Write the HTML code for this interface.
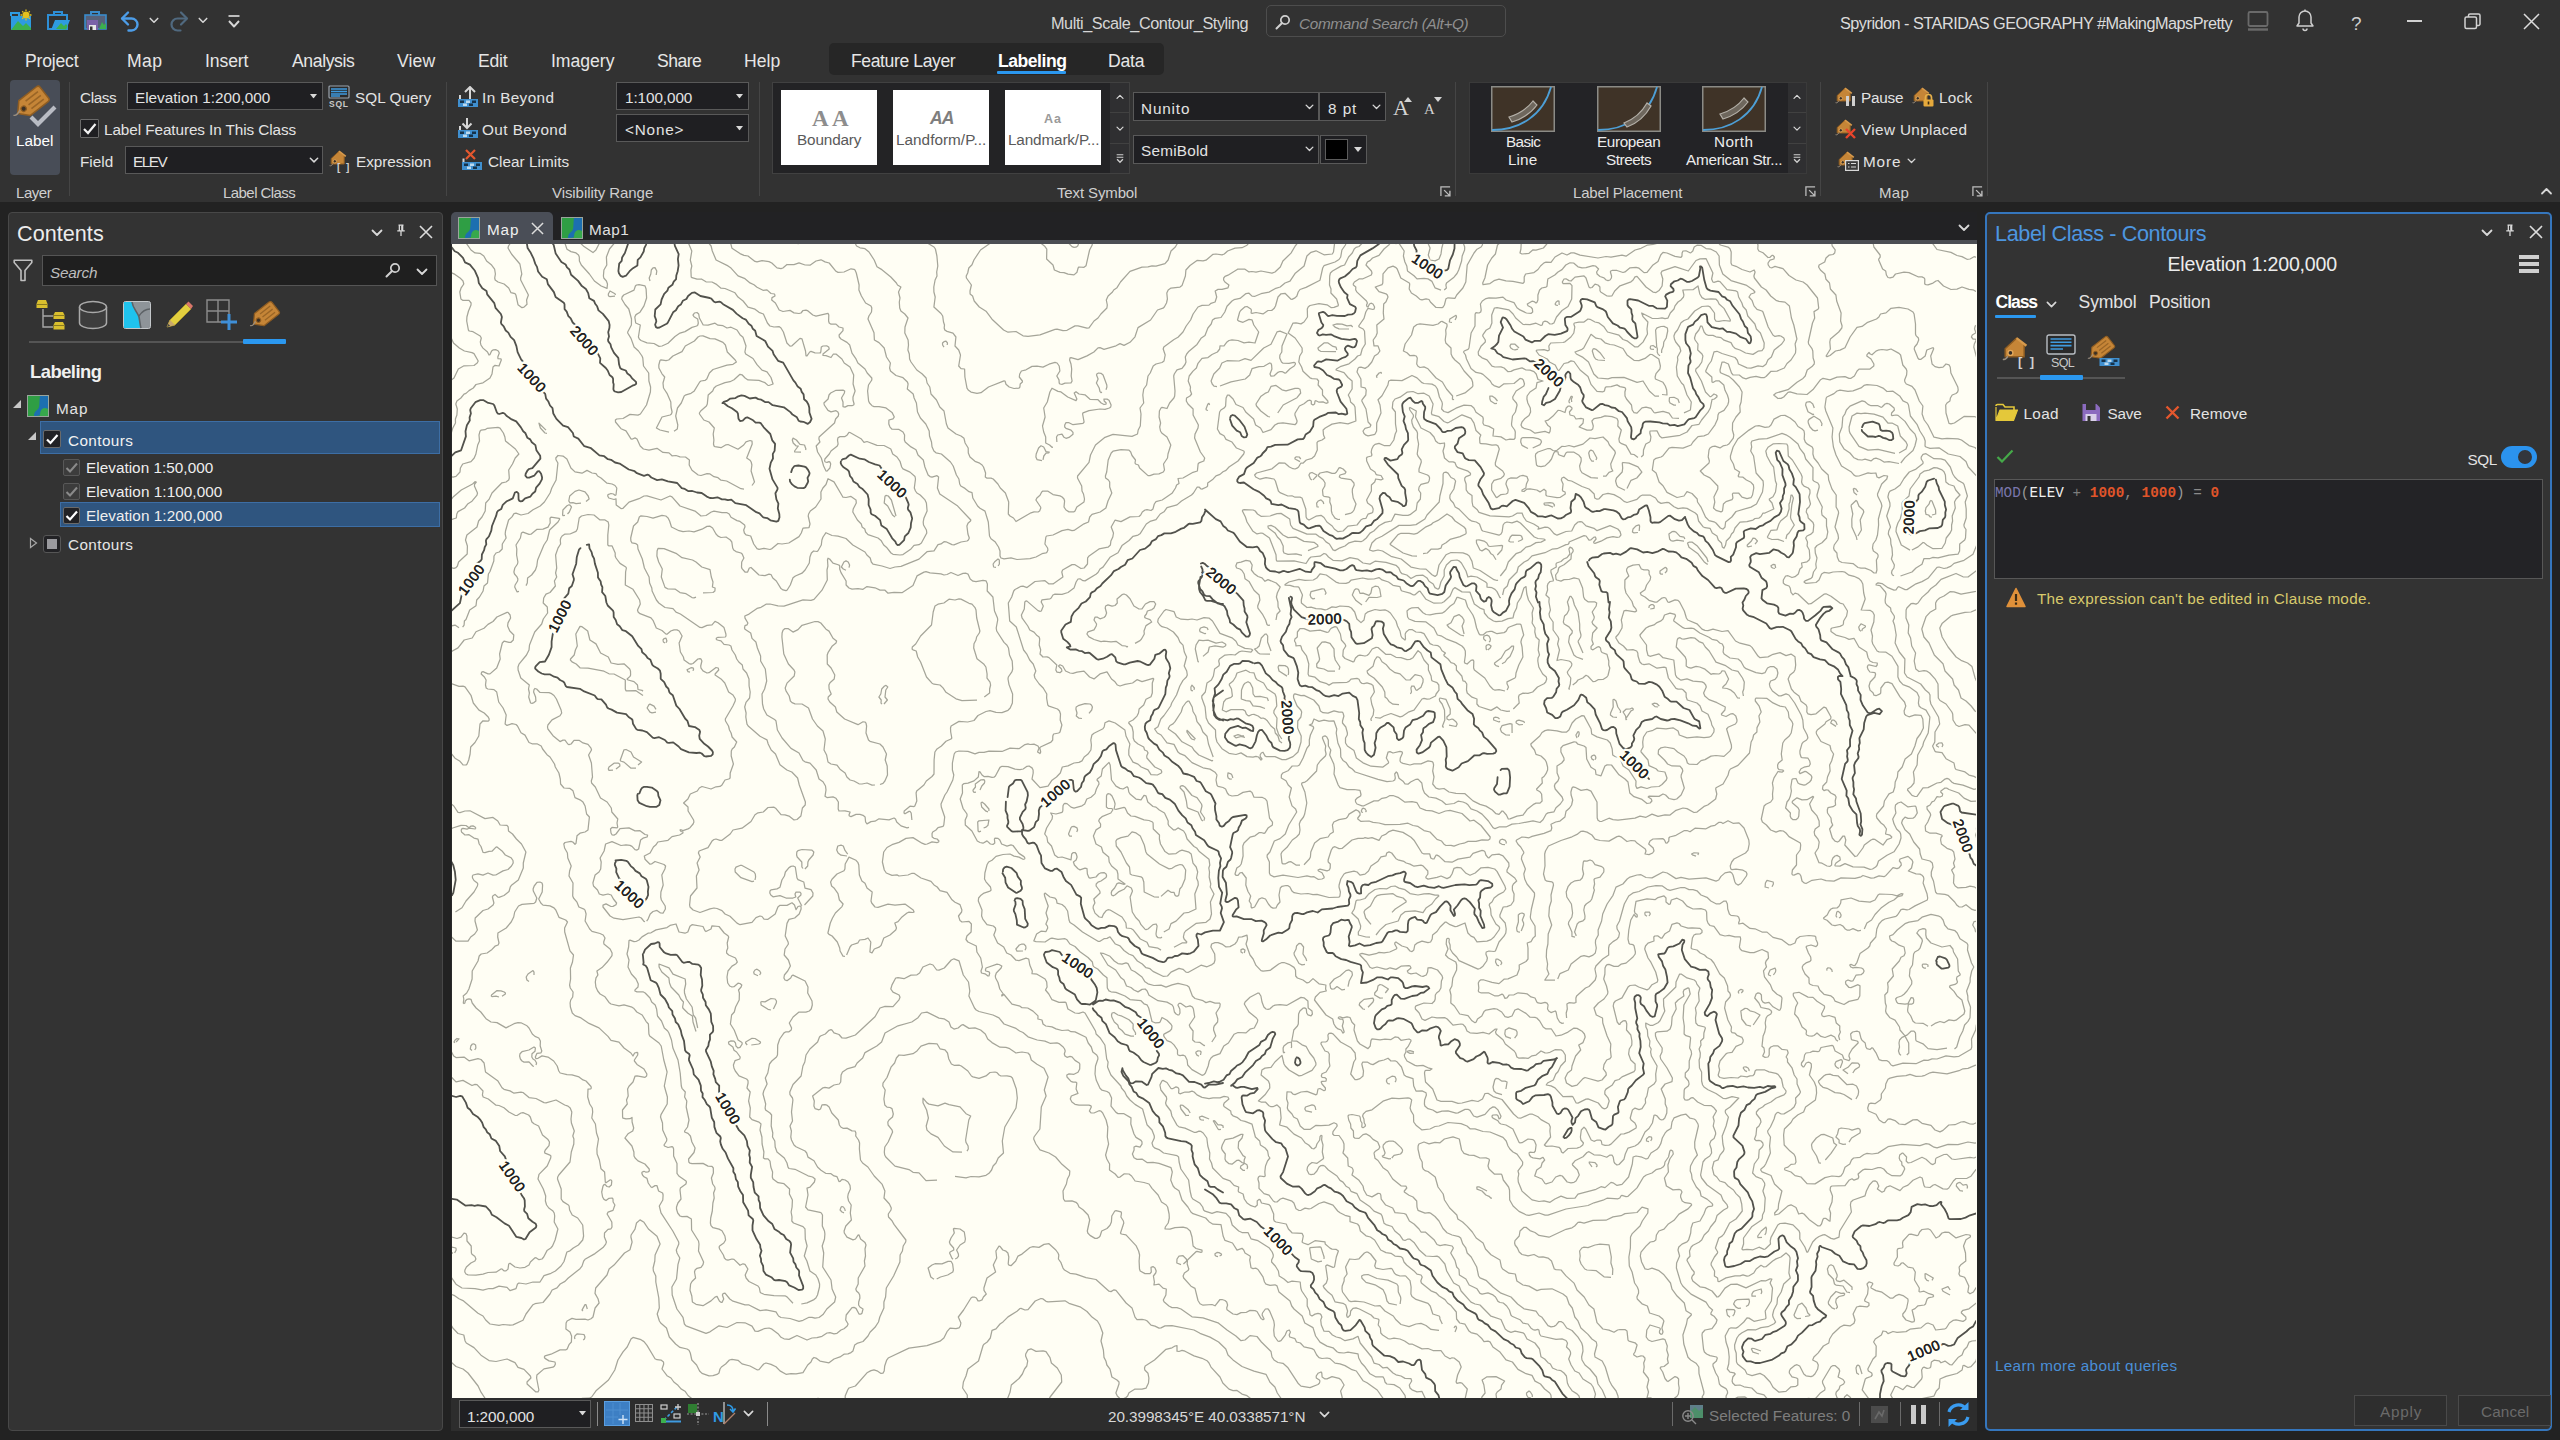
<!DOCTYPE html>
<html lang="en"><head><meta charset="utf-8"><title>ArcGIS Pro - Multi_Scale_Contour_Styling</title>
<style>
html,body{margin:0;padding:0;}
body{width:2560px;height:1440px;overflow:hidden;background:#222222;position:relative;
font-family:"Liberation Sans",sans-serif;color:#e3e3e3;}
.b{position:absolute;box-sizing:border-box;display:block;}
.t{position:absolute;white-space:nowrap;line-height:1;}
</style></head>
<body>
<svg width="0" height="0" style="position:absolute"><defs>
<symbol id="tag" viewBox="0 0 32 32"><g transform="rotate(-38 16 16)"><path d="M2.5 16 L9.5 8.5 H27.5 a2 2 0 0 1 2 2 V21.5 a2 2 0 0 1 -2 2 H9.5 Z" fill="#c58537" stroke="#8f5d22" stroke-width="1.2" stroke-linejoin="round"/><circle cx="8.6" cy="16" r="2.1" fill="#3a3026" stroke="#8f5d22" stroke-width="1"/><path d="M13.5 12.2 H26 M13.5 16 H26 M13.5 19.8 H26" stroke="#9a6526" stroke-width="1.3"/></g><path d="M7.2 21.5 c-1.5 3 -3.5 5 -5.2 4.2" fill="none" stroke="#9b8f80" stroke-width="1.1"/></symbol>
<symbol id="tagS" viewBox="0 0 22 22"><path d="M2.2 9.5 L10 2.2 L15.2 6.2 L15.2 15 L2.2 15 Z" fill="#c58537" stroke="#8f5d22" stroke-width="1"/><path d="M10 2.2 L16.8 7.4" stroke="#d79a4c" stroke-width="1.6" fill="none"/><circle cx="5.8" cy="12.3" r="1.7" fill="#3a3026" stroke="#e2a85c" stroke-width=".9"/><path d="M4 14.5 c-1 2 -2.2 2.6 -3.4 2.2" fill="none" stroke="#9b8f80" stroke-width="1"/></symbol>
<symbol id="mapico" viewBox="0 0 22 22"><rect x=".5" y=".5" width="21" height="21" fill="#2f9e44" stroke="#9aa59c"/><path d="M13 1 h8 v13 c-3 0 -4 1 -6 4 c-2 3 -5 3 -8 3 c0 -4 2 -5 4 -7 c2 -2 1 -6 2 -13z" fill="#1c6fb0"/><path d="M15 14 c2 -1.5 4 -1 6 0 v7 h-8 c0 -3 0 -5 2 -7z" fill="#37a84c"/></symbol>
<symbol id="chev" viewBox="0 0 12 8"><path d="M1.5 1.5 L6 6 L10.5 1.5" fill="none" stroke="#d8d8d8" stroke-width="1.8" stroke-linecap="round" stroke-linejoin="round"/></symbol>
<symbol id="chevu" viewBox="0 0 12 8"><path d="M1.5 6.5 L6 2 L10.5 6.5" fill="none" stroke="#d8d8d8" stroke-width="1.8" stroke-linecap="round" stroke-linejoin="round"/></symbol>
<symbol id="tri" viewBox="0 0 8 5"><path d="M0 0 H8 L4 5 Z" fill="#d8d8d8"/></symbol>
<symbol id="xx" viewBox="0 0 14 14"><path d="M1 1 L13 13 M13 1 L1 13" stroke="#dcdcdc" stroke-width="1.6" fill="none"/></symbol>
<symbol id="pin" viewBox="0 0 12 16"><path d="M3 1.5 H9 M4 1.5 V8 M8 1.5 V8 M1.5 8.5 H10.5 M6 8.5 V14.5" stroke="#dcdcdc" stroke-width="1.5" fill="none"/><path d="M6.2 2 H8 V8 H6.2Z" fill="#dcdcdc"/></symbol>
<symbol id="launch" viewBox="0 0 12 12"><path d="M1 11 V1 H11" fill="none" stroke="#bdbdbd" stroke-width="1.4"/><path d="M4.5 4.5 L10.5 10.5 M10.8 5.2 V10.8 H5.2" fill="none" stroke="#bdbdbd" stroke-width="1.5"/></symbol>
<symbol id="more" viewBox="0 0 12 12"><path d="M2 1.5 H10 M2 4.5 H10" stroke="#cfcfcf" stroke-width="1.4"/><path d="M2.5 7 L6 10.5 L9.5 7" fill="none" stroke="#cfcfcf" stroke-width="1.6"/></symbol>
<symbol id="srch" viewBox="0 0 16 16"><circle cx="10" cy="6" r="4.2" fill="none" stroke="#d0d0d0" stroke-width="1.7"/><path d="M6.8 9.2 L1.5 14.5" stroke="#d0d0d0" stroke-width="2" stroke-linecap="round"/></symbol>
<symbol id="place" viewBox="0 0 64 46"><rect x=".75" y=".75" width="62.5" height="44.5" fill="#3f3327" stroke="#8b8b86" stroke-width="1.5"/></symbol>
<symbol id="blueblk" viewBox="0 0 20 8"><rect x="0" y="0" width="20" height="8" fill="#3f8fcf"/><rect x="2" y="1.5" width="4" height="2.5" fill="#16324a"/><rect x="8" y="1.5" width="4" height="2.5" fill="#bcd9ee"/><rect x="14" y="1.5" width="4" height="2.5" fill="#16324a"/><rect x="5" y="4.5" width="4" height="2.5" fill="#bcd9ee"/><rect x="11" y="4.5" width="4" height="2.5" fill="#16324a"/></symbol>
</defs></svg>
<div class="b" style="left:0px;top:0px;width:2560px;height:202px;background:#323232;"></div>
<svg class="b" style="left:10px;top:9px;" width="22" height="22" viewBox="0 0 22 22"><rect x="1" y="7" width="20" height="14" fill="#2e9be0"/><path d="M1 21 L8 12 L13 17 L16 14 L21 19 V21Z" fill="#3cb04e"/><path d="M1 7 V4 H9 V7" fill="none" stroke="#2e9be0" stroke-width="2"/><circle cx="16" cy="6" r="3.6" fill="#e4c11e"/><path d="M16 0.5 V2 M16 10 V11.5 M10.5 6 H12 M20 6 H21.5 M12.2 2.2 L13.2 3.2 M19.8 2.2 L18.8 3.2 M12.2 9.8 L13.2 8.8 M19.8 9.8 L18.8 8.8" stroke="#e4c11e" stroke-width="1.3"/></svg>
<svg class="b" style="left:47px;top:9px;" width="23" height="22" viewBox="0 0 23 22"><path d="M7 6 V3 H15 V6" fill="none" stroke="#2e8fd6" stroke-width="2"/><rect x="1" y="6" width="19" height="14" fill="none" stroke="#2e8fd6" stroke-width="2"/><path d="M4 21 L8 11 H23 L19 21Z" fill="#2e9be0"/><path d="M9 20 L14 14 L17 17 L19 15 L20.5 17 L19 20.5Z" fill="#3cb04e"/></svg>
<svg class="b" style="left:84px;top:9px;" width="24" height="22" viewBox="0 0 24 22"><path d="M7 6 V3 H15 V6" fill="none" stroke="#3a8ccc" stroke-width="2"/><rect x="1" y="6" width="21" height="14" fill="#56617a" stroke="#3a8ccc" stroke-width="1.6"/><rect x="3" y="11" width="11" height="10" fill="#7a62a8"/><rect x="5" y="16" width="7" height="5" fill="#e8e8e8"/><rect x="6" y="17.5" width="2.5" height="3.5" fill="#333"/><path d="M15 20 L18 13 L20 16 L22 14 V20Z" fill="#3cb04e"/></svg>
<svg class="b" style="left:119px;top:10px;" width="22" height="22" viewBox="0 0 22 22"><path d="M9 2.5 L3 8.5 L9 14.5" fill="none" stroke="#4d9de8" stroke-width="2.4" stroke-linecap="round" stroke-linejoin="round"/><path d="M3.5 8.5 H12.5 a6 6 0 0 1 0 12 H9.5" fill="none" stroke="#4d9de8" stroke-width="2.4" stroke-linecap="round"/></svg>
<svg class="b" style="left:149px;top:17px;" width="10" height="7"><use href="#chev"/></svg>
<svg class="b" style="left:168px;top:10px;" width="22" height="22" viewBox="0 0 22 22"><path d="M13 2.5 L19 8.5 L13 14.5" fill="none" stroke="#50697f" stroke-width="2.2" stroke-linecap="round" stroke-linejoin="round"/><path d="M18.5 8.5 H9.5 a6 6 0 0 0 0 12 H12.5" fill="none" stroke="#50697f" stroke-width="2.2" stroke-linecap="round"/></svg>
<svg class="b" style="left:198px;top:17px;" width="10" height="7"><use href="#chev"/></svg>
<svg class="b" style="left:227px;top:14px;" width="14" height="15" viewBox="0 0 14 15"><path d="M1.5 2 H12.5" stroke="#d8d8d8" stroke-width="1.7"/><path d="M2 7 L7 12.5 L12 7" fill="none" stroke="#d8d8d8" stroke-width="1.9" stroke-linejoin="round"/></svg>
<div class="b" style="left:1266px;top:5px;width:240px;height:32px;border:1px solid #4d4d4d;border-radius:5px;"></div>
<svg class="b" style="left:1275px;top:14px;" width="16" height="16"><use href="#srch"/></svg>
<svg class="b" style="left:2247px;top:10px;" width="22" height="22" viewBox="0 0 22 22"><rect x="1.5" y="2" width="19" height="14" rx="1.5" fill="none" stroke="#6a6a6a" stroke-width="1.8"/><path d="M1 19.5 H21" stroke="#6a6a6a" stroke-width="2.4"/></svg>
<svg class="b" style="left:2295px;top:9px;" width="20" height="23" viewBox="0 0 20 23"><path d="M10 2 a6 6 0 0 1 6 6 v6 l2 3 H2 l2 -3 V8 a6 6 0 0 1 6 -6z" fill="none" stroke="#cfcfcf" stroke-width="1.5" stroke-linejoin="round"/><path d="M8 19.5 a2 2 0 0 0 4 0" fill="none" stroke="#cfcfcf" stroke-width="1.5"/><path d="M10 0.5 V2" stroke="#cfcfcf" stroke-width="1.5"/></svg>
<div class="b" style="left:2407px;top:20px;width:15px;height:2px;background:#d2d2d2;"></div>
<svg class="b" style="left:2464px;top:13px;" width="17" height="17" viewBox="0 0 17 17"><rect x="1" y="4" width="11.5" height="11.5" rx="1.5" fill="none" stroke="#d2d2d2" stroke-width="1.5"/><path d="M4.5 4 V2.5 a1.5 1.5 0 0 1 1.5 -1.5 H14.5 a1.5 1.5 0 0 1 1.5 1.5 V11 a1.5 1.5 0 0 1 -1.5 1.5 H12.5" fill="none" stroke="#d2d2d2" stroke-width="1.5"/></svg>
<svg class="b" style="left:2523px;top:13px;" width="17" height="17" viewBox="0 0 17 17"><path d="M1 1 L16 16 M16 1 L1 16" stroke="#dcdcdc" stroke-width="1.5"/></svg>
<div class="b" style="left:829px;top:43px;width:335px;height:32px;background:#262626;border-radius:5px;"></div>
<div class="b" style="left:997px;top:71px;width:69px;height:3px;background:#2b98f0;border-radius:1px;"></div>
<div class="b" style="left:10px;top:80px;width:50px;height:95px;background:#484d57;border-radius:4px;"></div>
<svg class="b" style="left:11px;top:83px;" width="40" height="40"><use href="#tag"/></svg>
<svg class="b" style="left:28px;top:104px;" width="30" height="24" viewBox="0 0 30 24"><path d="M3 13 L10 20 L27 3" fill="none" stroke="#b9bcc4" stroke-width="4.2"/></svg>
<div class="b" style="left:69px;top:82px;width:1px;height:114px;background:#454545;"></div>
<div class="b" style="left:127px;top:82px;width:196px;height:28px;background:#1f1f22;border:1px solid #595959;"></div>
<svg class="b" style="left:310px;top:94px;" width="7" height="4.5"><use href="#tri"/></svg>
<svg class="b" style="left:328px;top:85px;" width="22" height="22" viewBox="0 0 22 22"><rect x="1" y="1" width="20" height="12" rx="1" fill="#2a2a2a" stroke="#9aa3ad" stroke-width="1.2"/><path d="M3 4 H19 M3 6.5 H19 M3 9 H19 M3 11 H12" stroke="#3f9be0" stroke-width="1.3"/></svg>
<div class="b" style="left:80px;top:119px;width:19px;height:19px;background:#1f1f22;border:1px solid #6a6a6a;border-radius:1px;"></div>
<svg class="b" style="left:82px;top:121px;" width="15" height="15" viewBox="0 0 15 15"><path d="M2 8 L6 12 L13.5 3" fill="none" stroke="#f2f2f2" stroke-width="2.2"/></svg>
<div class="b" style="left:125px;top:146px;width:198px;height:28px;background:#1f1f22;border:1px solid #595959;"></div>
<svg class="b" style="left:309px;top:157px;" width="10" height="6.5"><use href="#chev"/></svg>
<svg class="b" style="left:329px;top:149px;" width="22" height="22"><use href="#tagS"/></svg>
<div class="b" style="left:446px;top:82px;width:1px;height:114px;background:#454545;"></div>
<svg class="b" style="left:458px;top:86px;" width="20" height="21" viewBox="0 0 20 21"><rect x="0" y="13" width="20" height="8" fill="#3f8fcf"/><rect x="2" y="14.5" width="4" height="2.5" fill="#16324a"/><rect x="8" y="14.5" width="4" height="2.5" fill="#bcd9ee"/><rect x="14" y="14.5" width="4" height="2.5" fill="#16324a"/><rect x="5" y="17.5" width="4" height="2.5" fill="#bcd9ee"/><rect x="11" y="17.5" width="4" height="2.5" fill="#16324a"/><path d="M2 13 V9 M12 13 V2 M7 6 L12 1 L17 6" fill="none" stroke="#d6d6d6" stroke-width="2"/></svg>
<svg class="b" style="left:458px;top:117px;" width="20" height="21" viewBox="0 0 20 21"><rect x="0" y="13" width="20" height="8" fill="#3f8fcf"/><rect x="2" y="14.5" width="4" height="2.5" fill="#16324a"/><rect x="8" y="14.5" width="4" height="2.5" fill="#bcd9ee"/><rect x="14" y="14.5" width="4" height="2.5" fill="#16324a"/><rect x="5" y="17.5" width="4" height="2.5" fill="#bcd9ee"/><rect x="11" y="17.5" width="4" height="2.5" fill="#16324a"/><path d="M2 13 V9 M9 1 V11 M4.5 6.5 L9 11 L13.5 6.5" fill="none" stroke="#d6d6d6" stroke-width="2"/></svg>
<svg class="b" style="left:462px;top:149px;" width="20" height="21" viewBox="0 0 20 21"><rect x="0" y="13" width="20" height="8" fill="#3f8fcf"/><rect x="2" y="14.5" width="4" height="2.5" fill="#16324a"/><rect x="8" y="14.5" width="4" height="2.5" fill="#bcd9ee"/><rect x="14" y="14.5" width="4" height="2.5" fill="#16324a"/><rect x="5" y="17.5" width="4" height="2.5" fill="#bcd9ee"/><rect x="11" y="17.5" width="4" height="2.5" fill="#16324a"/><path d="M1.5 13 V9.5" stroke="#d6d6d6" stroke-width="2"/><path d="M4 1 L13 10 M13 1 L4 10" stroke="#e4572e" stroke-width="2.2"/></svg>
<div class="b" style="left:616px;top:82px;width:133px;height:28px;background:#1f1f22;border:1px solid #595959;"></div>
<svg class="b" style="left:736px;top:94px;" width="7" height="4.5"><use href="#tri"/></svg>
<div class="b" style="left:616px;top:114px;width:133px;height:28px;background:#1f1f22;border:1px solid #595959;"></div>
<svg class="b" style="left:736px;top:126px;" width="7" height="4.5"><use href="#tri"/></svg>
<div class="b" style="left:759px;top:82px;width:1px;height:114px;background:#454545;"></div>
<div class="b" style="left:772px;top:82px;width:358px;height:92px;background:#232325;border:1px solid #414141;"></div>
<div class="b" style="left:1110px;top:83px;width:19px;height:90px;background:#2f2f31;"></div>
<div class="b" style="left:1110px;top:112px;width:19px;height:1px;background:#414141;"></div>
<div class="b" style="left:1110px;top:143px;width:19px;height:1px;background:#414141;"></div>
<div class="b" style="left:781px;top:90px;width:96px;height:75px;background:#ffffff;"></div>
<div class="b" style="left:893px;top:90px;width:96px;height:75px;background:#ffffff;"></div>
<div class="b" style="left:1005px;top:90px;width:96px;height:75px;background:#ffffff;"></div>
<svg class="b" style="left:1116px;top:94px;" width="8" height="5.5"><use href="#chevu"/></svg>
<svg class="b" style="left:1116px;top:126px;" width="8" height="5.5"><use href="#chev"/></svg>
<svg class="b" style="left:1115px;top:153px;" width="10" height="11"><use href="#more"/></svg>
<div class="b" style="left:1133px;top:92px;width:186px;height:29px;background:#1f1f22;border:1px solid #595959;"></div>
<svg class="b" style="left:1305px;top:104px;" width="9" height="6"><use href="#chev"/></svg>
<div class="b" style="left:1319px;top:92px;width:67px;height:29px;background:#1f1f22;border:1px solid #595959;"></div>
<svg class="b" style="left:1372px;top:104px;" width="9" height="6"><use href="#chev"/></svg>
<svg class="b" style="left:1404px;top:97px;" width="8" height="5" viewBox="0 0 8 5"><path d="M0 5 H8 L4 0Z" fill="#d4d4d4"/></svg>
<svg class="b" style="left:1434px;top:97px;" width="8" height="5" viewBox="0 0 8 5"><path d="M0 0 H8 L4 5Z" fill="#d4d4d4"/></svg>
<div class="b" style="left:1133px;top:135px;width:186px;height:29px;background:#1f1f22;border:1px solid #595959;"></div>
<svg class="b" style="left:1305px;top:146px;" width="9" height="6"><use href="#chev"/></svg>
<div class="b" style="left:1320px;top:135px;width:47px;height:29px;background:#1f1f22;border:1px solid #595959;"></div>
<div class="b" style="left:1325px;top:139px;width:23px;height:21px;background:#000000;border:1px solid #5c5c5c;"></div>
<svg class="b" style="left:1354px;top:147px;" width="8" height="5"><use href="#tri"/></svg>
<svg class="b" style="left:1440px;top:186px;" width="11" height="11"><use href="#launch"/></svg>
<div class="b" style="left:1455px;top:82px;width:1px;height:114px;background:#454545;"></div>
<div class="b" style="left:1469px;top:82px;width:338px;height:92px;background:#232326;border:1px solid #3a3a3a;"></div>
<div class="b" style="left:1788px;top:83px;width:18px;height:90px;background:#2f2f31;"></div>
<div class="b" style="left:1788px;top:112px;width:18px;height:1px;background:#414141;"></div>
<div class="b" style="left:1788px;top:143px;width:18px;height:1px;background:#414141;"></div>
<svg class="b" style="left:1491px;top:86px;" width="64" height="46" viewBox="0 0 64 46"><rect x=".75" y=".75" width="62.5" height="44.5" fill="#3f3327" stroke="#8b8b86" stroke-width="1.5"/><path d="M1 44 C28 44 52 30 60 1" fill="none" stroke="#4d9fd6" stroke-width="1.8"/><path d="M18 31 C28 28 36 23 42 15 L46 19 C40 27 31 33 21 36 Z" fill="#6e675d" stroke="#b4b0a8" stroke-width="1.2"/></svg>
<svg class="b" style="left:1597px;top:86px;" width="64" height="46" viewBox="0 0 64 46"><rect x=".75" y=".75" width="62.5" height="44.5" fill="#3f3327" stroke="#8b8b86" stroke-width="1.5"/><path d="M1 44 C28 44 52 30 60 1" fill="none" stroke="#4d9fd6" stroke-width="1.8"/><path d="M27 37 C37 33 45 26 50 17 L54 20 C49 29 41 37 30 41 Z" fill="#6e675d" stroke="#b4b0a8" stroke-width="1.2"/></svg>
<svg class="b" style="left:1702px;top:86px;" width="64" height="46" viewBox="0 0 64 46"><rect x=".75" y=".75" width="62.5" height="44.5" fill="#3f3327" stroke="#8b8b86" stroke-width="1.5"/><path d="M1 44 C28 44 52 30 60 1" fill="none" stroke="#4d9fd6" stroke-width="1.8"/><path d="M18 28 C28 25 36 20 42 12 L46 16 C40 24 31 30 21 33 Z" fill="#6e675d" stroke="#b4b0a8" stroke-width="1.2"/></svg>
<svg class="b" style="left:1793px;top:94px;" width="8" height="5.5"><use href="#chevu"/></svg>
<svg class="b" style="left:1793px;top:126px;" width="8" height="5.5"><use href="#chev"/></svg>
<svg class="b" style="left:1792px;top:153px;" width="10" height="11"><use href="#more"/></svg>
<svg class="b" style="left:1805px;top:186px;" width="11" height="11"><use href="#launch"/></svg>
<div class="b" style="left:1820px;top:82px;width:1px;height:114px;background:#454545;"></div>
<svg class="b" style="left:1835px;top:86px;" width="22" height="22"><use href="#tagS"/></svg>
<div class="b" style="left:1846px;top:96px;width:3px;height:10px;background:#d0d0d0;"></div>
<div class="b" style="left:1852px;top:96px;width:3px;height:10px;background:#d0d0d0;"></div>
<svg class="b" style="left:1912px;top:86px;" width="22" height="22"><use href="#tagS"/></svg>
<svg class="b" style="left:1922px;top:93px;" width="13" height="14" viewBox="0 0 13 14"><path d="M3.5 7 V4.5 a3 3 0 0 1 6 0 V7" fill="none" stroke="#e6b04a" stroke-width="1.7"/><rect x="1.5" y="6.5" width="10" height="7" rx="1" fill="#e6a93c"/><rect x="5.7" y="8.5" width="1.6" height="3" fill="#3a2a10"/></svg>
<svg class="b" style="left:1835px;top:118px;" width="22" height="22"><use href="#tagS"/></svg>
<svg class="b" style="left:1844px;top:127px;" width="13" height="13" viewBox="0 0 13 13"><path d="M2 2 L11 11 M11 2 L2 11" stroke="#e8452c" stroke-width="2.4"/></svg>
<svg class="b" style="left:1837px;top:150px;" width="22" height="22"><use href="#tagS"/></svg>
<svg class="b" style="left:1845px;top:160px;" width="14" height="11" viewBox="0 0 14 11"><rect x=".6" y=".6" width="12.8" height="9.8" fill="#3a3a3a" stroke="#d8d8d8" stroke-width="1.2"/><path d="M3 3.5 H4.5 M6 3.5 H11 M3 7 H4.5 M6 7 H11" stroke="#d8d8d8" stroke-width="1.2"/></svg>
<svg class="b" style="left:1907px;top:158px;" width="9" height="6"><use href="#chev"/></svg>
<svg class="b" style="left:1972px;top:186px;" width="11" height="11"><use href="#launch"/></svg>
<div class="b" style="left:1987px;top:82px;width:1px;height:114px;background:#454545;"></div>
<svg class="b" style="left:2540px;top:187px;" width="13" height="8"><use href="#chevu"/></svg>
<div class="b" style="left:8px;top:212px;width:435px;height:1219px;background:#333333;border:1px solid #484848;border-radius:4px;"></div>
<svg class="b" style="left:371px;top:229px;" width="12" height="8"><use href="#chev"/></svg>
<svg class="b" style="left:396px;top:223px;" width="10" height="15"><use href="#pin"/></svg>
<svg class="b" style="left:419px;top:225px;" width="14" height="14"><use href="#xx"/></svg>
<svg class="b" style="left:13px;top:259px;" width="20" height="23" viewBox="0 0 20 23"><path d="M1.2 1.2 H18.8 V3.5 L12 11.5 V21.5 H8 V11.5 L1.2 3.5 Z" fill="none" stroke="#bfbfbf" stroke-width="1.6" stroke-linejoin="round"/></svg>
<div class="b" style="left:42px;top:255px;width:395px;height:31px;background:#1f1f1f;border:1px solid #555555;"></div>
<svg class="b" style="left:385px;top:262px;" width="16" height="16"><use href="#srch"/></svg>
<svg class="b" style="left:416px;top:268px;" width="12" height="8"><use href="#chev"/></svg>
<svg class="b" style="left:35px;top:299px;" width="32" height="32" viewBox="0 0 32 32"><path d="M8 10 V28 H18 M8 17 H18" fill="none" stroke="#a8a8a8" stroke-width="1.4"/><path d="M3 1 H11 L12.5 5 V9 H1.5 V5Z" fill="#d9bf2e"/><path d="M1.5 5.5 H12.5" stroke="#8a7a20" stroke-width="1"/><path d="M20 13 H28 L29.5 16 V20 H18.5 V16Z" fill="#d9bf2e"/><path d="M18.5 16.5 H29.5" stroke="#8a7a20" stroke-width="1"/><path d="M20 23 H28 L29.5 26 V30.5 H18.5 V26Z" fill="#d9bf2e"/><path d="M18.5 26.5 H29.5" stroke="#8a7a20" stroke-width="1"/></svg>
<svg class="b" style="left:78px;top:300px;" width="30" height="30" viewBox="0 0 30 30"><path d="M1.5 7 V23 a13.5 5.5 0 0 0 27 0 V7" fill="#3d3d3d" stroke="#a9a9a9" stroke-width="1.5"/><ellipse cx="15" cy="7" rx="13.5" ry="5.5" fill="#333" stroke="#a9a9a9" stroke-width="1.5"/></svg>
<svg class="b" style="left:123px;top:301px;" width="28" height="28" viewBox="0 0 28 28"><rect x=".5" y=".5" width="27" height="27" rx="2" fill="#8e9499" stroke="#c3c7ca"/><path d="M1 1 H9 C10 8 14 10 16 16 C17 21 17 24 18 27 H1Z" fill="#1fc3ee"/><path d="M9 1 C10 8 14 10 16 16 C17 21 17 24 18 27" fill="none" stroke="#5d6266" stroke-width="1.6"/><path d="M16 15 C20 9 24 8 27 8" fill="none" stroke="#5d6266" stroke-width="1.4"/></svg>
<svg class="b" style="left:164px;top:300px;" width="30" height="30" viewBox="0 0 30 30"><path d="M3 27 L6 20 L22 4 L27 9 L11 25 Z" fill="#e2cf3e" stroke="#a8952a" stroke-width="1"/><path d="M22 4 L24.5 1.5 L29 6 L27 9Z" fill="#d9766a"/><path d="M3 27 L6 20 L11 25Z" fill="#c9a86c"/><path d="M3 27 L4.3 24 L6.2 25.8Z" fill="#444"/></svg>
<svg class="b" style="left:206px;top:299px;" width="34" height="32" viewBox="0 0 34 32"><path d="M1 1 H23 V23 H1 Z M12 1 V23 M1 12 H23" fill="none" stroke="#8d8d8d" stroke-width="1.4"/><path d="M23 15 V31 M15 23 H31" stroke="#3f8fd8" stroke-width="3"/></svg>
<svg class="b" style="left:248px;top:299px;" width="33" height="33"><use href="#tag"/></svg>
<div class="b" style="left:29px;top:341px;width:215px;height:2px;background:#555555;"></div>
<div class="b" style="left:243px;top:339px;width:43px;height:5px;background:#2b98f0;border-radius:1px;"></div>
<svg class="b" style="left:12px;top:399px;" width="10" height="10" viewBox="0 0 10 10"><path d="M9 1 V9 H1 Z" fill="#c8c8c8"/></svg>
<svg class="b" style="left:27px;top:395px;" width="22" height="22"><use href="#mapico"/></svg>
<div class="b" style="left:40px;top:421px;width:400px;height:33px;background:#2f557f;border:1px solid #3d6ea5;"></div>
<svg class="b" style="left:27px;top:431px;" width="10" height="10" viewBox="0 0 10 10"><path d="M9 1 V9 H1 Z" fill="#c8c8c8"/></svg>
<div class="b" style="left:43px;top:430px;width:18px;height:18px;background:#222225;border:1px solid #6a6a6a;border-radius:2px;"></div>
<svg class="b" style="left:45px;top:432px;" width="14" height="14" viewBox="0 0 14 14"><path d="M2 7.5 L5.5 11 L12.5 3" fill="none" stroke="#ffffff" stroke-width="2.2"/></svg>
<div class="b" style="left:63px;top:459px;width:17px;height:17px;background:#3c3c3c;border:1px solid #585858;border-radius:2px;"></div>
<svg class="b" style="left:65px;top:461px;" width="13" height="13" viewBox="0 0 13 13"><path d="M1.5 7 L5 10.5 L12 2.5" fill="none" stroke="#8a8a8a" stroke-width="2"/></svg>
<div class="b" style="left:63px;top:483px;width:17px;height:17px;background:#3c3c3c;border:1px solid #585858;border-radius:2px;"></div>
<svg class="b" style="left:65px;top:485px;" width="13" height="13" viewBox="0 0 13 13"><path d="M1.5 7 L5 10.5 L12 2.5" fill="none" stroke="#8a8a8a" stroke-width="2"/></svg>
<div class="b" style="left:60px;top:502px;width:380px;height:25px;background:#2f557f;border:1px solid #3d6ea5;"></div>
<div class="b" style="left:63px;top:507px;width:17px;height:17px;background:#222225;border:1px solid #6a6a6a;border-radius:2px;"></div>
<svg class="b" style="left:65px;top:509px;" width="13" height="13" viewBox="0 0 13 13"><path d="M1.5 7 L5 10.5 L12 2.5" fill="none" stroke="#ffffff" stroke-width="2.2"/></svg>
<svg class="b" style="left:29px;top:537px;" width="9" height="12" viewBox="0 0 9 12"><path d="M1.5 1.5 L7.5 6 L1.5 10.5Z" fill="none" stroke="#a8a8a8" stroke-width="1.2"/></svg>
<div class="b" style="left:43px;top:535px;width:18px;height:18px;background:#222225;border:1px solid #565656;border-radius:3px;"></div>
<div class="b" style="left:47px;top:539px;width:10px;height:10px;background:#9a9a9e;"></div>
<div class="b" style="left:451px;top:212px;width:1526px;height:32px;background:#222224;"></div>
<div class="b" style="left:451px;top:212px;width:102px;height:32px;background:#4a4e57;border-radius:5px 5px 0 0;"></div>
<div class="b" style="left:451px;top:240px;width:1526px;height:4px;background:#4c4e53;"></div>
<svg class="b" style="left:458px;top:217px;" width="22" height="22"><use href="#mapico"/></svg>
<svg class="b" style="left:531px;top:222px;" width="13" height="13"><use href="#xx"/></svg>
<svg class="b" style="left:561px;top:217px;" width="22" height="22"><use href="#mapico"/></svg>
<svg class="b" style="left:1958px;top:224px;" width="12" height="8"><use href="#chev"/></svg>
<div class="b" style="left:451px;top:244px;width:1526px;height:1154px;background:#fffef4;"></div>
<div class="b" style="left:451px;top:244px;width:1px;height:1154px;background:#2a2a2a;"></div>
<div class="b" style="left:451px;top:1398px;width:1526px;height:33px;background:#2d2d2d;"></div>
<div class="b" style="left:459px;top:1400px;width:132px;height:28px;background:#1f1f22;border:1px solid #595959;"></div>
<svg class="b" style="left:579px;top:1411px;" width="7" height="4.5"><use href="#tri"/></svg>
<div class="b" style="left:597px;top:1402px;width:1px;height:24px;background:#8a8a8a;"></div>
<div class="b" style="left:604px;top:1401px;width:26px;height:25px;background:#3d7fc4;border:1px solid #5a9ee0;"></div>
<svg class="b" style="left:606px;top:1403px;" width="22" height="21" viewBox="0 0 22 21"><path d="M7 0 V21 M14 0 V12 M0 7 H22 M0 14 H12" stroke="#4f8fd0" stroke-width="1"/><path d="M17 12 V21 M12.5 16.5 H21.5" stroke="#cfe3f7" stroke-width="1.4"/></svg>
<svg class="b" style="left:635px;top:1404px;" width="18" height="18" viewBox="0 0 18 18"><path d="M.5 .5 H17.5 V17.5 H.5Z M4.75 .5 V17.5 M9 .5 V17.5 M13.25 .5 V17.5 M.5 4.75 H17.5 M.5 9 H17.5 M.5 13.25 H17.5" fill="none" stroke="#8f8f8f" stroke-width="1.1"/></svg>
<svg class="b" style="left:660px;top:1404px;" width="22" height="20" viewBox="0 0 22 20"><rect x="1" y="1" width="6" height="4" fill="none" stroke="#cfcfcf" stroke-width="1.2"/><rect x="14" y="10" width="6" height="4" fill="none" stroke="#cfcfcf" stroke-width="1.2"/><path d="M4 16 L17 3" stroke="#3f9be0" stroke-width="1.6" stroke-dasharray="3 2"/><rect x="1" y="14" width="5" height="5" fill="#3cb04e"/><path d="M6 17.5 H21" stroke="#3f9be0" stroke-width="2"/><path d="M15 3 H21 M18 0 V6" stroke="#cfcfcf" stroke-width="1.3"/></svg>
<svg class="b" style="left:687px;top:1403px;" width="22" height="22" viewBox="0 0 22 22"><rect x="1" y="1" width="9" height="9" fill="#2f7d32"/><path d="M11 0 V22 M0 11 H22" stroke="#9a9a9a" stroke-width="1.2" stroke-dasharray="2 1.6"/><rect x="9" y="9" width="4" height="4" fill="#cfcfcf"/></svg>
<svg class="b" style="left:723px;top:1402px;" width="13" height="23" viewBox="0 0 13 23"><path d="M1 0 V22" stroke="#c9c9c9" stroke-width="1.3"/><path d="M1 22 L12 11" stroke="#b0806a" stroke-width="1.3"/><path d="M4 3 c4 0 6 2 6 6 M7 7 L10 10 L12.5 6.5" fill="none" stroke="#2f9ae6" stroke-width="1.6"/></svg>
<svg class="b" style="left:743px;top:1410px;" width="11" height="7.5"><use href="#chev"/></svg>
<div class="b" style="left:767px;top:1402px;width:1px;height:24px;background:#8a8a8a;"></div>
<svg class="b" style="left:1319px;top:1411px;" width="11" height="7.5"><use href="#chev"/></svg>
<div class="b" style="left:1672px;top:1402px;width:1px;height:24px;background:#6a6a6a;"></div>
<svg class="b" style="left:1681px;top:1403px;" width="23" height="22" viewBox="0 0 23 22"><rect x="9" y="2" width="13" height="13" fill="#5f7f8a"/><path d="M9 9 L14 4 L18 8 L22 5 V15 H9Z" fill="#4d8f6a"/><circle cx="7" cy="13" r="5.2" fill="none" stroke="#8a8a8a" stroke-width="1.4"/><path d="M7 10 V16 M4 13 H10 M11 17 L15 21" stroke="#8a8a8a" stroke-width="1.4"/></svg>
<div class="b" style="left:1859px;top:1402px;width:1px;height:24px;background:#6a6a6a;"></div>
<svg class="b" style="left:1871px;top:1406px;" width="17" height="17" viewBox="0 0 17 17"><rect x="0" y="0" width="17" height="17" fill="#4c4c4c"/><path d="M4 13 L8 6 L11 10 L13 4" fill="none" stroke="#6a6a6a" stroke-width="1.6"/></svg>
<div class="b" style="left:1900px;top:1402px;width:1px;height:24px;background:#6a6a6a;"></div>
<div class="b" style="left:1911px;top:1405px;width:5px;height:19px;background:#c9c9c9;"></div>
<div class="b" style="left:1921px;top:1405px;width:5px;height:19px;background:#c9c9c9;"></div>
<div class="b" style="left:1939px;top:1402px;width:1px;height:24px;background:#6a6a6a;"></div>
<svg class="b" style="left:1946px;top:1402px;" width="25" height="25" viewBox="0 0 25 25"><path d="M3 10 A9.5 9.5 0 0 1 20 7" fill="none" stroke="#3a9cf0" stroke-width="3.2"/><path d="M22 15 A9.5 9.5 0 0 1 5 18" fill="none" stroke="#3a9cf0" stroke-width="3.2"/><path d="M14 8 H22.5 V0Z" fill="#3a9cf0"/><path d="M11 17 H2.5 V25Z" fill="#3a9cf0"/></svg>
<div class="b" style="left:1985px;top:212px;width:567px;height:1219px;background:#333333;border:2px solid #3576bd;border-radius:5px;"></div>
<svg class="b" style="left:2481px;top:229px;" width="12" height="8"><use href="#chev"/></svg>
<svg class="b" style="left:2505px;top:223px;" width="10" height="15"><use href="#pin"/></svg>
<svg class="b" style="left:2529px;top:225px;" width="14" height="14"><use href="#xx"/></svg>
<div class="b" style="left:2519px;top:255px;width:20px;height:4px;background:#cfcfcf;"></div>
<div class="b" style="left:2519px;top:262px;width:20px;height:4px;background:#cfcfcf;"></div>
<div class="b" style="left:2519px;top:269px;width:20px;height:4px;background:#cfcfcf;"></div>
<div class="b" style="left:1995px;top:315px;width:41px;height:3px;background:#2b98f0;border-radius:1px;"></div>
<svg class="b" style="left:2046px;top:301px;" width="11" height="7.5"><use href="#chev"/></svg>
<svg class="b" style="left:2002px;top:335px;" width="32" height="32"><use href="#tagS"/></svg>
<svg class="b" style="left:2046px;top:334px;" width="30" height="22" viewBox="0 0 30 22"><rect x="1" y="1" width="28" height="19" rx="2" fill="#2a2a2a" stroke="#b9bec4" stroke-width="1.4"/><path d="M4.5 5 H25.5 M4.5 8.3 H25.5 M4.5 11.6 H25.5 M4.5 15 H17" stroke="#3f9be0" stroke-width="1.6"/></svg>
<svg class="b" style="left:2086px;top:334px;" width="30" height="30"><use href="#tag"/></svg>
<svg class="b" style="left:2099px;top:358px;" width="21" height="8"><use href="#blueblk"/></svg>
<div class="b" style="left:1997px;top:377px;width:128px;height:2px;background:#555555;"></div>
<div class="b" style="left:2040px;top:375px;width:43px;height:5px;background:#2b98f0;border-radius:1px;"></div>
<svg class="b" style="left:1995px;top:403px;" width="23" height="19" viewBox="0 0 23 19"><path d="M1 3 a1.5 1.5 0 0 1 1.5 -1.5 H8 L10 4 H19 V7" fill="none" stroke="#e4c83a" stroke-width="1.6"/><path d="M1 17.5 V4 M1 17.5 L5 7 H22.5 L18.5 17.5 Z" fill="#e4c83a" stroke="#e4c83a" stroke-width="1.2" stroke-linejoin="round"/></svg>
<svg class="b" style="left:2081px;top:403px;" width="20" height="19" viewBox="0 0 20 19"><path d="M1.5 1 H15.5 L19 4.5 V18 H1.5Z" fill="#8b6bbf"/><rect x="5" y="1" width="9.5" height="6" fill="#333"/><rect x="4.5" y="11" width="11" height="7" fill="#d9d0ea"/><rect x="6.5" y="13" width="3" height="5" fill="#333"/></svg>
<svg class="b" style="left:2165px;top:405px;" width="15" height="15" viewBox="0 0 15 15"><path d="M1.5 1.5 L13.5 13.5 M13.5 1.5 L1.5 13.5" stroke="#e4572e" stroke-width="2.4"/></svg>
<svg class="b" style="left:1996px;top:449px;" width="18" height="14" viewBox="0 0 18 14"><path d="M1.5 8 L6 12.5 L16.5 1.5" fill="none" stroke="#45a949" stroke-width="2.2"/></svg>
<div class="b" style="left:2501px;top:446px;width:36px;height:22px;background:#2b93ee;border-radius:11px;"></div>
<div class="b" style="left:2516px;top:448px;width:18px;height:18px;background:#33363c;border:2px solid #2b93ee;border-radius:9px;"></div>
<div class="b" style="left:1994px;top:479px;width:549px;height:100px;background:#232326;border:1px solid #575757;"></div>
<svg class="b" style="left:2006px;top:587px;" width="20" height="21" viewBox="0 0 20 21"><path d="M10 1.5 L19 19.5 H1 Z" fill="#e0913a" stroke="#e0913a" stroke-width="1.5" stroke-linejoin="round"/><path d="M10 7 V14" stroke="#3a2a14" stroke-width="2.2"/><rect x="8.9" y="15.5" width="2.2" height="2.2" fill="#3a2a14"/></svg>
<div class="b" style="left:2354px;top:1395px;width:93px;height:31px;background:#2e2e2e;border:1px solid #4a4a4a;"></div>
<div class="b" style="left:2458px;top:1395px;width:93px;height:31px;background:#2e2e2e;border:1px solid #4a4a4a;"></div>
<svg class="b" style="left:452px;top:244px;overflow:hidden" width="1524" height="1154" viewBox="0 0 1524 1154">
<g fill="none" stroke="#a5a599" stroke-width="1.25" stroke-linejoin="round">
<path d="M10.6 383l1.5-2 0.3-4 1.6-1.5 3.7-9.5 6.3-4.2 0.7-5.8 2.8-3 3.6-6 0.9-5 3.5-3 0.9-9 1.6-2.5 3.8-10.5 0.2-5 2-3 3.2-1 3-3 0.1-5 3.8-6-0.9-4 0.3-3 3.1-11 3.4-3.1 2-3.3 2-0.4 5 1.8 7-1.5 5-3.7 7.2-3.8 4.2-4 5.7-9 1.7-5 4.3-8 1.8-17-1.9-3.2-0.2-1.8 2.2-2.5 5 0.6 3.9 2.9 4 9 4.1 3.9 7 1.3 5-2.8 5 2.6 4 0.6 1.6 2.4 3.4 2 6 5.2 5.1 0.8 2.9 1.5 1.8 2.5-0.8 7-1 0.3-1.6-1.3-2.4-0.5-3 1.2-0.3 1.3 1.1 2 5.2 1.5 2-0.7 0.2 6.2 4.8 3.6 2-0.3 6-6.2 10-3.4 5-2.7 3-0.2 14 4.2 9-4 2 0.9 8 9.1 15 5.1 6 4.9 5-0.5 5.3-3.5 2.7-0.9 8 1.6 5-0 2.2 1.3 1.8 3.3 6 3.3 3 0.8 4.6 3.6 0.4 1.7-1.3 3.3 0.7 3 1.6 1.8 4.7 1.2 3 8 3.3 4.6 2 0.8 5-1.1 6 1.2 2-0.9 6-5.1 4 0.5 6.8-1 10.2-6.4 2.3-3.6 1.7-4.9 6-0.5 1-3.6-1.8-8 0.4-2 1.7-3 5.4-4 5.3-8-0.1-7 2-4 3.1-3.5 2-5.8 6 3.2 9 15.3 3 0.3 5-1.1 5 3.5 0.3 3.1-3.1 6-0.4 3 4.6 8 3.9 4 0.8 3 2.7 2 0.8 3 2.4 2.6 10 3.4 3 2.4 2.7 4.6 3.3 2.8 4 5.2 2 1.3 7 0.7 3-0.4 8-5.7 3-3.6 5-0.6 2.4-1.7 5.4-10-0.4-3-2.9-5-0.3-3 0.8-4.1 3.1-6.9-0.7-8-1.4-3.1-4.8-4.9-3.3-2-1.4-2-1.2-3 1.2-9-0.5-2.5-5-4.4-7-3.2-1.3-1.9-1.7-5.7-3-4.3-4.3-3-1.9-5-6.8-3.5-7-0.2-10-3.8-3 0.9-3-3.7-11-6.2-1-0.1-2 2.8-2 1.4-5-0-2 1.1-0.5 2.3 0.6 4-0.8 2-6.3 5-1.7 3-4.4 5-0.3 2 0.7 1 1.7 0.3 2-0.7 1 0.5 0.7 1.9-0.8 4-2.9 3.1-1-0.1-2.4-5-2.3-8-3.7-6-1.4-6 3.7-4-1-3 0.2-2 15.4-14 1.1-4 2.7-3 0.4-2-0.8-2-1.9-1.3-5 1.2-3-1.5-3.7-5.4-0.4-2 4.2-4 0.9-4 1.7-2 5.3-2.7 7-0.2 1.7 0.9-0.3 2-2.9 5 1.5 4 0 4.6 2 0.5 3-1.5 4 0.1 1.6-0.7 0.5-1-1.1-4 0-3 2.1-6-2-7 0.6-9-3.7-7.9-5.8-4.1-2.3-4-5.9-5-2.6-0-2.4 3.5-5-1.8-3-0.2 0-1.5 6.2-5-0.5-2-1.7-1.1-4 0.1-1.7 1-0.5 5-0.8 1-5-0.2-4-1.4-1.3 0.6-2.7 3.8-1-0-0.5-4.8-3.5-12.1-2-0.5-8 7.4-2 0.3-3.1-3.1-3.5-11-2.4-4-2-1.4-5 0.4-4.1-1-2.5-3-4-9-4.4-1.7-4-3.1-7-2.1-4.9-6.1-5.1-3.9-3-4.3-10-4.3-4-0.3-5-4.1-4-2.1-6-0.2-4.6-2.8-4.4 0.2-5-1.5-0.8-0.7-0.3-7 0.9-4-1.5-6 1.5-9-4.7-11-0.1-5-6.2-8-6.8-2-9 0.5-3.1 6.5-1.9 2.3-2-0.7-4-4.4-3-1.9-3-0.2-3.2 1.9-6.8 1.5-11-5.5-3 0.2-4.3 1.8-4 5-1.2 11-5 6-3.1 8 0.4 8-2.9 5-0.5 6 0.4 2 2.6 3 1.1 3-0.5 4.4-5.8-2.4-6.8-5-5-7-8.1-9-1.9-4-0.1-4-0.8-2-2.5-2.1-5-1.3-4-2.4-3.9-11.2-7.1-7.2-3-1.3-11-2.1-9 2.2-6-2.5-4 1.3-8.5 5.6-1.5 5-4.5 7-0.5 2 3.5 6 8.4 10 1.9 10-1.2 4 0.1 2 7.7 15-1.8 5 0.4 4.2-3 2.9-2 0.6-4-3-2.1-9.7-0.9-1.4-4-0.9-2.3-4.7-4.6-4-6.1-2-2.8-2-0.5-2 0.7-4-0.8-5-3-4-5-4-2.8-5-3.8-2.7-5-0.4-4-2.9-7.7-11-3.5-7-2.8-1.5-4-0-9 4.1-4 3.4-2.8 4-1 5-2 5 0.9 2 3.9 2.7 1.6 3.3-3 5-0.2 4 6.6 6.4 2-0.1 3-2.4 2-0.3 4 1.8 5 3.5 3 3.1 0.8 3-2.8 4.2-1.2 3.8 1.1 7 2.1 1.4 6-0 2.1 2.6-0.1 2-2.5 6-1.6 6-0.2 4 1.7 9 0.8 1 3.8 0.7 7.2 4.3 1.1 2-1 4 0.6 3 2.1 3.1 4.5 3.9 1.5 3 1-0.4 1.6-3.6 1.4-1.1 3-0.2 2.3 1.3 1 2-1.5 4 0.2 1.7 3 0.2 0.3 1.1-2.3 6-4-0.7-2 1.7-1 7-2 4-7 4.8-7 1.7-2.7 3.5-4.3 2.6-3 2.8-2 0.8-3.1 3.8-4 3-1.1 3 1.5 5-0.4 6-1.5 4 0.1 4-2.7 5-4 13-2.5 4-2.3 1.6-8 0.6-3.1 1.8-3.1 5 0.1 4-0.7 3 0.5 3 1.4 3 4.9 2.6 3.2 3.4 2.9 2 10.9 2.1 3-0.7 4-4.4 0.4-4 2.3-4 8.3-2.4 3.2-3.6 1.7-4 1.8-9 1.8-4-0.5-6 1-3.8 1-1 4-0.5 2-1.3 11-1 2 0.8 3.4 4.8 1.5 4 0.6 4 9.9 8 3.5 5-3.7 4-2.7 6-3.8 6 0.6 8-0.6 2-2.7 2-4 0.8-10 10.2-3 6.4-3.3 3.6-0.5 8-3.2 6-3.4 4-1.6 6-10.1 8-1.4 5 1.9 6-0.2 8-8.6 8-1.2 4-1.4 1.6-2 0.7-5-0.9-2 0.9-3.4 10.7 1.4 7-0.6 2-2.4 4.6-9.6 8.4-2.1 4-0.3 2 1.2 4-0.4 4 3 2 1.5 4 2.7 2.7 11 2.7 6-1.3 4 2.7M992.2 46l2.2-2-0.5-3 0.6-2 7.5-5.8 3-3.7 1.7-3.5 2.9-9 0.6-5 2.4-6 0.1-3-1.8-5-0.6-5-4.3-4.5-4-1.3-2-1.4-1.7 0.2-1.1 3-3.2 1.6-1 1.8-3.2 11.6-0.8 5.9-2 5.1-4 1.9-5-0.9-1.7-5 1.8-7-1.8-4-0.3-4.3-4-2.4-3.1-6.3-2.9-3.3-6-0-3 0.7-3 3.6-1.5 8-1.5 1.2-3.8 0.8-0.4 1 5.4 8-0.8 5 1.5 6 1.9 4 0.7 5 6.5 4.7 3 3.2 7-0.5 4 0.5 4 2.5 3 6.4 6 2.3M1563 903l-3-1.7-3.3 3.7 0.3 3 2.6 4-6.6 1.1-4 2.3-10 2.9-4 2.4-6 1.1-5.5 4.2-4.5 6.2-4 2.1-11 0.2-2.6 2.5-4.6 7-1.8 1.2-4-0.3-8-4.4-1.7 0.5-3.3 2.5-5-0.5-1-1.3-1.8-7.7-2.2-1-7 3.3-5 4.8-5 2.2-3 3.3-10-4.8-3.3 1.2-1.7 2-0.6 2-2.4 1.2-4.6-3.2 1.4-3-1.8-4-2-1.2-2 0.3-3.6 3.9-3 6-1.4 4.9-11.8 4.1-2.3 2-0.5 3 1 7-11.7 19-0.7 6.2-5 2-3-0.8-6-3.7-2 0.1-4 1.7-3 2-3.3 3.5-4.9 10-1-0-1.9-5-5.1-8-0-6-0.7-2-6.1-6.1-8-1.7-5 0.3-2.2 1.5-6.8 12.4-0.8 3.6 0.3 3-5.2 5-1.3 0.3-5-2.1-6 2.6-6-0.4-4 0.5-1.1-0.9 1.7-5-0.1-6 8.5-11.6 9.5-6.4 0.9-2 0.1-3 1.9-4 0.8-13-2.3-7 1.9-6-0.2-2-2.6-4-6-2.3-3.4-3.7 1.7-9 4.3-6 0.6-8 3-3 1-2-0.4-2-1.8-2-2-0.7-3 0.3-1.5-1.6 1.5-4 0.7-7 2.3-2 2-4-0.7-3-3.9-5-0-2 2.5-3 3.7-2 2.4-2.3 6-2.7 5.2-4 7.8-3.1 1.7-1.9 0.4-2-2.9-4-1.7-8-3.5-4.6-2-1-7-1.5-4.2-1.9-8.6 0-1.1 1-0.7 3-1.4 1.7-3 0.1-3 1.1-6-0.9-3 2-7-0.5-7 0.8-4-0.8-1.5-1.5-0.3-1 1.4-5-0.9-4 1.3-5 6-7.1 1.5-0.9 4.5-0.7 4-5.9 5.7-2.4 1.3-2 0.2-2-1.2-2.6-5-2.1-2-2.1-3-0.6-1-1.6 0.5-4-3.6-7-3.3-12 1-6 4.4-5 0.5-2-0.7-2-1.8-2-0.4-5-3.3-8-4.5-4-5.9-11-2.9-3.5-4-2-2.5-2.5-4.3-2-3.2-3-4.7-1-1.2-1 1.3-10 1.6-3 2-0.9 4-0.1 2-1.4-0-2.2-2-2-8-0.6-4 0.4-6.9-2.2-2.1-2.5-2-0.7-5 1.5-2.5 6.7-4.5 2.7-3 4.5-1 0-3-2.3-3.2 0.1-1 1 0.2 4-6 2.1-2.5 2.9-0.8 3 3.3 9 3 4.4 4.7 9.6 2.1 8-0.5 2-5.3 2.7-3 4-2 1.2-8.3-2.9-3.7-2-5 0.5-2 1.6-6 10.8-6.6 3.1-1.6 2-0.6 3 4 16 1.8 2.3 1-0 0.4-1.3 2.6-2.1 2-0.3 1 0.7 0.8 2.7-0.3 6 4.3 5 1.1 6-0.1 4-2.5 4-0.7 5 2.2 6 4.3 4-0 6-1.1 1.6-12 5.3-3 2.6-4 1.2-3 4.6-6 3.8-1.1 1.9-0.1 3 3.2 3.8 1.2 3.2-1.8 6-1.4 1.4-2 0.4-2-1.2-3.7-4.6-10.3-4.1-2 0.2-8 4-2-0.3-3-5.8-1-0.7-9 0.4-8-8.8-4-2-4.8-0.9 1.3-2 5.8-3 2.5-6 2.2-2.3 2.7-5.7 4.7-5-0.1-6-2.3-3.8-2-1.4-6-0.1-5 2.6-3 0.7-2-0.1-4-1.9-5 4.1-4 0.7-4 2.6-5-0.6-4 0.4-2.1-1.2-1.3-4-1.4-2-8.9-7-2.3-4.3-6.8-5.7-0.7-2 1.5-3-2 0.2-6 4.8-6-1.7-6 1-7-0.5-3-1.8-1.6-4-2.4-2.7-2-0.3-8 1.1-5.8-6.1-2.2-1.3-8 0.1-5-0.8-7 3.4-3-1.4-3-6.2-3.6-3.8-0.2-2 0.8-1.1 8-2.9 8 0.5 2.5-2.5 0.7-2 0.1-4 1.3-2 2.6-2 1.7-3 0.5-7 1.3-3-0.7-2.4-4.5-5.6-6.5-2.4-3 0.2-0.4 4.2-1.4 3-3.2 1.4-2.1-0.4-4.9-3-5 0.8-2.7-0.8-1-2 3.7-3-0.9-2-1.1-0.4-8 0.6-5 3.2-6-1.6-3 1.3-2 0.1-8-2.2-5 1.3-2-1-3.4-5.3-6.7-7-0.1-1 2.2-0.6 7 1.7 7-1.4 3-1.3 5 0.4 5.7-0.8 6.6-3 0.6-1-2.2-4 0.3-1.4 1-0.6 5.9 4 5.1 1.5 3 3.5 2 0.6 1.8-1.6 1-5 2.2-1.8 5-2.1 6 1.5 2.6-0.6 1.6-3 0.4-4 4.4-3.5 3.1-4.5 4.9-4.8 1-0.1 4 2.6 5 2 2-0.3 8-3.4 2.9 10 3.1 3.1 3 1.3 3 4.4 10-0.6 4-1.6 3-2.6 5-7 0.7-2-0.7-1.5-3.1-2.5-4.8-9-0.5-6-1.4-4 0.8-1.6 2-1.4 2.1-4 3.9-3.1 5.6-2.9 2.1-3-0.7-2.7-8-14.9-2.3-2.4-6.7-1.7-7 0.5-5.8 5.2-5.2 2.3-4-2-5-5.5-4-0.5-3 1-2 5.7-2 3.1-3 1.5-6-2.6-4 1.4-9 1.7-1.9-1.1-0.3-1 2.1-3-0.1-3-4.8-5.2-2-0.6-7 1-4-2.1-3.8-1.1-2.2-1.6-6-1.6-2-1.1-4.3-5.7-2.7-1.1-2.3 1.1-0.7 2.8-5 1.1-3 4.3-7 4.8-2.5 5-3.5 3.1-5 1-2.9-3.1-3.1-0.9-8 1.8-2 1.1-3.2 5-1.7 6-0.1 2 1.4 5-0.5 4-0.9 1.1-10 0.4-12-3.1-4 0.2-5-1.1-7 0.5-7-1.3-2-1.6-2.1-4.1-1.9-1.3-2-0.2-4 0.8-1.7 1.7-1.3 7 1 7-2.6 3-1.4 2.9-3 0.2-2-1-2.6-3.1-2.9-5-3.5-1.2-3 1.3-4.4 7.9-2.6 1-0.9-1-0-3-1.9-3 1.5-5-2.7-4.5-2.2-6.5 0.4-7-4.2-5.5-2 0.4-2 2.4-2-0-1-1.3 1.8-6 3-2 1.4-2 1.9-8-0.3-10 1.2-3 6-5.8 5-1.4 4-3.1 2-0.2 3 0.9 1-0.5 3-4.8 4.4-3.1 0.1-3-3-4-2.5-17-1.5-2-3.5-1.7-8-0.1-2-4.7-2-1.4-7 1.3-5 2.9-6 0.7-3-1-1.7-2-1.7-4-2.6-1.5-5-1.2-1-1.1-1-5.2 1-5-2-2.8-5-3.1-7-1.3-11-5.2-7-6.9-5-2-2-1.6-4-7.7-7-1.5-5.9-7.9-3.7-2-2.8-4 3.4-2.3 2.8-7.7 3.2-3.5 6.7-9.5 1-3 4.8-8 3.3-9 3.2-5.6 3.4-3.4 0.9-2-0.6-4-2.5-5 2.4-9-2.3-5-1.3-6.9-3.1-3.1-1.9-4.5-4.6-5.5-6.4-4-5-1.3-2.2-1.7-2.1-3 0.5-3 5.8-8 2-1.5 8 2.1 2.2 5.4 4.8 2.2 7 0.5 4-0.7 5 1 7-2.4 5 0.5 3.5 2.9 7.5 12.4 12 4.4 4 3.4 1.9 3.8 7.1 3.4 6 0.6 1.7 1-1.7 2.2-9-1.2-3 0.9-4 3.1-4-0.5-6 0.6-5.6 3.9-0.7 2 0.7 3-0.4 1.8-4.4 3.2-1.2 7-2 4-4.4 2.9-1.7 9.1-3.5 4-0 2 3.3 9 1.1 11 2.3 5 7 7 0.2 7 1.3 5 5 6.7 7 4.6 7 1.2 5-1.6 6 3.7 6 0.5 3-0.7 2.5 0.6 2.5 3.1 1-1.1-1.6-2-0.3-2 1.2-2 1.7-0.8 2 3.7 1 0.6 9 0.2 7 2.9 4 0 7-3 5-4.6 3-10 0.2-6-3.6-8 0.2-7 3.1-4 0.8-5-0.9-2-3.7-4-3.4-8-0.2-2 0.5-1.6 1-0.6 6 1.8 3-0.2 9.7 4.6 5.2 6 1.5 5 2.6 1.7 5 0.5 6-2.3 5 1.2 3-0.1 1 0.9 0.9 3.1-1.4 5-0 2 3.3 4 1.6 6-0.1 2-1.8 3-0 5 1.9 3 6.6 4.6 2.4 7.4 6.6 4.8 8 3.4 12 0.9 5.5-4.1 0.1-1-2.3-4 1.7-5.8 2-0.6 3 1.4 7-1.7 2 0.5 0.5 1.2-2.2 5-0.3 3 1 1.5 2 0.9 7 1.6 4-1.1 7-0.1 7-2.9 4 0.7 1 0.8 0.6 2.6-0.9 6 1.3 6-1.3 7 3.3 4.2 3 1 5-0.7 5 3.5 7 1.4 9 0.3 8 7.2 7 3.5 6 1.7 6.3 3.9 3.7 3.7 3 0.7 3-3.4 1 0.2 3.4 3.8 1.9 4 1.7-0.1 7-2.8 6-0.9 4-5.6 7-5.5 2-1 4 0 2.1-2.1-0.5-7-1.6-2.2-3.2-1.8-0.2-1 5.7-6-0.4-5 2.1-1.5 2-2.8 1.6-3.7-0-3-1.3-5-1.3-2.3-4-3.7-5-1.6-1.5-4.4-3.2-4-0.5-2 9-8 2.2-3.5 3-1.9 3-0.7 9 0.9 5 1.4 4.6-0.2 2.3-2 3.2-7 3.7-4 6.2-3.4 2 0.3 7.1 13.1 0.6 5 5.3 2.9 10.3 3.1 2.9 3 2 6 0.5 6 2.3 1.5 5 1.7 3.1 7.8 5.9 4.1 7 10.9-0.2 5 1.2 2.4 4-1.6 6 1.7 4.3-1.5 7.7-0.5 3-2 4.3-4.5 0.7-2-2.1-6-6.7-1-2.2-2.2-7-3.2-1-5.6-6.9-8-0.2-1 2.2-4-0.4-5 0.8-5 3.3-5 6.2-1.7 4-2.2 9 0.7 7-1 5.1 3.2 1.2 4 7.7 2.8 10-1 7 0.8 5-0.4 2.3-1.2 2.6-4 0.2-3-2.3-4-0.6-3-3.2-7.8-6-3.2-1.9-5-3.1-3-9.7-3-1.1-3-0.1-4-3.1-3.3-1.4-0.7-3.6 0.2-2-0.8-7.6-10.4-2.4-10.3-2-0.6-7 1.1-8-4.4-5 0.9-2.1-0.7-2-2-1.9-6-0.2-3-1.1-2-3.7-1.3-6 0.3-3.6-4-4.4-2.9-3.1-5.1-0-1 2.7-3 3.4-6 0.2-3-0.9-5 2.7-9.1 2-0.5 9 1.5 1.6-0.9-0.6-1.9-2.6-3.1-1.4-4.5-6-8.5-1.2-5 0.1-8 3.9-4-2.2-5 0.1-2 1.3-1.8 5-2 6-0.7 2.3 4.5 2.7 0.9 4 0 1.1 1.1-0 3 1.6 3-0.6 3-3.5 5-1.6 4.7-4.7 3.3 0.9 2 3.8 2 4 3.3 6 1.9 2-0.1 5-4 2-0.6 1.7 0.5 2.1 4 1.2 0.4 6-2.5 3 0.5 1.6 1.6 4.7 9 2.1 7 1.3 2 9.3 3.8 5 5.3 3 1.3 3 0.3 5-1.5 9 2.3 6-0.9 7.5 10.4 4.5 2.2 10 2.4 2 1.8 6 8.7 2 1.6 8-0.8 5-2.6 7-1.7 6 3 5-1.5 4 2.7 0.7 8.2-0.7 4.7-1.2 2.3-3.8 3-1.9 4 3.3 10 2.6 3.2 5 3.8 2 5.3 5.1 3.7 0.9 2-0.2 5 1.2 1.8 3 0.9 5-0.9 8-6.7 2 0.8 5 9.1-0.4 2-4.6 2.8-1.1 2.2-7.6 6-1.1 2 0.3 2 4.5 7.5 9 4 1 4.5 2.6 4-2 7-2 4 0.5 6-2.6 6-0.8 5-3.8 4-0.4 3 1.5 1.6 2-0.8 2 0.2 2.8 3 4.2 2.1 1.1 1.9-0.9 4 0.4 4-2.6 1.7-5 1-0.7 2.3 0.2 3 3.5 5 0.4 4 1.3 3-3.1 4 2.7 9 2.7 3.2 2.6 0.8 1.6-1 3.8-5 1.5-0 1.3 4-1 5 10.2 11.5 2-0.5 5.9-8 1.4-3 6.7-5 2-0.9 2 0.3 8 5.7 4-5.5 4.3-1.6 0.5-1-1.8-1.8-4.5-1.2 1-5-2.5-3.7-3-2.3-4.1-5-0.5-2 0.4-2 6.8-8 0.8-5 4.6-7.2 4.2-1.8 1.6-5 0.4-5 2.2-5 0.5-5 4.3-5 2.9-8 6.3-5 3.5-8 2.1-7.5 3.4-4.5 3-6-0.6-9-1.8-3.7-6-0.4-6 1.9-3-1.3-1.5-1.5-0.4-3 1.7-5-1.3-4-4.5-5.1-8-13.3-4-1.5-3 0.6-4.1 5.3-0.2 5-0.7 0.9-4 1.8-2-0.5-1-2.5-3-2.6-1-4.1 1.2-4 4.7-5 0.7-3-0.6-1.3-5.1-0.7-1.9-2.6-0.7-2.4 0.7-1.7 1-0.5 7 1.7 1.2-1.5 0.1-2-4.3-0.5-3.1-1.5-1.9-3.5-1.3-5.5-7.8-5-4.9-8.7-5 1.1-4-1.9-9-2.4-5-3.6-0.1-2.5 1.1-1 8-1.6 2.8-1.4 0.6-1 0.2-3 3-5 0.9-5-4.3-7-3.2-0.9-9-6.9-5-2.4-2 0.4-13 9.5-2.5 0.3-10.6-10-2.9-0.9-2 1.8-2-2.5-0.8-4.4-1.2-2-4-1.4-1.7-1.6-0-3 2.3-4 2.4-0.3 4 1.8 3-0.8 3.3-2.7 1.6-5 2.3-2-0.7-4 5.5-1.2 2.1-1.8 0.8-2-0.6-8-2.2-4 0.4-4-1.8-4 1.3-2 4-1.9 2.1-2.1 0.7-7-0.8-2.5-4.8-4.5-0.4-3-1.6-3 0.6-3 2.2-2 1.5-3-1.7-7 1.2-4-0.1-3-1.6-2-4.3-1.8-1.8-2.2-0.6-2 0.6-5-1.1-3-8.7-14-4.1-4-0.5-10-1-2-7.8-0.5-6 0.4-5 3.3-2.2 3.8 1.1 5 4.1 7.7 2.6 3.3 1.8 14 1.2 3-1.1 8-2.5 4.8-3.7 2.2 0.1 1 2.6 3 1.8 6-8.8 4-2-0-2 3.5-2 1.6-4 0.4-2 1.6-6 1.5-7 0.6-5 5.8-1.5 4-2 2-1.5 3.2-3.7 3.8-0.7 4-1.6 3.2-1.7-1.2-0.8-4-3.2-3-1.3-4-4.7-3-2.3-4.7-5-0.6-2-1-4.4-5.7-1.3-6-2-2-8.3-4.6-4-0.5-5 0.7-4-1.9-5-4-2-0.3-6 1-3-1.8-2.4-3.6-5.6-3-7.5-0-2.1 1-3.4 3.3-10 3.2-3-1.1-3.8-3.4-6.2-3.4-6-1.3-5 1.2-4 4.3-2 0.4-2.3-1.2-0.5-4-5.2-5-7-2.5-10.5-5.5-3.5-0.7-4-3.1-2.1 0.8-0.6 2 1.8 4-0.7 6 0.6 1.2 2.1 0.8 0.2 2-5.3 3.5-3 0.2-10-1.7-1.1-1 0.1-4-2-1.8-4 2.7-3.2-1.9-6.8-1.1-3 0.2-3 2.4-2-0.3-0-1.2 3.8-2 0.6-4 1.8-4-1.2-3.3-4-1.4-3 0.7-3 2-6-0.1-2.9 1.1-1.4 2-0.8 3 2.3 6-0.5 3-1.7 1-5 0.6-4 3-1-0.5-4.4-7.1 0.1-6 2.3-3.6 7-2.1 2.6-2.3 0.8-2-1.7-3-6.7-4.9-0.6-1.1-0.1-2 4-14-1.3-3.1-2-1.1-4 0.3-6-1.3-5-0.1-1.1-0.7-0.3-5 1.2-3-4.8-4.5-2-7.4-3-4.8-9-3.5-13 7.5-2 0.5-3-1.3-5-4.8-7-2-0.6-1.7 1.7-9-4-8-5.1-2.8-6 0.5-5-2.2-6 0.7-7 5-5 1.8-2.1 3-0.6 6 3.1 4 0.1 12 1.1 7-1.4 3-1.4 6-3.8 5.5-6-0-5-2.1-4 1-1.7 1.6-1.5 3-0.6 3 0.7 3-0.5 1-4 1-0.9 1 0.2 3 3.8 8 4.5 2.9 1 2.3 1 0.7 4 0.6 2.1 3.5-2.1 0.8-5.3-0.8-1 3-3.3 3-0 6-4.8 9 1 3 4.4 3.2 1.2 2.8-0.4 3-0.8 0.9-4 1.3-2 4.1-3 0.4-2 1.1-4 5.2-9 1.1-4.9 4.9-5.1 0.7-3.7-2.7-2.1-3-5.3-4-2.9-4.5-3-2.2-5 0.9-7 3.8-2-1.3-0.9-1.7-0.3-8-3.8-11-2-0.8-5-0-3-1.4-4.1 0.2-7.9-3.4-1.6-1.6-3-10-1.4-2-8-1.3-6 1.5-4.3-2.2-1.1-2 2-2 15.4-4.2 7-5.9 6 0.3 4.4 3.8 3.6 1.7 2 0.3 2-0.8 1.6-1.2 2.3-4 2.3-0 3.1-3 5.7-1.7 2.6-2.3 2.7-6-0.3-7.4 1-1.3 4-1.3 2.8-2-1.3-3-0.4-5 2.2-2 6.7-3.9 8-1.5 8 1.3 7.9-2.9-0.9-14-1-2-3.4-3-0.6-3.5-1.7-3.5 3.8-6-0-8-4.1-3.5-4-4.9-8-2.6 0.4-1 4.6-2.7 8-2.5 6-4.8 2.6-3 3-1 1.6-6 3.1-5-0.8-13-1.4-2-3.9-2-0.5-1 5.3-7.7 1.8-6.3 2.2-3.7 5 1.2 1.1-0.5 0.5-2-1.6-3-2-0.8-1.5 0.8-1.5 3-1-0.4-0.5-1.6 0.9-2-0.9-2-9.5-8.9-1.3-2.1 0.1-3-2.4-2-0.2-1 1.2-2 4.6-3.1 4-0.1 8.3-3.8 0.7-2-0.6-2-5.4-6 1.4-3 2.6-1.4 2.5-2.6 6.5-2.6 5-6.4 4.8-4 2.2-2.9 2-0.3 3 1.9 1.4-0.7-0.3-2-4.1-6.7-2-1.9-5-1.1-6 2.2-8 5-8 2.8-5 5.2-3 0.9-1.8 1.6-1.9 4-3.7 4-4 8-3.6 1.1-8.5 4.9-2.1 2-0.7 3-0.2 9 1.5 4-0.1 4 5.7 6 1.8 6-0.4 0.9-4 1.5-3 0.1-4-2.7-8-1.2-9 1.9-1.8 1.5-0.9 2 0.2 8-3.5 5-3 1.9-5-1.1-3 0.3-4.8 9.9 6.9 5 7 10 0.1 4-2.5 4-0.9 6 2.8 5 1.4 4.3 7 6.5 2 0.8 5 0.4 1.6 2-0.5 4 4.4 5-0 5 5.3 6 0.2 1.6-2 0.7-3-1.4-4 0.3-3-1.5-1 0.4-0.4 2.9-1.6 1-1.7-1-0-3-1.3-0.8-2 0.4-4 3.1-4.6 2.3-4.4 7.3-0.1 1.7 2.2 6-0.5 2-1.6 1.7-12-1.9-5 0.6-3.1 1.6-3.9 4.6-8 2.9-2.5-4.5-4.9-3-2-6-7.6-6.7-3-4.8-7-3-2.9-5.5-4.1-4-1.5-0-1.4 3-0.5 8-1.5 2-3.2 2-1.3 2-2.2 17 2.6 4.6 4 2.2 2 3.6 6 2.6 4.5 6 7.3 3 0.5 1-0.6 2-5.7 7-9 6-3 3.4-3 1.4-3 2.6-4 1.4-3 3.4-5.3 3.8-0.1 3-1 1-4.6 2.1-1-0.1-2-2-1.8-0-3.7 6-2 2-10 6-4.5 3.9-10 2.7-3 4.2-3.8 2.2-4.2 5.7-6 1.7-3.7 2.6-6.3 9.8-2 1.3-5 1.2-4 4.2-7 5.1-4 7.2-8 4.5-7 9.8-3 1.9-2 3.5-2 1.8-11 6.6-2-0.2-3-1.9-2 0.2-1.9 3-2.1 6.1-6 4.4-6 1.8-7-0.2-2.1 0.9-1.7 3-1.2 0.8-8 1-0.8 2.2 2.1 4-2 5-1.3 0.3-2-0.7-11-9.5-1-0.2-1.2 1.1-0.5 7-2.9 6 0.6 2.9 5.8 8.1 2 4 4.2 2.1 3 3.5 2.1 1.4 0.6 2-0.5 6 1.5 5-0.7 4 3 3 4-0.2 2 0.8 7.8 7.4-1 5 1.2 2.1 3 0.6 1.9-1.7-0.4-2-3-3 1.5-1.2 2.7 1.2 2.9 5 4.4 2 3 0.4 4-1.3 7-1 5.6 5.9 4.4 1.9 6-5 7-2.1 4.5 7.2 3.5 2.8 2.4 3.2 2.6 1 5-1.6 7.6-1.4 4.4-3.3 5 2 11-3.4 0.7 0.7-1.4 4-0 10-1.3 3.7-5 2.6-2.3 5.7-4.6 4-0.6 4-1.5 3.1-4 3.9-3.9 2-0.4 1 3.4 4 1.1 5-0 6 1.2 3 3.6 3 5.7 3 0.9 3 2.4 1 1 1.9-1.3 3.1 0.2 2 7.9 9 6.3 3 0.7 2-0.5 1-4 2-6.3-0.4-3-4.8-6.8-2.8-3.2-2.9-5-2-4.2-7.1-0-5 1.1-6-3.9-8-1.1-6-9.7-7-6.2-2.1-4 1.8-0.8 4.3-1.2 1.7-9 4.5-2.1 1.8-1.1 5 0.6 5-0.5 5-2.9 4.1-3.8 2.9-2.2 3.9-3 1.5-5 0.6-6 2.9-5.7 1.1-2 6-3.8 4-4.5 3.2-4 5.9-8 1.6-8-8.7 1.2-6-0.1-3-1.1-2.1-3-1.9-2 0.3-3.8 2.7-3.2 0.6-5-0.4-7-2.5-6-0.4-2 1.1-4.6 8.6-1.4 1.2-2 0.2-4-1.1-4 0.3-2-1.6-2-3.2-1-0.1-0.7 5.3-4.3 3.9-6 2.2-4 0.5-1.7 1.4 0.2 8-2.3 6 2.8 9.3 4 5.7-0 2-1.8 4 0.1 5 6.6 6 5.4 10 2.7 1.5 3 0.7 4-2.3 3.4 3.1 2.6 0.4 1.8-1.4-0.4-4 0.6-0.9 3 0.3 1.8 1.6 1.8 4 5.4 2.1 4-1.2 2 0.6 6 7.9 5 3.2 0.9 1.4-0.2 1-1.7 0.3-4-2.2-5-1-4-2.1-7 0.5-7 1.9-4 3.8-3.4 1.8-1.6 2.8-2.1 8.2-0.4 6 1.5 2.8 4.5 5.2 0.6 3-1.1 1.2-6 1.9-3 2.1-2.4 2.8-0.3 3 3.7 9-0.4 6 1.2 3 4.2 5.6 6.4 1.4 2.1 2 0.2 2-1.9 5 3.8 8 6.1 4 3 6 4.3 2 5 5.2 3 0.4 7-2.4 2.7 0.8 1.1 6 2.5 6-0.3 2.6 5 0.6 8.1 4.8 1.6 3 0.4 5-1.6 3 3.3 4 3.2 5.7 7 2.7 6-0.3 1 0.5 1.9 6.4 7.1 4 4 0.4 4-1.4 2 1 10.5 18 0.6 3 3.9 3.7 4.9 7.3 1.8 14 1.4 3-0.6 5 3.4 8 10 11 0.6 2 3.5 4.2 1.7 3.8 3.3 4 5 4.4 7.6 4.6 4.4 15.7 5 5.3 2.3 6-0 2-2.3 5 1 3.4 2 1.8 4 1.4 4.6 3.4 13.4 2.6 1.6 1.4 0.5 5 1.8 7 7.7 11 1.5 11 1.4 6 1.3 2 7.2 4.3 2.7 3.7 0.9 3 1.4 1.2 7 2.2 5-1.8 9 1.8 4.2 4.6 2 7 6.5 6 3.3 1.5 6 0.1 3 6.2 7 1.9 11 7 3.2 4.3 1.1 3-0.2 2-1.5 3-0 2 3.7 4 3.1 5 0.8 5 4.8 3 4 3.5 4-1.4 8.2 0.9 0.6 6 1 3 5.4 8-0 7 2.4 5 0.4 3.8 2 1.2 3-1.9 3-0.7 2 0.4 1 1 0.9 2.2-1.2 3 0.6 5 2.7 6.2 5 0.2 3.4 3.6 3.9 2 3.7 0.8 5 2.9 8-1.8 5-2.6 2.2 6.7 11.4 14 2.4 6.1 5 1.4 4 3.4 4-0.6 6 5.7 3 1.8 5 1.2 4 2.4 6 0.2 0.7 2.4-2.4 4 0.7 3 2 1.8 5 2 5-0.4 5 10.6-0.2 2-3.5 5-3.7 3 1.4 3-0 3 3.9 6 1.1 0.5 5.3-2.5 6.3-6 2.2-1 2.2-0.1 10 2.7 2.6-4.6 5.2-5 2.1-4 2.7-3 2.7-12-5.3-5.8-2-0.5-3 0.7-0.9-1.4 1.5-7 3.6-8-2-5-5.1-4-2.1-0.2-2 1-5-2.8-4-5.4-8-0.1-5-2-6 0.4-10-4.9-3 0.1-4.4-3.1-4.6-2-6-0.9-4 0.9-2-0.4-5.4-3.6-1.8-2-0.4-5-2.2-3 0.8-5-0.9-1-4.1-1-2.9-3-11.7-6-3.4-1.1-3 0.5-2.3 2.6-0.5 4-2.2 2.4-0.8-0.4-0.6-2 1-4-1.9-6-2.7-1.7-8-1.5-3-6.5-4-3.2-4-4.3-0.8-1.8 3.1-3 1.3-4-1.9-13 1.3-1.1 6 2.4 1.5-0.3 1.8-10 2.1-6-2.4-1.7-4-0.2-2-1-4.8-4.1-0.2-2.1-10-1.2-7 4-4.6-1.7-1.3-1 1.2-6-1.3-2.7-10-0.5-3.6-3.8-2.2-5-10.2-2-1.7-1-0.7-2 0.1-5-3.4-8-1.3-1.4-7.5-1.6-1.5-3.4-1-0.2-1.8 1.6 0.1 4-2.3 2-4-1.3-4-2.8-2.7-3.9-1.2-5-4.4-2-0.5-1 0.5-4-4.7-1.6-4-4.6-7-2.4-10.3-10.4-1.2-5-2-4 0.3-6-2-7-1-8-3.6-5-2.2-1.6-2-0.3-3 1.2-2-0-9-4.2-6-1.2-2-1.8-5.1-9.1-1.1-5-4.6-6-0.6-2 1.1-4-0.3-2-5.5-7-1-5 2-4 1.1-0.6 4 2.1 4 6 2-0 3-1.6 2 0.8 0.9 1.3-0.3 4 1.4 0.8 5-1.8 4 0.2 3-1 2.1 0.8 2.9 2.9 5 2.5 7 1.3 4-0.9 7-0 4-1.5 3.9 0.7 1 2-4.7 4-0.7 2 0.5 1.4 6.7 4.6 0.5 3 1.8 1.8 4 1.5 4 3.2 4 0.8 7 2.8 3.4 12.9 4.3 4 0.7 4 4.7 3 2.5 3 0.9 5 1.4 2-2.4 3-2 5-0.7 6 0.4 4-1.2 0.7-4-0.7-1.5 1-0.6 2 1.1 4-0 5.4 5 5.2 5 1.6 4.3 5.8 1.7 1 2-0.1 3.4-2.9 2.6-0.8 9 3 1.9 1.8 2.1 5.7 3 1.8 2-0.2 4-2.2 4 0.8 2-0.4 8-5 5-1.7 9 3.4 4.7 5.8 2.3 1.8 5 2.5 5 1.3-0 5 7.5 2.4 1.6 2 1.3 5 5.6 4.8 4.4 1.2 4.2 3 6.1 10 5.3 2.6 5 0.7 4 2.8 6 0.5 1.6 1.4 1.4 4 2.6 3 7.4 5.9 3 3.3 4 0.8 1.2 2-1.4 4 0.6 2 9.6 7.8 5 2 3.2 3.2 5.8 3.6 2.5 3.4 3.5 2.6 5.3 6.4 0.3 7 3.1 4 5.3 1.2 4 6.9 2 1.5 6 1.5 5 4.7 2 2.9 4-0.5 2 0.7 2.9 5.1 7.1 5.1 6 7.8 6.4 2.1 5.6 7.4 8 4.3 6 1.7 3 5.7 5.5 2.9 4.1 5 5.1 4 1.2 2 0.8 7-0.7 1.2-4 1.4-1.5 1.4-1 2 0.7 2-1.7 3 0.5 2 1 0.6 3-0 5-2 9 1.4 7-0.9 8 1.2 2-0.7 3.4-5.6-3.4-13-2-2.1-5-3.2-3.3-4.7-1.3-3-1-7-2.4-3-3-2.3-4-0.7-4.5-2-2.1-4-2.4-1.3-3.3-3.7-3.7-2.2-1.5-7.8-4.6-6-7.9-4-2.6-5-1.4-1.2-8-1.7-4 1.2-3-1.1-2.8-2.2-4.2-9.5-10-3.3-11-11.2-4.9-1-4.1-1.9-9.9-11.1-2-5-5.4-3-7-12-1.8-7-5.9-6.9-2-1-4 0.4-7-0.5-7-6.3-5-7.3-4-3.2-2-0.2-3 1.5-2-0.6-3-4.6-5.2-4.3-2.8-4.5-6-1.9-2-1.4-1.9-7.2-1.1-1.9-7-2.9-4-4.4-9.9-6.8-3.1-6.3-6-2.4-1.8-3.3-3.2-1.8-3-4.1-3-1.7-3-4.4-8.6-6-3.4-3.7-2-0.9-2 0.2-2 1.4-2.1 4-2.9 3.2-3 0.5-2-0.7-2-4 0.5-3 1.5-2.2 3-2.3 5 0.8 6-4.2 0.6-1.1-1.3-6 0.7-7-1.4-5 0.4-4.2-1-0.4-1 1.3-0.3 3.3-2.8 4-0.9 3.1-2 1.7-2-0.3-3.3-3.5-3.7-2.3-3.5-4.7-7.5-3.9-7-6.9-7.4-2.2 1.5-7-0.9-10-3.2-3.1-4 1.8-2-0-2-1-3.6-3.7-4.4-0-2.6-1 6.6-6.2 4.8-6.8-0.2-4-1.2-3-7.3-6 0.8-5 3.1-1.9 6-0.8 3.9-5.3 7.1-6.6 2 8.6 1.2 2 3.8 4 10 5.9 3-0.6 10-4.9 3.9-5.4-0-2-2.1-5-4.1-5-3.7-6.7-4-1.5-5-3.6-5.2-0.2 2-11 3.6-4 0.9-2 0.3-10 1.3-3 3.1-2.8 2-0.3 1.3 1.1 0.4 4 1.3 1.9 3 0.9 1.4-1.8-0.4-3-3.8-3-0.3-7-3.9-3.2-3-0.4-14 7.9-7-0.6-5 0.5-2 0.8-3 2.8-2 0.5-2-0.3-2.1-2-1.9-5-1.1-6-1.9-2.8-1-0.2-8 4.3-4.9 4.7-0.8 2 4.7 8 7.4 6 1.4 2-0.4 2-3.1 6-4.3 1.2-4 3.7-8-0.4-4 1.8-5.6 8.7-4.6 3-3.8 7.6-7 2.6-2 1.8-1.7 3-1.1 5-2.8 7-1.4 1.7-2 0.6-10-5.7-4.3-4.6-0.6-5-2-4-2.1-0.9-3 0.6-1.9-0.7-0.6-1-0-4-3.5-5.1-3-2.8-4-1.4-2.8-3.7-0.6-2 0.4-0.9 6-3.2 1.6-1.9 0.4-3-1-1.8-4-3.9-5-2.8-1.9 4.5-1.1 0.7-4 0.1-3-1.3-3.3-13.5-1.7-3.2-3-1-3-3.1-11-1.1-5-3.6-9-3.7-5-0.5-2-0.9-1.7-2.9-0.3-10.3-3.6-2.7-5.7-6-3.7-2-0.9-1-0.7-4-4.4-4.5-8-5.8-5-5.2-5.1-2.5-2.9-4.2-2-1.1-7 0.6-6-1.1-2 0.5-5 3.3-9-0.3-2.2-0.7 2.8-7 4.4-2.8 5 0.4 1.7-3.6-0.3-2-1.5-2 2-5-1.9-6 2.2-7-3.6-10-0.3-2 0.7-0.9 5 3.9 5 1.1 1.5 1.9 0.5 3.1 5 1.4 3 2.5 2.6 4 1.4 9 1 2.5 4 2.5 8.5 7 15.5 9.3 2-0 4-2.6 3-0.3 3-1.6 5.4 7.2 4.6 1.8 4 4.7 4.8 3.5 4.2 1.7 4.4 5.3 4.9 3 3.7 3.7 4 1 3 2.7 10 4.9 4.5-0.3 3.5-3.9 8-3.7 4 0.9 3 2.8 2 0.4 13-7.3 6 1.6 5-2.2 2.1-1.6 0.9-3-0.3-6-3.8-7 0.7-3 3.4-1.4 3-0 4 1.5 4 2.8 4-0.3 4.9-2.6 2.1-2.7 1.7-4.3 3.3-0.1 5-1.8 0.5 3.9-1.5 5 4 11 3.1 4 2.9 6.4 5 5.2 2 0.6 7-0.8 8.7-6.4 3.3-1.5 2-0 5 1.8 5 3.1 1.5 2.6 0.2 6 1.7 2 5.6 2 4 2.9 2-0.5 4-3.8 6 5.2 6.9 1.2-0.3 4 0.7 2-6.3 1.4-4.6 4.6-0.9 3 11.5 15 6.7 4 1.2 5 2.1 3.3 2 1.6 3.1 1.1 1.9 3.1 1.2-1.1-1.9-6 1.1-4-0.3-2-1.1-1-2 0.1-1.8-1.1 0.6-1 1.2-0.2 3 1.1 4-1.1 3 0.7 2 4.7 2.7 2.8-0.7 5 3.4 11 2.5 3 8.1 4.6 2.2-2.6 0.8-5.6 1-1.5 8 0.9 5-0.7 6 0.5 4-2.7 3 0.4 3 3 8-1.3 1.9 1 0.1 1-3 5.7-2.1 2.3-0 3-1.6 3 0.4 2 2.3 4 8 4.4 2 0.5 6-0.5 6 2.8 3 0.6-2 1.5-4-0-1.1 0.7-0.4 2 1 9 7.2 7 4.3 11 4 1.4 11-0.1 6 2.1 4-0.4 10-2.7 6 1.2 4.5-2.5 2.5-5.5 3-0.2 5 3.3 9 2.9 11.6 14.5 4.4 3.9 3.1 0.1 8.9-4 2-0 6 2.8 3 2.8 8 4.4 1.3 3-0.4 4 0.7 6-6.2 8 1.6 1.3 6-0.3 7 1.3 1.6 1.7 0.9 3 1.5 1.1 5-4.6 9-0.4 3.2-1.1 2.5-2 0.8-2-2.6-3-0.5-3 0.9-7 2.7-2.9 1.8 1.9 5.4 11 2.8 1.3 3.2-1.3 2.8 0.1 1.3 0.9 0.7 3.5 3 0.9 4-0.3 2-1 10-10.1 3-0.2 5-1.7 7.1-4.1 0.2-2-1.4-3-3.8-3-0.9-2 2.2-8 2.6-1.9 4 1.6 3-1.1 3.6-5.6-0.3-4 1.6-3 1.5-8 5.6-3.9 2-3.1-0.3-7 1.4-8-5.7-10-0.8-4 0.6-3-1.8-3 0.5-5-2.1-5-0.4-6-1.5-3-0.2-4 4.3 2.3 3-0 5-2.6 2-2 4.8-9.7-1.1-5-0.2-7 12.3-12 0.2-5 3.6-8 1.6-0 5.8 3.9 7.3 2.1 1.7 1.6 0.9 2.4 3 4-1.4 5 0.7 8-3.8 7 0.8 5-0.7 5 0.4 5 2.1 2.4 6.7 1.6 0.7 1-1.5 5-0.2 5-3.1 3 0.4 4-1.9 4 1.2 4-0.2 4-1 3 0.4 8 2.1 4-0 9 1 4 1.4 1.9 4 2.8 8 3.8 7 4.8 3 0.4 6-2.1 6.8 1.4-8.7 9-4.1 2.7-0.8 1.3 0.3 2 2.9 4-2.3 9-3.9 10 0.7 8 1.2 5-0.7 2-3.4 4.2-2 4.7-4 1.6-1.7 6.5 1.7 6.8 2.8 2.2 2.9 4 5.3 1.7 3 3.3 5.5 4 2.5 3.6 4 3.9 1.7 6.5 0.6 7-6.3 8-6.4 4-5.6 10.9-2 2.2-3.2 1.9-3.4 10 2.3 4-0.2 1-3.1 4-3.2 6-0.1 2 3.5 6-0.2 5 3.2 2 0.4 3.5 1 0.2 7-3.8 9-2 5-0 3-1.1 4 1.4 1.7-0.2 5.1-3 2.4-4 4.8-3.7 2.9 1.7 2.1-0.3 6.7-5.7 3.3-2.1 5-1.9 5-4.1 3.3 3.1 0.8 2-1.2 15 1.4 5-6.6 6-2.5 8-3.7 6-0.5 6-3.2 6-1.2 5 0.4 2 2.6 5-1.6 1.8-6 2.9-7 0.9-5 2.2-8-0.2-6 3.1-3 2.3-2.1 3-2.3 7 0.2 4 1.4 4 0.3 9 1 2 7.5 6 2 4 5 1.6 8-2.2 4 2.1 6.1 6.5 2.9 5.2 6 5 7-0.8 5-4.6 5-0.5 1.8-1.3-0-6-1.2-1-4.6-1.2-2.7-3.8 0.1-2 1-2 4.6-3.7 2-0.6 2.7 1.3 4.1 8 2.2 1.8 5 0.8 2-0.8 1.9-1.8 2.8-5 0.6-4-1.3-2.7-4.3-2.3 1.2-3 4.1-3.9 5.4-7.1 5.4-3 0.8-4 3.1-5 7.5-7 3.8-1.9 6 0.8 4-2.7 1-3.2-1.9-6 3.5-7 3.4-0.8 7 0.7 2-1.4-0.1-2.5-3.9-1.7-0.4-1.3 3-6 0.6-6-1.2-4 2-2.1 3.4 1.1 0.4 1-1.9 3 0.2 1 4.9 2.6 6 1.6 8 5.9 3-0 3-2.5 3-1.2 4 1.2 4.9 3.4 0.2 2-1.4 7-1.4 3-2.5 3-0 2 3.2 4 6 2.1 2-0.4 0.5-1.7-2.4-10 2.9-1.4 3-2.8 6.3-0.8 1.2-1 1.6-5 1.9-1.4 3.7-0.6 0.9-1-0.6-1.2-4-1.1-5-2.5-4 0.8-1-0.5 0.3-3.5-4.8-8 0.8-8-2.3-4-5-0.9-5-4.3-1.5 0.2-1.6 2-1.9 1-3-0.5-1-0.9-0-1.6 3.4-6-0.2-7 0.8-1.4 4-0.6 1-0.9-0.5-4.1 0.5-2 6-6.7 2-0.1 6 1.5 1.3-0.7 1.3-3 2.4-2.5 6-0.7 2.5 1.2 5.5 8 3-1.5 3-3.5 3-0.9 4 0.3 7 5.5 10-3.4 3.6 0.5 0.9 1-0.2 1-4.3 2.8-2.5 6.2 2 7 0.3 8-5.2 4-1.5 2 0.5 4-0.7 3 1.1 1.9 4 1.1 1.1 1 3.7 8-1 6 2.2 1.8 3.4-1.8 2.6-4.3 5-3.8 1.9-2.9-0.1-2-3.9-7 1.1-3 4-4.2 8.6-5.8 1.8-2 2.9-8-0.7-4 0.4-2.4 2-0.7 4 2 3-1.7 5-8.2-0.8-5 0.6-2 1.4-2 2.8-1.5M1189.2 213l2.1-2 0.2-5 2.3-6 3.8-2 0.7-1 0.6-4-1.1-4 0.2-2 7-0.1 2.6 5.1 2.4 1.9 18-2.6 7-3.3 5-6.5 7-1.2 2.6-4.3 6.4-7.8 2.3-4.2 1.7-8.4 2.4-0.6 2.4-2 0.3-1-0.8-1-2.3-1-3 2.6-1 0-4.5-4.6-4.1-11-5.8-10 0.3-2 3.1-2.8 2.8-4.2 1.1-6-0.9-2-4.3-4 0.3-6-2.9-4-0.6-2 1.2-4 3.2-4 1.7-4 1.4 0.1 2.1 5.9 1.9 2.4 2 0.9 5 0.1 3 1.4 5 0.8 3 2.6 7 2.4 2 3.8 2 1.9 5 1.7 5.6 3 7.4 1.4 5-3.2 4-0.5 1.9-2.7 0.3-5-3.8-10-4-4-1.5-5-7.1-8-1.6-6-3.2-3.5-1.1-3.5-3.3-6-1-5-1.6-1.1-9-1.3-7-7.9-2-0.5-4 1.1-1.1-0.3-1.3-3 1.3-6-6.9-14.4-6 0.3-4 1.6-7.7 10.5-13.3-4.3-13 4.4-1 1.9 1.8 6-0.7 7-3.1 4.6-3 2-3-0.5-7-5.1-9-10.6-2 0.5-1.9 3.1-2.1 1.8-11 4-5.3 5.2-2.7 4.8-3 0.4-2-0.2-6.3-4-0.7-1.2-0.1-3.8-1.9-2-3-0.8-3 3.3-2 0.3-1-0.7-3-9.1-2-2.1-9 1.2-4 3.9-2-0.4-3-1.8-2 0.2-1.7 3 0.7 1.6 7-0.3 2 2.4-0.3 13.3-3.7 7.6-6 3.9-5.5 6.5-2.6 6-1.9 0.9-2 0.1-3-2.4-2-0.4-1.9 0.8-0.9 3-1.2 0.5-5-2.3-6 1.5-7-0.3-7.3-6.4-2.6-4-4.1-4.1-12-2.3-2.6 0.4-2.7 7 0.2 8-2 5-3.9 2.3-3 4.3-0.3 1.4 2.6 4-0 2-4.3 4.3-2.8 5.7 0.3 3 3.5 2.8 5 2 5 6.3 3 0.9 6-0.1 3.1 1.1 3.9 3.7 3-0.3 3-1.5 8-2 4 2.1 4 0.2 4 1.4 2.2 2.4 1.8 5.5 5 1.5-6 1.7-1 5.4-6 3.9-2.9 4-0.2 3 0.9 4 2.5 5 0.3 4-1.6 3.5-4 2.9-3 3.6-1 3 1 2.1 2 1.2 6.3 1.7 4.7 3.2 10-1.9 4 1.7 1-1.3 0.5-3.7-0.4-1-2.1-1.4-2.9-4.6 2.9-0.8 5-4.1 5-5.7 2 0.1 5 2 1.2-4.5 1.8-1.8 2-0.1 2 1.9-0.1 1-2.5 3 0.6 3 4 1 2 3 5-0.6 2.5 0.6-0.5 4.3-3.8 3.7 7.8 3.2 4 0 1.7-1.2 0.6-3-1.4-5 2.1-2.3 7-1.3 4-1.5 7 0.8 5 1.8 1.1 2.5-0.3 5 3.5 4-2.4 9 0.5 3 1.6 1.4 5 2 5 8.7 3 0.4 4 2.9M198 37l-0.8-3 1.6-4 0.5-4 1.7-2.1 2-0.3 1.8 3.4-0.6 4M292 245.1l-3-0.4-14.4-7.7-5.6-0.8-3-2.5-4-1-4-2.8-3-0.2-6 1.8-2.8-0.5-6.2-4.7-2.8-5.3 0.2-5-3.9-3-5.5-0.1-4-1.4-4 0.3-3-2.9-6-0.5-6-4.1-8 1.9-5.6-1.2-3.2-3-3.2-7-2-1.1-3 1.3-1-0.3-5-8-5-2.2-5.5-6.7-0.1-2 1.3-1 6.3-0.5 7-4.1 8 0.7 2.4-1.1 6.1-9 3.9-13 0.2-5-1.7-6-0.2-8-5.2-7-0.7-8-0.8-2-3.5-5-4.4-4-3.1-8.6-3.3-5.4-0-1 3.7-7 0.1-6-2.7-10-3.8-4.5-3.3-5.5 0.4-2 1.6-2 10.3-4.9 1.4-4.1 1.1-1 2.5-0.3 6 1.2 1.1 3.1 0.5 9-2.6 7.9-4 6.3-4 2.4-1.2 2.4 0.9 6 4.6 2-1.9 12 0.9 2 1.7 1.5 6 2.4 7 0.6 5 2.9 3-0.4 6-2.8 7-6.7 5-3.4 5-1.5 7-4.2 4.7-1.4 1.1-1 0.5-2-0.6-4-3.7-2.3-1.1-1.7 1.5-2 2.6-0.5 1.7 1.5 0.7 4 3.8 7 4.8 0.1 7-1.9 3 2 5 0.5 4 2.3 4-0.8 6 2.8 3 4.7 3 2.6 3 8.7-1.1 6 0.8 2 7.3 4.5 4 6.2 5 5.4 5 1.8 4 5.6 2.1 6.5-4.1 1.5-1-0.1-3-2.7-6-2.3-11-0.5-2.9-1.9-3.1-3.2-2-0.5-6 5.5-4 1.9-5 0.9-8.7 3.4-2.3 2-1.3 3-4.5 4-0.9 9-0.9 2-5.7 5-1.3 2 0.1 1 4.3 6 5.2 2 5.3 6-1.1 6 0.7 6-0.4 4 0.5 2 1 0.6 6 1.1 5-2.9 2-0.3 10 4.7 5.7-4.2 2.3-3.1 4-1.4 2 0.6 0.2 2.9-5.5 14 3.3 2.2 1.2 1.8 0.7 3-0.8 6 3.4 11-2.5 3.5M1227 174.3l-6.6-0.3-3.4-4.8-6-1.8-8 1.5-1-0.4-3-4.1-5-1.3-4 0.7-5 5.4-3-0.6-1.8-2.6-0.7-5-5-6-1.5-3-0.1-4 0.8-3-0.7-1.3-5-1.1-3-1.7-6 1.7-5 0.3-0.9 1.1-0.7 3-1.4 0.8-6-0.5-6-6.9-3-7.9-7.9-6.5-6.1-8.5-3-0.6-3 1.7-4 0.9-5 7-1 0-2.8-5.5-5.7-3-2.3-3-8.1-4-2.9-4 0.8-1 7-0.4 4 1.2 1.3-0.8-0.5-4 1.9-3 12.3-0.5 2-0.7 5.9-4.8 2.9-4 1-6-1-3 0.6-1 4.6-0.9 5 0 4-3.1 2 0.3 5 2.7 4 0.9 5 3.9 3.5 5.2 11.5 3.2 4 4.3 4 1.3 8 6.1 3-0.1 5-4.7 4.5-8.1-0.5-5 0.9-7-4.9-5.3-1.3-3.7 10.3 5.3 6 0.2 4-0.7 3 0.9 3-0.6 2.3-5.1 3.7-4 1-3.1 3-3.9 3-2.1 2.5-2.9 0.4-2-1.1-5 10.2-0.3 5-3.8 1.8 8.1 2.2 3.6 3 1.7 6-0.5 5 0.4 1.7 1.8 1.4 3 4.9 4.4 6.4 11.6-0.4 1.2-6-0.7-5 0.9-3-0.3-1.4-2.1-0.1-6-4.5-6.1-2-0.9-6 0.5-7.3 4.5-6.7 8-4 1.5-3 2.3-3.5 7.2-2.5 3-1.1 3 0.5 3 1.3 3 4 5 1.1 4-3.3 6 0.3 3-1.4 7 0.9 9 4.2 7 2.1 2 3.4 10 4.3 7-0.9 8-6.4 2.9M163 52.1l-5 0.5-1.5-0.6-0.2-2 1.7-3 5 2.7 0.5 1.3M1107.2 61l-0.2-3.9-1-0.3-1.8 1.2-1.1 2 0.9 1.1 2 0.4M897 85l-10-0.1-4-1.8-2-2.1 4-1.1 5 0.2 5 1.7 4-0.5 1.7 1.7M768 142l11-4.1 14.3-2.9 4.4-4 2.3-6.3 7-2.1 5-0.3 5.6-3.3 1.4 0.4 0.6 1.6 0.3 4-1.9 5 1 2.2 2.9-0.2 4.1-3.7 2-0.8 2-0 3 1.6 1-0.3 4-4.1 4.2-2.7 1.3-2-0.2-1-1.3-0.6-5 1-6-0.2-1.5-1.2-1.8-4 0.2-3 1.9-3 0.2-6 5-12-7-2.8-3 0.7-6 12.3-7.3 3.8-12.7 12.4-6-1.8-6 2.4-12-0.3-5.1 2.3-2.2 5-5.9 6-2.7 7 1.1 3 1.8 2.1 3 0.5M884 107.7l-15-0.2-2.4-1.5-0.7-2 6.1-5.1 4 0 5 3.5 3 0.8 0.8 2.8M1066 105.1l-3 0.7-2-0.3-2.2-1.5-0.9-2 1.1-1.9 4 0.1 4 3.8M1118 159.1l-1-1 0-1.3 2-4.4 1-0.1 0.4 0.7-1 2 0.3 3M1049 353.5l-1 0.2-3-6.1-2-2.2-3-1.7-5-0.6 0-3.7-1.4-1.4-8.7-5-5.9-0.9-3.1 0.9-1.9-6-4.6-8-2.4-2.2-2-0.8-6 0.7-4.6 4.3-2.2 5 0 6-3.3 6-1.6 6-1.3 1.2-3-1.6-1.8-3.6-4.2-2.8-2-3.3-4-2.7-7 0.5-5 2.8-4.2-3.5-4.8-1.3-1.6-1.7-1.6-4-2.8-2.7-10-3-11-1.1-5 2.9-7-1.1-5-3.8-8-1.6-8 3.2-9-0.5-4.5-3.3-2.5-2.9-2-0.6-4 2.7-9 0.8-2 1.8-3 4.7-12-2.6-17 0.3-0.7-1.2-0.3-5.2-6.5-16.8-6.5-4.6-2-0.4-4 0.9-4-2.6-6-9.3-1.6-5-3-6 0.3-1 1.3-0.3 9.2 0.3 2 1 2.3 3 3.5 2.3 9-0.3 7-2.4 4-0.2 8.7 5.6 0.9 6 2.4 3.4 14 5.8 9 0 3 2.4 4 1.8 3 3.5 3.4 2.1 3.6 5.8 2 0.8 5-2.8 5-1.8 4-3.2 6-1.7 6 0.6 2-0.9 3.3-2.8 3.7-4.9 3.8-2.1 5.2-5.3 6-3.3 6.5-1.4 3.5-6.9 8 1.3 5 0 2-0.7 6.2-4.7 1-7 3.2-4 0.3-6-2.1-3 0.5-3 1.9-2.6 7-1.7 1.1-1.7 0.5-3-0.6-1.7-1.5-1.3-8.5-3 0-3 2.3-7-0.3-2-3-3.9-0.8-2.1 1.4-10-1.2-6 0.1-5-0.8-2-3.3-4-1.4-4-0.3-3 1.6-3 0.1-2-3.6-5-0.4-2 0.6-0.5 6.3 3.5-0.8 6 5.5 11 9 4.5 4 4.5 1.7 4 2.4 2 1.9 0.6 4.5-0.6 0 3-1.5 5 1.5 7 4.5 3.9 4 0 2 0.8 1.3 3.3 1.7 1.7 10 3.5 2.2 1.8 0.4 1-0.6 1.2-4 1.5-1.2 1.3-0.1 2 1.4 4 0.1 6 1.8 2.7 4 2.9 0.1 6.4 0.8 4 4.1 3.4 2 2.9 11 3.5 19 1.1 3.5-0.9 4.5-2.8 5-0.2 1.6 4 2.8 4 7.3 3 4.8 3 0.3 1-0.8 1.2 7-2 3 0.2 2 1.4 4 4.8 3 1.6 9-3.7 5.7-0.5 3-6 3.3-3 2-0.4 2 0.3 4 4 8 2.4 3 2.4 13-5.1 7.8 3.4 2.2 2.5 1 3.5-1.5 2-2.5 0.4-4-0.7-6 1.2-6 3.3-6 2.1-1.2-0.3-0.1-1 2.4-3-0.7-2-1.4 0.1-3 2.7-2 0.4-2.9-4.2-2.1-0.4-14.9 6.4 0 1-1.1 1.3-2 0.3-9 4.1-5 0.5-7 3.5-13 3.2-4 4.2-3.8 1.9-5.9 5-1.3 5-7.9 8-1.8 6-3.3 3-1.4 6M1447.1 209l6.9-4 1.4-4-1.4-3-5.7-6-2.6-10-5.7-3-4.1 0-4.9-5.8-9-3-9-1.1-4 0.5-4-0.5-5 2.9-2.9 11 0.2 4 0.7 2.1 9 13.3 9 3.8 10-0.8 17 4M95 189.3l-2-0.3-4.6-5-1.4-4.8 7 6.9M1080.7 204l7.3-3.4 1.5-2.6-0.7-2-2.8-1.4-5-1-10-0.1-1.1 0.5-0.9 1.1-0.3 2.9 1.3 3.4 6 3.1M349 208.2l-6.3-0.2-0.1-1 3.7-5-2.3-0.2-2.8-2.8-0.9-3 0.7-1.9 3.4 1.9 3.6 4.3 4.5 0.7 1.4 4-0.4 1M848 217.6l-5-2.6-0.1-1 1.1-1.1 3.2 0.1 1.6 2M1459.9 306l6.1-3.1 5-4.4 1 0.1 3 2.6 6 3.5 9-0.4 3.2-5.3 1-5 3.9-5 1.5-3-0-5 1-4-0.4-5 3.1-8-0.8-6 1.6-3 3.9-4-4.3-5-1.7-4-5-1.5-3.1-2.5-0.5-7-1.4-3.3-2-1.8-5-2.1-3-0.2-5 2.5-5 1.1-3.9 2.8-1.1 3-8.9 12-1.1 7-6 5.4-0.9 1.6 0.2 8-2.1 8-2.3 4-1.6 5-0.3 3.5 5.3 13.5 8.7 5.1M1332 297.5l-6-2.2-6 0.2-3.9-1.5-0.7-1 3.6-6.7 6-0.5 1.9-5.8 1.7-3 6.4-5.2 2.1-6.8-0.1-5 1-2 1-7 1 0 1.4 3-1.6 7-1.3 12 0.4 2 3.4 6-5.2 8-2.2 2-1 4M443 273l-2.5-2-4.8-9-3.5-3 0.8-6.7 1-0.9 2.3 0.6 3.1 4 4.6 16M1480 273.2l-1.7-0.2-1.7-2-2.6-0.6-0.7-3.4 0.7-3.4 3-3.4 1-2.9 1-0.8 1 0.5 3.6 9 0.1 4-3.7 1M1101 263.1l-5-1.9-3-0.1-1-1.1 0.2-1 5.8-0.4 3 0.5 1.5 1.9-0.5 1.5M194.6 677l1.5-2 2.1-5 2.8-2.5 4-1.1 3.5 2.6 2.5 0.2 2.4-4.2-0.2-3-3.8-6-0.7-3 0.2-5 2.3-7-1.4-10 3.1-6 0.7-3-1.6-1.5-9-3-3.5 2.5-1.5 0.2-5-5-0.7-3.2 5.8-3 3.3-6 2.6-2.2 1.8-2.8 10.2-1.7 4-3.7 7.6-1.6 3.3-2 0.1-1-2-0.5-1-1.5 1-0.3 2 0.9 5-1.7 2-1.2 3.1-3.7 0.8-2-0.3-2-5.5-9-0.1-4-4.4-4 4.3-4 2.4-5 7-3 2-3 2.7-1.5 9 2.5 5-2.2 4-0.4 2-1.5 3-4.9 3.8-1 1.3-1 0.1-5 3.2-9-2.2-8 0.1-5 0.9-2 2.2-2 2.3-5-4.6-5-1-4-1.6-3-1-4-3-5-0.2-2 7.6-13 2.3-5 0.2-2-2.4-4-4.4-3-3.8-9-3.8-4.1-5.9-3.9-0-1 3.6-4-0.5-2-2.2-0.5-7 5.2-2 0.3-4-2.1-2-2.7-0.3-2.2 1.2-5-0.9-1.9-1-0.5-2.1 0.4-4.9 4.5-2 0.7-2-0.6-4.9-3.6-0.7-3-3-5-1.3-9 3-7-2.9-5-2.2-1.1-3-0.1-3.2 1.2-3.8 3.2-1-0.1-4-3.6-5.7-2.5-3.3-7.7-2-2.4-11-4.2-1.9-1.7-0.6-2 2.8-6-0.7-4-6.6-10.7-7.7-4.3 0.3-13 0.8-4-0.6-1-5.8-3.6-4-5.4-0.8-2-0-3-3.1-7-3.1 0-1.2-1-0-10 1-10-0.6-3-3.2-2.1-5 0-6-4.9-6-0.5-6.5 1.5-2.3 2-1.8 11-1.4 2.4-6 2.6-5 0.1-2.9 1.9-1.3 2-0.5 2 0.3 4-2.6 4.1-2.4 6.9 1.1 13-1.1 5 1.1 4-2.3 4 1 5-5.4 6.5-4 1.6-2.3 3.9-0.5 5 4.1 4 0.3 6-4.3 6-1.6 5-7 8-5.2 13-0.5 5-2.5 5-7.5 9.1-1 2.9 0.1 3 2.7 8 8.5 7-0.8 4 0.9 4-0.7 4 1.9 6 1.4 0.3 2-0.7 1.9-1.6-0.3-4-2-5 0.4-2.4 1-1.1 1.6 0.5 3.4 3.5 9 0.1 2 0.7 3 2.2 2.4 3.5 4.7 11 0.6 3-1.7 2.8-8 4.1-4.1 5.1-0.4 2 0.4 2 5.1 6.7 7 5.9 3-1.5 2 0 2.8 3.9 1.2 0.6 2.1-0.6 2.9-3.7 5 0 4 2.6 5 1.5 3 3.7 0.5 1.9-2.9 5 2.8 8 1.1 14-1.2 4 0.3 2 3.7 4 5.2 11 6.6 4 4.2 6 0.5 4 6 7-0.8 4 0.7 4-0.7 0.8-5-0.5-1.5 1.7 0.5 4 1 1.8 2 0.3 2-1.1 4-5.3 9-0.8 6 3 5-0.2 5 3.8 2.6 0.5-0.5 2-4.1 1.2-2.4 1.8-2 9-1.6 1.1-2-0.4-3-3.3-2-1-4-0.5-5 0.6-9-3.8-6.4 2.3-1.5 7-4 7 1.1 4-0.5 7-1.7 3-3.9 3-2.2 8 0.6 3 4 4 1.8 4 3.7 1.2 5-1.2 3.2 1 2.2 4 3.2 4-0.6 1.7-3 1.7-2 0.1-5-2.6-3 1.2-0 1.9 7.1 9 3.9 2.2 9 1.4 16-2.6 2.3 1 2.7 3.4 1 0.3M1186 288.5l-4 0.4-1.6-0.9 0.6-3 3-3.1 3-1.1 0.6 1.2-0.4 5M1232 297.1l-7-0.9-4 0.9-2-0.4-1.4-1.7-0.7-5 3.1-2.3 2-0.3 2 0.7 4 4.3 4 0.8 0.9 1.8M1300 302l-4 0.8-0.8-0.8 0.1-1 4.1-4 1.6-2.9 2 0.2 2.4 2.7-2.4 3.2M1256 320.1l-1.2-0.1-2.8-2.3-6-7.9-9-6.5-1.5-4.3 1.5-0.8 3-0.1 5 3.6 9.8 12.3 1.3 4M1118 445.2l-1.2-0.2 1.5-5 0.5-6-2.9-4-0.6-2 4.2-6 0.4-2-1.1-2-1.8-1-8-1.5-4 1 2.5-10.5-1.9-6 1.2-5-0.7-2-5-7-0-8-3.5-5-0.6-3 1.4-4-1.5-8 0.3-4-3.3-3 1.7-5-0.3-4 0.7-2.4 2-2.1 3.1-0.5 0.3-1-2.5-8 0.1-2 5.3-3-0.3-3 0.6-1 4.4-1.5 2.7-2.5 3.3-1.3 2.9-3.7-1-5 1.1-1.9 2 1 1.2 1.9-0.2 1.7-1.7 2.3-0.3 4.9-7 5.9-4 1.9-1.3 1.3-0.9 4-2.2 3 0.4 4 0.8 1 4.2 1.1 3-1.5 5-0.1 5-1.7 4.9 1.2 3.7 9 1 9 1.4 2.6 3 2.2 7 0.1 1.7 1.1-0.5 3-4 6 2.1 5-0.4 2-1.9 3 0.8 2 4.3 4-4.4 5-0.8 7 1.4 4-2.3 2.7 0.1 2.3 1.9 0.8 4-2.6 2-0.5 1.5 1.3 0.5 3 1 1.5 5 1.9 1.8 6.6-0.1 4 1.1 3-1.8 7.5-1.1 1.5-3.9 2.5-5 0.2-3 1.8-2 0.1-5-5.3-2-1-3.2 2.7-4.8 2-2 2.6-3.3 2.4M818 381.2l-2 0.2-1-0.9-1.4-4.5-3.2-6-4.5-6-0.2-2 2.2-6-0.8-5-5.1-4.8-5-8.8-4-2.7-0.8-4.7-2.2-3.5-2-1.5-3.3-1-0.9-2 1.2-3.2 4-0.6 5-1.8 4 0.7 2.2 3.9-0.8 5 2.6 3.4 4 3.1 4 1.3 3 3.5 3-1.7 8.2 3.4 4 4-2.9 6-0.9 4 1.5 5 0.2 5 2 4-3.1 3.3-1 5.7M1323 324.5l-2.4-0.5-1.2-1-0.4-1.3 2-1.3 2 0.3 0.7 3.3M1211 330.2l-2 0-1-0.9 0-2.3 5-3.6 1 0.3 1 1.3-0.2 2-1.8 2.1M1058 467.1l-3 0.3-6.3-1.4-3.7-3.1-6 3.5-12-3.9-2.1-2.5 0.1-5-5-1.8-4.8-4.2-0.7-3 0.3-6-1.8-2.6-2-0.5-1.2-4.9-5.4-6 0-4-2.4-2.5-3-0.9-2.9-3.6-3.8-3-0.5-1 1.6-2-3.4-2.3-2-3.5-2-1.5-5-0.7-3-1.4-6-10-3-1.2-5-0.4-4-2.5-3 0.1-2.8 2.4-1 2 0.3 5-0.5 1.1-3-2.4-1-1.7-1-5-2.5-5-1.5-5-5.6-8-2.7-2-2.7-1.1-5 0.4-5-0.8-7 2.3-2.8 2.2-1.2 6-3 2.6-4.1-3.6-2.2-7-3.3-4-2.4-1.3-9-0.7-4 1.4-4-0.5-5 2.6-2 0.3-4-1-5-0.2-5-1.5-4 0.4-5.6-4.5-0.1-3 1.2-5-3.5-7.4-1-0.8-4-0.2-4-1.3-5-0.2 0-0.6 3.8-2.5 10.2-2.6 6 0.9 8.3-0.3 3.5-2 3.2-4.2 6.3 1.2 9.7 7.1 3 1.1 7 0.2 3-1.1 2-2.1 11.7-2.2 5.3 1.2 6-0.2 5-1.4 3 2.3 6.5 2.1 4.5 3.3 7 1.4 1 3.3 1 1 8 2.1 3 1.7 2-0 4-3.5 1-0.1 6 8.1 8 3.9 8-0.4 2-1 6.1-5.8 2.9-6.7 2-1.7 7 4.3 8 0.3 4.3 11.8 5.7 4.1 4 1.5 0.4 3.4 3.6 4.4 5.5 3.6 2.5 0.7 6-0.6 6-2.4 5-0.9 1.1-4.8 2.5-5 0.8-5 3.6-5.7 2.9-9.3 2.1-1.4 0.8 7.4 1.7 6 5 8-1.4 5 0.5 6-0.5 4 3 5-0.3 4 1.2 5 3.2 3-1 10 1.3 5-1.5 3-0.2 3 1 6 3.9 7 3.6 3 0.4 2-1 3-1.7 1.8-6.5 3.2-4.8 5-4.7 1.4-5-0.3-3.8 1.9-0.7 2 0.7 6-5.9 6M676 402.4l-1 0.5-1.3-0.9-3.7-0.4-6-4.3-5 0.6-7-0.8-3 0.5-7-2.1-5-2.6-2.1-2.9 1.1-2.1 6-2 2.2-3.9 0.4-2-2.6-4 1-2.8 2-0.2 3 1.8 4-1.3 1.5-1.5 1.1-3-1.4-5 0.4-2 2.4-1.1 4 1.3 3-0.7 2.3-2.5-0.3-4 5-4.3 2-0.7 2.4 1 3.6 3.8 3.9 7.2 5.1 3 3-0.2 3.4-4.8 4.6-2.4 4 0 1.7 2.4-1.7 4.1-2 1.5-4.6 1.4-1 3-1.6 2-0.2 1 0.8 1 4.6 1.6 1.7 2.4-5.7 3.6-2 5.4 0.3 3-2.8 5-1.5 1.6-5 2.8M1198.2 365l3.8-0.7 0.3-2.3-1.3-1.4-2 0.1-1.8 1.3-0.3 2M191 451.4l-7-4.7-10 0.1-0.7-1.8 0-9-11.3-6-5-0.2-5-2.6-16-3-8-0.4-3.8-3.8-4.2-2.1-1.6-1.9 0.1-1 3.7-4 1.2-5 1.9-4-1.5-12 4.2-7.6 2 0.3 5.7 4.3 2.2 9 6.1 3.9 4.6 9.1 7.7 4 2.8 6 6.9 1.3 6-0.5 5.7 5.2 0.8 2 0.1 4-0.6 1.4-2.9 2.6 1 1 5.9 1.6 3.5 3.4 0.5 4.5 4 0.8 1 1M920 476.3l-1-0.2-0.1-1.1 2.3-4 0.6-5-2.1-6-1-6 3.7-6-1.4-6.5-2-1.4-4-1.3-3 0.9-2-0.2-1.7-1.5-1.3-2.7-2-0.9-6 0.8-2 2.2-2 0.9-14 0.5-4 2.3-3-1.8-6-1.6-5-4.5-6-1.3-0.9-1.9 0.7-10-2.3-8-4.5-6-1-3.7-1-0.8-4 0.4-0.3-2.9-1.2-2 0.4-2 2.4-2 0.1-5 2.6-3.4 4 0 6 2.5 10-1 7 2.3 1.6-0.4 1.8-3 1.6-1.2 3-1.2 1.7 0.4 3.7 7 1 6 3.6 4.1 0.8 1.9-2.5 4-0.5 6 2.2 2.5 8 3.3 1-0.2 1.5-3.6 2.5-2.3 2-0.5 5 0.8 2-0.5 1.8-1.5 3.4-5 3.8-1.6 2 0.1 8 7 5-0 5 2.8 5 0.3 6 2.1 3-0.3 3-1.7 5-7.1 2.8 2.4 3.2 7 4.4 5-0 5 2.7 6 0.5 4 0.8 1 4.6 1.7 1.8 2.3 0.2 5.2-2.9 3.8-0.6 2-5.5 2.8-3 0.3-3-0.7-2 0.6-8 11.1-5 1.7-7 4.6-2 0.5-9-3.4-7.1 2.5-3.9 2.2-5-0.7M818 410.1l-10-0.1-1.7-1-3.7-4 2.4-1 2.2-2 2.1-8 3.7-3.9 1.3-0.1 1.4 2-0.1 6 3.4 9M213 399l-1.6-1-0.4-2 1-1.3 2-0.6 0.9 2.9-0.9 1.8M835 432.1l-8-5.1-0.9-4 0.9-1.7 6 0.3 2.4 1.4 1 2 0.2 4-0.4 2M238 428.1l-2-0.5-1-1.8 4-2.1 2 0.1 0.6 1.2-0.6 1.9M830 498.9l-2.6-1.9-1.4-5-2.7-3-0.7-4-3.6-3-4-5.6-2-1.6-2-0.8-2 0.3-2.9-2.3-4.1-1.6-2 0.1-3 1.4-1-0.3-1.7-1.6-1.1-3-2.2-1.4-12 0.1-5 2.1-3.7-1.8 1.4-8 2.3-2.9 5-1.7 1.4-1.4-0.9-7-2.2-4 0.1-1 3.7-3 2.5-4 1.4-4 9-2.8 4 2.3 4 0.4 1.7 5.1 1.3 1.7 6.6 3.3 3.6 6 7.8 5 1.1 3 0.7 9-2.8 4.6-0.2 2.4 3.2 5-0.5 10 2 6 3.3 5M992 483.2l-1.2-0.2-0.3-1 2.3-6-0.3-10-2.4-6-2.4-3-0.4-2 0.7-1 6 1.4 4.2 9.6-0 5-3.3 3 0.1 2 2 1 3-1 1 0.3 3.2 2.7 1 2-1.2 2.5-7-1.3M1165 473.4l-4-0.4-2.6-2 0.2-2 2.6-6-0.2-7.2 1-0.5 2 1.7 1.8 6 2.8 4-0.4 2M1206 463l-3-0.4-2.8-2.6 1.8-0.8 3 0.5 2.3 2.3M204 468.2l-4 0.7-2-0.7-2.9-4.2 1.9-3.4 1-0.5 4 2 2 3.3M1175 475l-1 0.6-0.4-3.6-2.5-4 2.9-2.8 4-0.2 2-1 1.3 1-0.3 1-2 0.8-4 6-0.9 0.2 0.9 0.9M1048 477.1l-1 0.9-5.4-2 0-2 1.4-0.8 3 0.4 1.5 1.4M1384 482.4l-5.3-3.4 1.3-2.9 2 0 2 1.9 1.2 3M1071 480.5l-4 0.3-2.8-1.8-0.2-1 1-1.3 2-0.5 5 1.4 0.5 1.4M1058 491.2l-4.1-0.2-4.4-3-1.2-3 1.7-3.3 8-2.1 2 0.5 0.1 8.9M793 493.3l-4-0.8-5 1.4-2-1.9 4-1.3 3 1 3 0.1M184 524.1l-5 0.1-7-6.1-3.5-1.1-0.2-1 3.7-10.2 2-0.3 5 2.5 2.5 5 8.1 5-3.6 3M161 526.1l-4 0.3-0.7-1.4 0.7-2.1 5-3.7 4-0.2 1.7 1 0.2 2-3.9 3.1M709 706.1l-3-1.9-9-1.6-2-4.3-6.7-3.3-7.3-9.3-2-1.2-4.6-0.5-0.5-5-3.9-6-11.9-7-2.1-0.3-2 1.1-2.5 3.2-1.5 3.5-2.8-0.5-4.2-3.9-1.9-5.1 0.2-2 1.6-3-1.1-4 6.3-6-0.3-2-3.7-5 0.1-2 1.8-1.9 3-1.1 5-3.6 0.6-1.4-0.5-2-2.1-1.4-3 0.2-2.4 1.2-2.6 3-6 1.1-1-0.4-1.6-3.7-0.4-5.3-2-0.5-5 1.7-2-1.1-3.6-3.8-1-3 2.7-2 1-3-0.8-3-1.3-1.5-2 0.2-1.3 1.3-0.7 5.9-9-2.9-4 0.5-3.3-2.5-3.2-9-3.8-4-0.8-5-2.2-3 1.9-6 5.5-9 0.4-3-1.8-3 5.3 1 6-1.7 0.8-1.3 0.2-5.2 0.9-1.8 1.1-0.6 2 0.2 4 3.5 3 1.1 8-2.4 2.7-1.8 2.1-5 4.2-1.8 4-3.6 1.4-4.6 2.6-5-0.3-2-1.7-2 0.4-1 3.8-3 1.2-7 6.6-6.6 1.2 2.6 1.3 15 4.5 6.1 4 2.3 3 0.6 4-2.3 1.1 1.3 0.7 4 1.2 2 6 5.1 5 0.8 3-4.5 2 0.5 1.8 6.1 5.2 4.5 3 0.6 3.3 2.9 5.2 3 3.7 8-0.1 3 0.9 1.9 4.6 4.1 1.5-0 2.9-2.1 5.6 3.1 1.9 3 1.6 5 6.9 7.5 2.6 1.5 2.4 3.2 10 8 0.8 5.8-1 3 0.7 4-0.3 5 1.6 7-0.6 3 3.8 7-3.6 8 1.1 12-1.5 5-4 3.3-10 1.1-10.4 7.6-1.4 2-0.8 4 0.7 2 2.7 3-0.5 1-4.3-0-8 4.2M524 548.2l-2 0.2-1-1.4 0.1-1 2.4-3-0.2-3 5.7-4.2 3-0.1 0.8 1.3-0.3 2-2.7 3-1.8 3.9M751 577l-1.4-1-3.6-8-10-3.9-0.8-1.1-0.8-6-2.4-9-3.8-4-0.1-1 0.9-1.1 2-0.2 2 1.3 7 8.5 5 2.1 4.5 6.4 0.5 2-1.5 6 4.1 6-0.6 2.6M1534.3 651l4.7-2 3.7-5 5.2-15-0.6-2-1.9-2-8.4-3.7-5-4.3-2-3.3-1.5-3.7 3.2-6 0.5-3-1.2-2-5-2.7-1.1-1.3-1.2-4 1-3-0.3-4 0.7-1 1.9-0.2 4 1.9 5-2.2 5-4.6 4-1.2 1.9-2.7-0-3-5.1-8-2.8-2.1-3-1.1-6 0.2-4-3.1-7 0.5-7-3.3-5.3-5.1-9.7-3.5-2-1.3-2-0.2-4.1 3-0.2 1 2 2-0.4 2-2.3 1-3-0.3-2.8 4.3-2.2 0.9-2 3.1-3 1.6 0.1 2.4 3 4 0.6 2-2.9 7-2.6 4 0.4 5 4.4 2.2 6-0.1 5.7 1.9 0.5 1-1.2 1.5-0.4 2.5 0.8 4 5.6 4.3 5 1.8 1.7 1.9 1.3 7-1.5 4 1.2 4-3.1 3 2.4 5-0.5 8 1.7 3 2.8 1.9 8-0.6 4-1.1 4 0.6 2.1 1.2 4.9 7.6M536 567.9l-2-0.7-4.3-4.2-0.7-4 1-0.9 2.6 1.9 4.3 5 0 2M529 587.2l-2 0.6-0.9-0.8-0.4-9 1.3-1.2 9.9-0.8-0.9 5.2-2 1.9-2.4 0.9M3.4 668l6.6-4.2 4-6.8 8-9 3.4-6 0.4-2-0.5-1-3.3-2.5-1.5-2.5-0.1-2 0.7-1 4.9-1.2 5 1.3 5-2.1 5 2.1 2.8-0.1 7.2-4.1 5-1.4 3.5-3.5 1.7-3-0.2-2.5-2-2.8-5.7-2.7-3.3-4.1-5-4-1 0.2-4 4.1-3 0.2-4 1.3-2-0.3-2-5.9-1.8-2.5-1.2-4.8-4-1.1-5-3.4-4 0.3-3.5-3-0.3-2 0.8-1.4 1-0.3 4 0.9 2-1.1 6.1 0.9 0.7-1-0.7-1-2.1-1.1-2 0.2-2 1.7-3-2.3-5-0.2-8.3 2.7-8.7 4.7-2 0.1-4-1.6-2.9 0.8-2.4 4-1.2 10-3.6 9-0.2 3 1 3 2.3 3 4.7 4 5.3 10-0.2 10-2.8 2.8-5 1.9-1.4 1.3-1.5 7-3.1 4-0.3 2 0.8 2 1.5 1.3 5 0.2 6 1.6 6-0.1 5 0.8M918 693.1l-4-0.1-7.6-2-0.1-3 2-3 0.4-3-2.5-7-6.4-6 2.5-4 1.7-8 1-0.9 3-0.1 5-1.5 4-4.8 6-4.2 5-1 7 0.3 4-2.3 4-0.5 4 2.1 6 1.6 5 3.9 8 1.4 6-1.2 5-0.1 6 1.4 3-0.1 0.8 1-3.3 3-3.6 5-5.9 4.1-3 4.5-8-1.8-10 0.9-4.1 3.3-2.7 6-12.2 3.5-6 5.4-4 5.1M1197 672l1.3-2-0.9-2-4 0-0.6 1 0.3 2 1.9 1.2M349.3 1060l5.7-1.1 7-3.3 1.9-1.6 1.6-3 2-8 0.1-3-1.6-5.3-2.2-3.7-5.9-4-3-10-2.6-5 2.8-10-1.8-7-0.3-10.2-2-2.2-9.5-3.6-1.7-2 0.2-4.1-0.9-4.9 1-5 0.3-7-3-6 0.2-5-5.6-5.3-6-1-5-3.7-0.7-2 0.3-5-1.8-5-0.8-5.8-2-2.3-3-0-1.6-0.9 0.5-6-1.8-8-0.2-7-1.9-7 1-6-2-1.9-7-2.5-2.3-2.6 0.6-9-1.7-7 1.6-9-3.2-4 1.1-5-0.1-2.4-1.4-1.6-7.6-3.1-3.7-4.9-1.4-3-0.5-3 1.6-4.3 4.8-1.7 0.4-2-3.6-5-2.6-1.8-1.1-3.2-4.1-3-0.3-2 2.5-1.1 3 0.3 1.5 1.8 0.5 3.1 2 1.9 2-0.6 2.2-3.4-0.2-1.4-3.9-2.6-3.9-10-3.8-6 1.2-9 2.7-3 1.3-5 3.6-7 0.2-7-0.9-3 2.6-3 0.7-2-1.8-1.5-2-0.3-4 3.5-2 0.3-2.3-1-2-3-0.7-6 1-6 4-4.9 4-2.4 1.3-1.7-1.8-4-6.8-3-2.1-2 0-2 1.2-3-0.6-5 1.5-6-0.7-1.2-3.8-2.8-5.2-6.5-7-0.7-1 3.2-5 2.5-1-0.8-2-4.2-11-1.8-2 1.6-2.2 5.7-2.8 1.2-6-1.2-3-8-6 1.4-3 2.2-11 2.3-5 2.9-3 0.4-6 3.7-3 3.1-3 1.5-2 0.2-4-1.6-1 0.4-0.4 6.5-1.6 7 2 6-1 7 3.4 7 4.6 5 2.3 5-0.3 3-3 2.9-0.1 1.1 2.1 0.9 6-0.1 2.2 1.2 4.8 5 1.7 4 3.5 3 1.4 4 0.9 7 4 5 2.8 7 3.4 3 1.2 2 2.6 7 1.4 8 5.1 12 2.2 13 1.1 13 0.7 2.3 3.3 3.7-0.7 5 2.2 4-0.6 6 2.8 13-1.5 7-2.9 4 0 1 3.4 1.4 2.4 2.6 1.5 6 3.2 6-1.1 4.5-5.4 6.5 0.2 3 1.2 1.2 2 0.5 11-0.3 5 2.7 4 0.2 1.3 1.7 0.1 5-2 5 1.3 6 2.1 3 0.3 2-1.5 4 0.6 5-1.3 5-0.6 8-1.6 7-0.3 5 0.6 2.6 2 2.1 6 1.4 3 1.6 2.9 5.3 0.7 4-1.8 3-4.2 3-0.5 1 0.5 2 3.8 6 1 3 1.6 1.6 2 0.6 4-1.2 2 0.4 6 5.9 3-1.5 2 0.5 2.9 4.7-2.7 6 0.9 3 2.9 3.5 9 4.5 1.4 2 0.7 4 0.9 1 3 1.3 10 1.3 11 0.2 2 1.1 6 6.4M1479 782l4-2.6 5-1.9 4 1.2 5-2.8 5 0.8 2-0.5 8-6.2 0.8-3-2.9-11-4.9-4.1-3-4.5-4.5-4.4 0.5-1.3 5-1.3 2-1.4 0.5-1-1-3 0.4-2 3.2-2 0-1-1.8-3-0.7-12-4.1-7-0.6-3-2.9-3.5-8 1.5-11-4-4.5-5-0.7-3 0.1-5-0.9-1.1-2-0.2-4 1.3-2.2 3 5.1 6 0.5 2-2.4 7.2-1.6 1.8-3.6 2-1.2 2-1.1 11-2.5 4-0.6 7 2.4 5-0.1 3-4.7 7-3 3.2-2.5 1.8-4.5 1.5-1.4 1.5 1.1 3 1.3 1.4 7 0.8 3-0.6 3-5.9 2 0.1 0.8 2.2-0.3 3-1.5 1.1-3 0-0.7 0.9-0.7 5 0.3 2 2.9 4 2.2 5.3 2.3 1.7 7.7 0.3 5 3M571 707l-6 0.2-1.1-2.2 3.4-4 2.7-1 2 0.1 1.7 1.9 0.3 2-1 2.2M853 720.3l-3 0.6-3-1.4-4.7-8.5-0.3-2 2.1-4 0.4-3 2.5-2.6 2 0.3 2.6 3.3-0.6 7 3 4.6 0.7 2.4M792.3 709l0.7-3-2-1.1-2 0.8 0 2.3 2 1.3M244 787.5l-3-9.5-0.6-6-4.4-2.7-5-5-0.4-1.3 0.9-5-2.7-3-2-4-7.7-8-1.6-4-0.6-5-7.1-6-2.7-5-0.1-3 10 3.9 4 6.3 12.2 4.8 0.5 5-1.3 6 0.1 3 1.9 6 5.7 8 1.2 8 2.3 3 2.1 10M1474 724.1l-2 0-1.4-1.1-0.4-2 0.7-1 3.1 0 2 1-0.1 2M307.6 731l1.2-2-1.1-2-2.7-1.8-2 0.8-1.3 2 0.5 2 3.8 1.7M893 745.4l-3 0.5-5-3.3-3 2.4-2 0.2-1.4-1.2-0.7-4 4.4-5 5.7-3 6-5.4 3-0.7 3 2.2 0.4 2.9-3.2 6-1.2 5.6M931 754l-3 0.1-5.3-3.1 0-2 2.6-3 0.7-4 2-1.5 2.1 0.5 6.3 4-3.1 4M1289.3 749l1.7-2-0.1-1-1.9-0.7-2 1.2-0.8 1.5 0.8 1.5M321.4 765l2.9-6 0.2-2-1.4-2-4.1-0.5-6 3.4-3-0.4-1.2 0.5 0.3 3 6.9 4.3 3 0.7M913 765.3l-2-0.3-3.8-4 0.6-2 4.2-3.6 9-1.2 0.7 1.8-0.7 2-5 5.2M682 792.1l-3 0-6-2-3-3.6-3.3-2.5-0.9-3-3.5-3-2.5-5-0.3-2 0.6-2 1.9-0.5 4 2.5 4 1.2 7 3.5 4.2 4.3-0.2 4.6 2.6 4.4-0.2 2M1062.6 794l2.4-3.2 0.1-2.8-1.1-1.8-7-2.3-3.7 2.1-0.5 4 1.2 2.7 5 1.6M299.3 801l7.5-1 1.6-1 0.1-1-5.5-3.5-3-0.2-6.3 3.7-0.1 1 1.6 2M833 808.1l-1 0.7-0.7-0.8-0.2-4 0.8-2 4.1-3.2 3.4-0.8 0.2 5-0.5 1M962 809.1l-4 0.3-2.7-1.4 0.4-1 2.3-0.4 4 1.2M-40 985.4l7.1 1.6 0.9 1 1 4 2 1.8 2 0.6 4-3.3 7-3.1 2 0.9 2 2.1 5 0.1 12 3.4 4-1.4 3-3.9 2 0.4 0.9 2.4 0.1 5 4.2 5 0.2 7 0.6 1.3 3 2.3 0.9 2.4-1 2-4 2-4.5 4-1.5 3-0.1 2 1.2 2 2 0.8 8 0.3 7-1 5-1.6 8-0.3 5-3.3 1 0.1 2 1.9 2 0 2-1.8 0.7-5.1 1.3-0.8 5 3.8 5 1 5-0.7 4-2.3 1.4-3 4.6-4.2 1-0.1 3 2 3-0.7 1.7-2 3.3-6.4 3.8-2.6 1.7-2 2.6-6 2.8-11-3.7-7 0.5-6-0.5-3-1.2-1.9-4.2-3.1-2.2-3-1.2-4 0.3-5-2.4-7-5.3-10 1-4.6 8.2-8.4 3.5-8 0.2-2-0.9-0.9-5-1.9-0.5-1.2 0.8-2 3.7-4.4 0.5-3.6-1.5-2.4-5.5-4.6-3.9-9-4.6-2.2-2.1-1.8-1.6-5-1.7-2-5.6-2.3-2.1 0.3-3.9 2.5-2-0.2-6.1-3.3-4.9-4.2-5-2.3-3-0.3-7.7-6.2-5.1-2-0.8-2 0.6-4-6-6.4-2-0.3-3 1.2-9-5.1-7 1.5-7.6-7.9-7.4-2.3-5-4.2-4-1.2-1.3 0.7-0.5 2 2.2 5-0.3 5 1 5-0.6 8 0.7 12-1.3 4 0.2 2 3.4 5 3.5 0.7 1.7 1.3 0.9 2-0.3 1-3.3 4.3-2 1.1-1.2-1.4-0.4-7-1.4-0.5-2 0.6-9 6.5-7 3.3-3 5.5M1296.8 827l0.4-1-1.1-2-2.1-1.1-2.2 0.1-0.6 1 1.8 2.6 2 1M1050 850.6l-6-1.8-2-1.8-1-4 1.7-7 1.3-1.6 2 0.2 4 2.6 3-0.1 2.1 0.9-1.2 7M1511 947.1l-3-0.4-3.7-4.7 0.3-2 1.4-1.1 2-0.5 3 2.7 3-0.6 1 0.6 0.5 1.9-0.5 1.5M2.6 1009l1.6-3-0.3-2-4.9-1-3 0.6-0.4 1.4 1.4 2 4 2.4M870 1017.1l-4 0.8-6.7-2.9-1.6-10 0.3-1.3 10-0.8 1 0.5 3.1 9.6-0.1 2M1398 1048.6l-3.2-0.6-3.8-6-7-0.9-1.5-1.1-1.2-5-4.9-5-1-5 1.6-3.2 2-1 2.4 1.2 3.8 9-0.2 2-1.1 2 1.1 1.8 3 0.9 4-1.5 8 6.8 0 3M1383 1065.1l-3-1.2-3.5-3.9-0.2-2 2.4-5 5.3-5.5 5 1.9 3-0.3 0.7 0.9-0.7 1.3-5 1.2-2.8 2.5-0.5 3 1.8 5-1.5 1.9M1428.7 1167l9.3-1.8 4.6-4.2-0.1-3-3.8-7 4.3-8.7 2 0.2 6 3.2 4-4.4 5 2.1 2 0.1 7.6-8.5 0.6-2-0.6-7 1.4-2.5 1-0.3 3 1.2 2.6-0.4 1.1-1 0.7-5 2.6-1.8 5 0.6 2 2 4-1.7 5 3.6 2 0.1 6-7.2 4-2.6 2-5 3-3 2-4.8 3-1.2 4-0.5 3-3.5 4.6-2 4.7-6 0.8-4-0.1-4 2.8-8-0.8-8.5-3.1-5.5-1.9-0.8-3 2.1-5 1.3-9 7.2-6 1.5-1.6 1.7 0 1 4.4 4 0.2 2-1 1.2-2 1.2-7-1.6-3 0.6-3.6 2.6-3.1 5-1.3 0.8-9.3 1.2-2.6-5-5.1-2-2 0.6-5 4.3-11 1.3-4 2.4-9 0.7-4-0.8-5 2.1-2-2.1-3-0.5-1.6 4-6.1 4-1.7 3 2.6 4-0.2 10-3 3-5.2 10 0.6 2 3.3 2 0.5 2-1.2 1.5-4 1.3-1.7 1.2-3.1 11 7.5 10 3.3 9.5 4 2.1M1349 1074.4l-4 0.2-2.1-1.6-0.9-2 4.2-10 3.8-1.9 4 4.9 1.8 5 2.1 2-0.9 0.9-4 0.6M1003 1088l1.6-4-0.6-1.9-1 0.2-1 1.7M1307 1110l-6-1.9-1.6-3.1 0.6-0.6 2 0.1 7 2.5M1410 1130l-2.5-8-1.5-0.9-1 0.5-1 2.4 0.7 5 2.3 1.5M205.5-40l-1.5 2.5-1 0.4-10-0.1-7 3.4-3-0.1-4 1.2-4-0.4-9-3.4-4 0.6-3 1.4-3.7 3.5-4.9 7-8.2 6 0.1 3 4.7 6 1.7 4-1.7 5-3.1 6-2.9 2.6-9-6-3.7-3.6-0.8-6 3-12 0.1-3-0.9-2-4.1-4-0.9-7-2.1-5M-40 377.7l6.3 7.3 3.7 9 22 4.4 1 1.3 0.3 3.3 1.7 4.2 1 1.1 4-1 6-3.4 6.2-7.9 8-2 3.8-6.3 8-3.5 4-3.8 5-2.9 3.9-4.5 10.1-4.6 1-0 2.1 2.6 0.5 3-2.6 4.9-0.4 3.1 2.2 5 4 4-0.5 5-2.3 2.3-2 0.1-5-1.2-1.7 1.8-2.7 11 0.6 5-3.5 9-6.7 5.9-2-0-5-2.3-1.3 0.4-0.5 2 3.2 3 1.7 3-0.6 5 0.7 3 1.6 1 6.2 0.6 2.7 2.4 2 10 4.4 6 3.1 7-1.1 9 1.9 1.4 5-1.8 4 0.9 1.5 1.5 3.5 6.8 4 2.3 4 7.4 3 1.3 5 0 4.2 2.2 1.4 3 4.4 5.7 3 2.3 4.5 7 0.8 3 3.6 6 1.4 6 0.3 5 3.4 4 6 0.4 3 2.4 2 6.9 5 2.1 3 2.3 2.1 3.9 1.5 8 2.8 3-1.4 12.9-3 2.1-5 1.2-3 2.6-1 7.6-1 0.9-2.2-2.3-1.8-0.7-6 1.2-1.2 1.5 0.8 4 2.8 5 0.4 5 3.4 8-1.6 5-0.6 5 4 7-0.3 13 0.8 2 3.5 4.2 1.9 4.8 5.1 2.1 1 1.1 1.1 3.8-1 7 4.6 8 2.3 2.4 8 2.1 3.2 1.5 1.8 3-1.3 4 0.2 2 6.2 5 2 4-0.1 2.6-4.8 6.4-5.2 5.6-5.1 3.4 1 4-1.9 2.9-0.7 4.1 0.6 5 1.8 4 2.4 3 4.9 2.8 4 5.6 2 1.6 8 1.8 5-0.9 8 2.3 2 1.4 2.8 3.4 5.4 3 3.8 6.3 2.4 2.7 0.5 10 0.8 2 9.3 7 2.2 3 2.6 14 3.3 12-2.8 14 3.1 11-0.2 7-6.2 10.6-0.5 2.4 2 6 0.2 7 4.1 9-0.2 2-2.6 4 0.5 1 3.5 1.5 4-0.9 1 0.7 0.6 1.7-0 7 3.4 7.6-0 9.8 1.8 2.6 7.2 4.9 0.4 1.1-0.5 2-5.5 4-0.4 2 1 9-3.1 4-1.4 4-0 2 1.2 4 2.3 3 2 0.7 5-0.3 4.4 2.6 0.2 11 6.9 11 0.5 3-0.5 7 5.1 11-0.6 2.6-2 2.7-4 1-1.9 1.7-0.6 2 1.1 6-3.6 3.5-1.4 2.5-0.6 6.3 1.8 5.7 0.6 6 3.6 2.3 7 1.4 8-4.8 4-3.8 2-0.7 2.4 4.6 1.6 1.4 1-0 1.7-3.4-1.3-4 0.6-1.3 2-0.5 4.8 5.8 3.2 2.2 12 3.7 4 0.1 11 5.6 6-0.7 10 2 2.5 4.1 2.5 1.5 9 1 9 2.8 4-1 6-3 3 0 3 0.9 4-0.7 4-2.9 3.8-5.6 7.8-7 1.1-5-3.6-8-1.1-9-8.3-13 1-14-1.5-7 2.3-7 0.4-5-0.4-3-2.2-5 0.2-11-1.2-2-1.3-0.7-12-2.5-2.4-2.8 2.4-12-1-6.8 3-1 4.4-5.2 0.7-3-2.5-2-4.6-1.2-13-6.5-6-0.8-1-1.3-1-4.2-2.7-5-7.3-6-1.8-5-0.4-6-2.3-4 0.3-4-1.6-7 0.4-11-1.6-2-4.4-3-0.5-2 0.6-4-2.7-10 0.7-3 3.4-7-1.8-6 2.5-5 1.7-9 2.3-3 4.7-4 1-2 0.2-10 2-6 4.3-6.1 2-1.1 3 0 2.2-1.8 0.4-2-2.3-5 3.8-6 5.9-4.9 7 0 3.3-1.1 1.9-2 1.1-4-0.3-4-4.3-8 0.3-6-2.9-6-12.1-5.9-1 0.4-1.3 2.5-3.7 2.7-2-0.7-1.1-2 0.5-3 3.3-4 2.7-5-2-6-4.2-5 0.8-6 3.4-5-0.3-2-2.9-6 1.8-12.6 2-4 5.7-1.4 4.5-4 1.9-5-0.1-2.5-1-0.5-2 0.5-2 3.1-1.5-4.6-2.5-2.2-5 2.6-7-0.1-2.1 1.7-2.7 7-7.2 5.3-4-0.1-2-2.7-2-0.5-4 1.7-4 4.7-12 2.3-3-1.6-7-6.8-5-2.3-3-3.4-5-2.1-3-0.5-4 0.9-10 3.6-6.9-2.5-3.1-3-0.4-2 0.9-9 6.5-8-0.6-12 2.7-6-2-7 3.1-6-1.8-4 0.7-2 8.9-3.4 4-6.5 2-1.6 2-0.5 4 1.4 2-0.1 8.2-6.3 2.8-4 9-1.8 9-6.7 4-6.8 3-1.9 5.3-0.8 4.7-4.5 6-0.3 2 1.4 5 6 4 0.2 4 1.3 5 3.8 3-0.4 3.9-3.5 1.5-8 2.8-3 0.2-3-6.1-17-1.7-7-5.8-6-4.9-2-6.9-5.2-4.5-10.8-4.3-4-3-6-1.2-4.1-7-3.6-11.8-10.3-1.2-1.9-1.2-7.1 0.3-4-1.4-6 1.3-4.7 3.6-4.3 0.6-6-1.1-6-0.1-7-2.4-6-3.6-4-0.7-4-3.5-3-2.1-3-1.4-4-3.3-5-1.1-4-1.9-1-5-0.7-3-3.4-3.8-0.9-1-1 0.3-1 1.5-0.7 7.3-0.3 0.7-1-0.1-2-1.9-6.4-6-4.9-3-1.3-3 3.4-5 0.6-5 2.2-2-0.2-19.6-13.4-4.4-1.8-3-3.6-8-1.1-6.2-4.5-2.4-3-4.3-9-0.3-3-2.2-5-0.5-6-4.7-9-2.1-9-4.3-10-0.4-4-1.6-1.3-4-0.9-1.1-1.8-0.2-3 2.8-12 4.2-4 1.6-5 1.7-1.2 6 0.7 6 1.7 9-2.9 3.8 0.7 2.2 1.9 1.6 3.1 1.9 6 7.5 3.7 4 1 6-0.7 5 0.8 8-2.6 5-2.8 3-0.2 2.6 1.8 3.4 6 2 2.1 3 1.4 5-0.5 4 2.7 1.8 2.3 0.9 6 1 2 2.3 1.6 5 1.4 1.2 1 1.7 4-2.2 4-0.2 5 0.5 1.7 3 3.3 2.6-0 1.7-4 1.7-0.5 8 7.5 6 0.6 4-1.4 2 0.3 1.8 3.5 3.5 3 4.7 7.6 2 1.3 3 0.7 1.2-0.6 3.1-5 2.7-7.2 2.4-1.8 6.6-2.8 3.1-3.2 4.2-7 0.6-6 1.5-4 2.2-2 3.4 0.5 1-0.7 3.3-5.8 0.6-5 1.1-3 3-4.3 6 2.8 6 0.7 8 2.3 6.8 6.5 12.2 7 1.9 3 3.3 3 1.1 4 1.7 2.2 9 1.8 8 2.5 5-1.5 6-0.7 18-7.2 8-7.4 7-0.8 4-6.2 3-0.8 3-2.2 2 0.1 6 2.8 2 0.3 7-2.9 6-1 1.4-1 0.9-2-1.4-4-1-8 1.1-2.8 2.5-2.2 0.3-1-13.8-14.6-17.2-11.4-2.4-6 1.2-11-1.6-1.3-5 1.5-2-0.6-1.9-1.6-3.2-8-1.6-7-5.3-5-2-5.2-5-2.9-5.8-4.9-0.8-2 0.2-5-1.6-3-4-2.6-7-0.2-2-2.1-1.2-3.1 0.1-4 4.1-1.1 1.3-1.9-2.3-4.6-6-4.5-7-1.2-5-0.1-2-0.9-2.5-2.7-0.9-2-1-10 0.9-6 3.3-5 0-2-4.6-5-2.2-4-7.1-6-1.9-4.1-4-5.8-2.3-8.1-2.7-2.6-6-3.4-1.7-2-0.2-2 3.9-4.4 0-2.6-4-1-3-2.9-5 0.1-1.8-1.2-0.6-2 0.2-6-0.8-1.7-12 2.8-3.2-1.1-4.8-4.1-2-0.8-3 0.4-2 2.5-2 0.5-5-0.6-4-2.5-7 1.1-3.8-1.5-3.8-7-3.7-3 0.3-2.4 3-1.6-0.4-2-3.6-0.5-4-3.6-4 0.4-6-3.1-3-2.4-4-1.9-5-4.2-7-2.9-7-7.7-3-2.2-11.9-5.9-3.8-9-1.2-5-6.1-7.5-7.6-17.5-6.4-3.4-3-0.4-5 0.6-4.4-1.8-4.9-5-0.3-2 0.9-3-0.7-2M1563 893.3l-4 0.1-3.9 1.6-8.1 7.4-9 6.5-7 1.1-9 4-4-0.6-15 2.1-3.1-0.5-4.9-4.6-3 0.1-7.7 3.5-0.7 1-0.3 4-2.3 1.6-2-0.7-5-4.7-4-1.9-11 5.2-3 0.4-1.8-1.9 0.4-4-3.6-3.9-1 0.1-2.3 1.8-0.5 3 0.8 2.4 1.7 1.6 0.2 3 2.1 2 0.7 2-2.7 5.6-2 1.3-8-0.2-4.8-2.7-3.5-4-2.7-1.3-3-0.1-6 1.9-7-0.3-2 0.6-4.9 4.2 0.7 3-0.8 1.6-4 1.6-2-1.4-3 1.5-4 5.3-13 0.4-1.5 1-0.3 3 2.3 6-0.5 6-2.8 7 1.4 4-0.6 8.1-1-0.3-3-2.4-2-0.1-1 0.9-1.5 4.8-1.5 1.8-2 0.1-9-6.5-5-5.4-2-0.8-3.3 0.8-2.7-6.5-5-2.7-3 1.1-9.3 8.1-3.8 1-0.3-2 3.6-4 0.4-5 3.3-13-7.4-7-3.5-8.5-9-3.6-1.3-1.9 0.3-1.1 3-2.3 1.7-2.6 4.7-11-0.8-7 0.9-9-2.5-4-0.4-2 2.8-4 3.7-8 1.1-4 1.5-2 1.3-0.7 3.2 1.7 2.8-0.1 7-4.2 3.1-2.7 1.8-4-0.3-5 3.9-4 1-2-3.4-8-0.1-5-2.8-4-2.2-7.2-4.5-5.8-0-3-1.4-2 2.1-4-0.9-3-5.3-0.6-4-3.4-4.7 0-2.5 1-1.6 2-0 6-1.2 2-3 0.4-2.3-1.4 1.8-4-0.5-4-2-1.8 1.1-10.2 1.7-4 1-5-0.6-4 0.9-5 1.3-2 3.4-2 0.9-2-0.7-1.4-2-1.4-8-1.7-2.1-4.5-4.2-5 1.4-4 1.9-1.1 2 0.4 1.4 1.7 0.2 5 1.4 2.1 2 1 4-0.7 4 4.4 6 3.5 1-0.3 1-2.2 1-9.8-1-1.6-4-2.2-4.5-4.2-2-5-6-8-1-6 3-4-1.1-4 0.7-2 2.4-3-0.5-5.6-6-2.9-8 3.1-4 0-8-1.9-1.8-1.7-0.8-2 1.3-8-0.4-2-5.3-0.1-6-1.5-4 0.6-5-1.3-6-8.3-4-0.9-2-2.4-1.1-3.1-0.3-8-1.1-2-4.5-1.4-8 0.4-6-2.9-4.4-5.1-5.6-2.8-5.7 1.8-1.1 4-1.2 0.4-3-2.4-0-4-2-2.1-6 1.7-3 2.1-8-0.8-11 2.4-1.6 9.7 0.6 2.2 2 1.4 0.3 1.4-0.3 1.1-1-0.2-2-2.4-3.2 5.5-2 10-0.8 9 1 4.3 1 0.9 3 0.5 1 1 1.4 6.3-0.2 2-2.2 3-7 6.1-5 1.1-3 2.3-4-0.1-5-2-2 0.3-1 1-1 2.3-0.1 6-1.2 5 2.8 7 1.4 6-0.3 2-3.6 5-5.6 4-4.4 5 2.3 7 6.2 3 0.3 5 4.3 13 3.7 8-0.4 6 0.8 7-1.2 1.6-3.3 1.4-2.7 4.6-0.7 4.4 2.7 3.6 0.3 2.4-4.3 5-4 1.2-13-3.7-2 1.1-6 6.5-5 1.3-5.5-3.4-1.4-5 2.5-5 3.9-3 0.5-4 3.6-10 5.1-6-2-5 4.3-2.4 2.2-5.6-0.8-3-2.4-2.8-5-2.8-3-0.3-6 4-7 3.1-5 0.8-4.6-7-5.4-0.1-2.8-1.9-3.5-6-2.9-3-1.8-0.7-5-0.1-4-3.8-8-4.6-3.1 1.2-2.9 6-4 1.3-3-0.7-3.3-4.6-4.9-3-2.8-0.3-8 1.4-2 1.5-2.2 4.4-4.3 3-1.3 3-1.2 0.7-3-1.9-4-5.1-8.3-1.7-5.3-8-3.6-3 0.2-8-1.2-5 2.1-4 0.9-8 3.8-8 0.1-5-0.9-3-7.4-4-2.9-3 2.5-6-1.8-5 0.4-5 1.4-0.8 1.3 0.8-0.3 3 1.1 3 0.1 4 2.4 4 4.1 4 2.3 3.6 19 8.5 2-0.6 3-2.3 3.7-5.2 0.7-3-1.5-4 0.3-2 2.8-1 5 0.5 1.4-0.5 3.6-9 5-5.8 1.8-3.2 0.4-4-1-6-5.2-5.9-0.1-2.1 3.3-8 3.8-0.4 4-1.6 2.7-4 0.4-7-1.7-4-0-4 1-2 3.3-3-1.9-3-7.8-6-0-2 2-3.9-0.2-3.1-5.8-7.1-4-1.7-7 0.7-3 2.9-1-0.2-2.1-2.6-0.9-3.1-1-1.1-2-0.4-9 2.9-3 3.8-12 2-6 3.1-7-0.5-6-5.6-2-1-1 0.1-2 3.7-1.3 0.1-1.9-1-1.1-4-5.7 0-2-1-8-12.8-3-3-8-4.8-10-2.2-4 1.4-3 2.5-4.3 1.9-2.7 4.4-7-2.8-4 0.8-3-0.7-2 0.8-5-0.1-6 1.6-10 8.5-3 0.1-4-1.9-2 0.7-1.7 2.6-3.2 10 0.1 2 2.1 2-0.1 4-0.9 2-2.3 0.8-7-1.6-2 0.8 0.5 1 3.5 1.7 2.2 4.3-0.3 1-1.9 1-4 0.3-4-2.6-3 0.2-4-1-9 1.6-15-2.3-9 1.7-3.7-1.9-0.9-2-0-11-2.3-5 0.1-2 2.7-3 4.4-11 5.7-2.4 5.3-4.6 3.4-9 8-13-1.1-3-3.6-3.1-2.8-8.9 2.2-9-3.2-3-2.2-4.3-4.7-2.7 0.1-3 1.5-2 5.1-2.2 4.2-4.8 5.8-0.2 1.4-0.8 3.7-7 3.9-9.9 2.4-3.1-0.1-5 1.1-5 3.3-7-0.7-1.7-3.7-1.3 2.7-1.1 2-4.9 5 2.4 5-1.2 5 0.9 5-0.1 2.8 8-0.6 4 1.7 10 2.6 6 0.3 8 2.2 3.4 3 2 3 4.5 3.3 2.1 2.9 3 22.8 7.4 9 2.2 6-0.6 1.7-1 0.6-2-0.6-4 1.6-2 1.1 1 1.6 5.2 4 3 2 2.7 3 0.3 2.6-2.2 5.4-2.7 2-0.2 3.8 3.9 1 6 1.7 4 4.4 4 7.1 1.1 6 2.9 4 3.5 8-1 4-2.3 5 0.8 3 1.3 2 1.5 3 4 6 2.2 5 3.1 6.4 6.9 4.6 6.6 2 1.1 4-1.7 7 0 6-2.9 7-0.6 14-2.6 7 1.6 3-2.7 3.2-5.8 1.8-1.1 6-1.1 2-4 4.3-3.8 2.8-4-1-3-6.9-8-0.8-3 0.6-2 2.9-3 1.2-3-2-5-0.1-7 4.7-3 2.4-3-0.2-2-3-6-0-4 2.1-2.4 11-3.8 1.9 0.2 2.1 2.2 6 1.8 2 1.6 0.7 11.4 4.3 8.3 4.4 2.7 0.6 4.5 5 1.3 3.9-9.8 2.1-1.1 4.5 0.1 7.5 9.8 6 4.2 3 3 1.8 11 4.2 3.7 8 2.7 5 4.1 3.1-0.5 1.8-2-0.6-2-3.1-2 0.8-0.9 10 0.3 4-2.4 2.6 1 3.4 3.5 5 1.2 2.7-0.7 4.4-4 3.2-7-3.2-11 0.1-2 1.6-4-0.5-2-2.3-2.9-8-0.1-4.4-2-3.1-4-6.3-6 0.3-4 2.5-2.2 4-0.8 9 1.6 3.6 3.4 6.4 4 2.2 3 1.2 4 1.6 1.1 8 0.4 4-3.9 4-1 6-3.5 5-0.6 8 0.9 6-5.5 1.5-2.9-0.1-3-4.8-16 1.4-1.7 7.4-3.3 1.4-2 0.2-2-1.2-4-2.8-2.4-2 0.2-5 2.7-4.4-1.5-0.2-1 3.5-4 0.4-3-8.3-4.3-8-3.1-4.2-3.6-1.2-3 2.7-6-0.6-2-1.7-2.1-2-1-9-0.8-6-2.3-6 1.4-4-2.6-1.5-2.6-1.7-15-10.8-2.3-4-3.8-9 2.4-2-0.9-1.4-5.4-0.1-5-5.9-8-0.7-2 6.1-7 3-1.6 5-1.5 3-2.3 4-1.7 2-1.9 1.5-4 5.5-1.9 5 1.3 0.5 1.6-1.8 4 0.1 1 9.2 6.7 2 0.8 6-0.3 3 0.5 5.8 4.3 9.2 4.2 3 2.1 5 1.1 2.7 2.6 2.6 1 1.4 3-0.6 5 1 2 5.9 4 8.1 1 2.9 2.5 3 5.5 2 1.7 10 3.9 6 1 3-0.9 2.5-4.7 2.5-1.3 4 0 2.9 2.3 1 4-0.9 3.9-2 2.4-4.4 1.7-1.2 3 0.6 3 2.4 4 6.6 4.9 2 0 5-2 2.9 1.1 5.8 8 6.5 12 1.6 5 0.7 8 3.7 7 0.7 3-1.3 2-3.6 2.3-1 1.4-2.1 7.3 0.1 2.7 1 3.3 1 0.6 6 0.6 1.7 2.8 0.6 3-1.3 2.2-5 1-3 1.5-1.9 3.3 0.9 1.6 5-2.2 1 0.2 5 3.6 0.9 1.8-0.7 3-1.6 2-3.6 2.6-2 0.5-4-0.9-2-1.2-2-4.5-3 0.3-1 0.7-1.2 7.5 0.6 4-1 5-1.4 3.5-2 2.5-1.4 6 4.8 5-0.2 3 0.8 2 2 1.7 3 0 2-1.6 0.8-2.1 0.4-6-1.2-2.3-5.5-4.7-0.4-1 0.6-1 4.3-3.2 5 2 5-0.1 6-3.3 0.6 0.6-4 7 2.1 6 5.3 5.9 2.1 5.1 0.2 5-4.1 3-1 3 0.5 3 3.3 4.2 1.2 2.8-0.9 6-3.3 5 4 9.7 3 0.5 5 2.8 3 0.4 1.6-1.4 0.1-4 1.2-3 2.1-2 2-0.6 2.8 1.6 0.5 3-4.3 3-1.1 2 0.2 1 4.9 0.1 5-2.5 8 3.3 11 0.3 6 2.1 2.5-0.3 3.1-2 1.4-1.5 1.5-4.5 8.5-5.7 7-3.5 5.1-7.8 1.9-6-0.3-4-0.9-2-3.2-3-2.6-5.2-1.3-4.8 3.2-6-0.8-5 0.4-3 2.5-2 3-1 7 4.9 7-0.9 1 0.9 1.3 6.1-2.3 3.7-2 1.5-5 0.2-3-1.3-2.5 2.9-0.9 3 3.4 6.8 4.7 4.2 4 8 5.9 7 0.6 5 1.8 5 8 2 2.3 2 0.7 4-1.7 5-0 4 2.2 5 2.1 11 1.4 1.7 8 0.7 3 0.9 6.7 6.7 2.3 3.3 2 1.5 3.1 0.2 3.9-2.3 6 4.7 3 0.9 4-0.4 2.3-0.9 4.7-3.5 2-0.4 4 0.6 2-1.4 3-0.6 3.6-2.7 2-4-0.7-9 5.1-4.4 2.6-5.6 1-4-0.2-6 1.2-5-0.6-2.3-3.4-4.7-5.1-4-10.7-15 4.2-7 6 0 5-1 1-0.8 2-8.7 2-1.6 2.9-0.9-0.4-1-2.5-1.7-4-5.3-1.9-7 2.6-5-4.1-3-0.6-4.1-1-1.8-2-0.7-2 0.6-3 3.8-3 0.7-2-2.5-2-0.8-6 0.4-4-1.3-5 1-11-4.1-9-1.8-2-1.1-3-3.2-2-0.7-2 0.7-4 3.2-4 0.7-9 4.6-5 0.3-6 8.4-2 0.2-3-1.1-4.5-5.4 0.2-1 3.3-2.2 3-3.8 0.3-4-0.9-7 3.7-7 0.6-10 5-9 1-4 4.5-9 1.7-16-3.9-6.9-5-2.4-1.9-1.7-0.7-3 0.7-6-2.1-4.6-8-5.6-6-2.1-3.4-3.7-1.7-4 0.1-10.6-6-10.1-6-4.1-7-0.4-1.9-0.8-4.3-7-0.8-3 0.5-5-1.5-6 2.8-8 0.5-7-1.6-3-2.7-1.7-8.8-0.3 4-11-1.5-6-0.9-9-1.5-3-2.3-2.4-5-2.3-5-1.1-4-3-3-0.7-9 0.5-4 1.1-5-0.7-2.4 1.6-2.6 6-3 2.5-10 0.9-2-1.4 1-1.1 6-2.5 1.3-1.4 1.2-5 2.8-4-0.5-4 1.2-6-1.7-5-0.3-5 2-2.5 5-2.7 4.6-4.8 1.2-6-1.3-6-0-7-4.5-4-0.5-4 0.8-4-5.1-10-0.2-2 2.2-8-0.2-2-1.2-2-3.8-1.8-1.1-1.2 0.1-12.3-7.3-8.7-1.5-5-4.2-5.3-2-4.7-8-6.7-4-2.5-4-1.4-15 5.3-8 0.4-7.1 1.9-0.8 2 0.6 4-1 4 2.9 5 2.5 17 7 8 0.3 4-0.9 7-6 12-5.5 3.1-15 4.4-4.2 5.5-6.2 5-0.6 5-2 2.2-2.6-1.2-4.4-5-2-1.2-5-1.2-3.5-3.6-4.5-9.9-3.5-5.1-0.3-3-5.2-5.5-5-1.9-3 4.4-7 1.5-10-5.1-4-6.6-3.9-3.8-3-9-3.8-3 1.5-10 2.2-1.7 5-1.3 2-1.3 6-7.5 3-0.9 11 0.9 8.1-3.2 1.9-3 5-5.4 6-0.8 4.3-1.8 6.7-9.2 2.6-5.8 0.4-4 0.9-2 5.1-2.6 3.7-5.4 0.9-3-0-3-1.2-4-2.4-4.7-1.2-5.3-4.8-4.2-3 0-3 1.7-1-0.5-0.2-5-5.8-5-0.3-1 2.7-6 2.9-4 2.7-9.1 3-0.6 5 2.2 13 4 2.2 2.5 1.3 4 8.5 3.9 4 0.3 7-2.4 5 0.8 3-2.4 2-4.5 3.4-2.7 2.8-7 7.5-6 2.8-4-0.7-2-3-2-1.8-0.4-4 0.8-2.1-1.4-4.7-8-5.2-15-1-1-5-1.6-3-3.5-2-5.6-3-3.3 1.9-3 3.1-1 0.9-1-1.6-2-7.3-4.9-15-4.5-8.2-6.6-3.4-9-0.3-9-2.8-4-5.3-2.8-5-0.6-5-3.3-4-0.1-2.8 1.8-1.4 4-1.8 1.6-1 0.2-4-2-3 0.2-0.9 2-0.1 3-1 1.3-6-0.9-8-3.4-4-0.6-2.3 2.6-2.7 6.5-5 3.4-6 7.5-3 0.2-5-4.4-3-0.9-6 0.5-5 4.1-2 0.6-6-2-5 0-1.3 0.5-0.3 1 1.2 4-0.2 2-1.4 2-2 0.7-1.9-0.7-2.1-2.1-4-1.4-2.9-2.5-0.5-2 2-3-3.1-3-2.5-0.3-7 2-4 0.1-4-1-4.4-3.8-3.6-0.2-4.2 2.2-3.8 4.6-4 2.4-3.2 3-7 4-0.8 7.2-1 0.9-4.2 0.9-2.2 2-1.7 5-0 5-0.9 2.3-1 0.8-2-1.5-2-0.4-4.7 2.8 0.7 1.8 3 1.4 1.4 1.8 0.3 3-1.7 1.4-4.6-0.4-6.4-3.1-3-2.2-3-5.1-7.9-2.6-3.1-2.9-7 1.1-7-0.4-3 0.8-3.7 2.4-1.9 3 0.8 6-0.5 2-1.7 1-3-0.3-0.9 1.3-0.1 12-3.9 7-2.1 15-1 1.4-3.8 1.6-0.7 1 2 3 1 4 4.5 9.4 5 4 5 1 2 1 7.3 6.6 1.7 3 2 1.6 5 1.8 5-3.6 10-0.3 6-5.1 2 0.4 1.3 1.2 1.2 4-0.7 2-7.7 5-3.4 6 0.3 2.1 3.4 3.9 0.7 2-1.7 7-2.9 4-1 8 0.3 2 2.9 4 0.6 2-0.2 6-1.1 1.4-4-0.3-4 0.9-5-3.1-8-0.9 0.7-7-4.7-2.6-5-1.4-1.1-2 0.4-4-0.5-2-6.8-4.8-2.1-4.2-2.9-2.4-7-0.5-8 3.1-8 4.4-4-1.1-2.4-2.5 0.8-5-0.4-2-2.6-5-2-8-2-3-3.4-1.9-8-0.6-2-0.8-5-4.8-5-2.4-10 5.1-11-0.5-2.3 0.9-0.8 4-5.9 10.7-4 4 2 5.3 1 8-4.3 10-0.1 8-1.5 3-1.1 0.7-6 1.1-2-0.6-2-1.7-1-2.5 2-2.7 5-1.3 0.9-2-2.8-3-2.1-13-4.2-8 0.2-1.2 3.8-4.8 0.4-5-1.2-2.2-3.9-0.8-0.2-8-3.9-7 1-3.6 1-1 2-0.3 4 1.3 3-1.9 3.8-4.5 2.7-6 3.5-2.3 1.9-2.7-1.9-5.1-4-0.1-0.8-5.8 2.8-3.9 1.2-3.1-0.4-8 7.2-6-0.7-6 0.4-9 2.3-2.2 2-4.8-0.7-2-1.3-1.2-7-2.2-3.7-4.6 6.7-2.3 0.8-1.7 0.2-9.1 5-6.1 5-1.7 3 1.5 1.2 1.4 3.6 9 8.5 5 0.4 1-0.5 5 2.2 4 4.9 3 3.7 3.4 2 0.5 4-1 3 0.6 1.4 2.5 5.6 5.5 6 0.2 1-0.6 1.4-2.1 1.6-6.3 2-0.9 7 0.5 1.7-3.3 6.2-7 2.9-6 1.4-17 6.8-12 3-3.8 4.1-2.2 1.3-2 1.5-15-0.9-5 0.3-3-0.8-2-1.5-0.8-1 0.5-2 4.9-3.1 0.4-2.9-1.2-7.2-5.8-4.8-1.5-5 2.1-8 1.9-7-0.3-5 4.3-1 0.1-1.7-4.6-1.3-7.1-7-4.1-2-0.2-3 1-7.6 8.4-4.4 0.4-4 1.4-5 0.2-5-0.9-3 0.9-5 0-9 4.7-4 3.3-14 8.1-8 1.2-2.9 2.7-1.7 5-3.5 5-1.2 7-1.7 2.5-4 2.5-11 3.7-1.3 2.3-2.7 12.2-14 7.2-6 2.1-1.8 2.5-1.3 4-1.9 1.9-3 1.5-1-0.2-6-5.9-4 0.5-3 3.2-2.5 9-1.5 2.6-2 1.7-4 0.2-5 3.4-7-1.4-4 0.9-0.9-0.4 0.3-3-0.6-1-3.8-2.5-2 0.3-4 3.4-1.3 1.8-2.2 8 1.5 1.2 4 1.1 6-2.9 3 0.4 1.8 5.2 4.9 7-3.7 11-6-0.8-5 0.6-6-2.3-6-0.6-3 0.6-2 1.5-3 4-4-0.2-0.3 3.2-2.3 3-5.4 2.5-4 3.1-6 0.8-4 4.9-1.6 4.7-3.4 3.1-3.8 4.9-1 5 2.3 6-0.3 3 1.4 4-1.6 2-3.5 2-0.2 3 1.7 3 5.1 5-0 6 5.3 10-0.4 3-3 6.1-0.4 3.9 5.8 14 4.3 6-0.9 3-4.8 1.9-0.9 1.1-0.7 7-4.4 1.3-10 5.7-5 0.5 1 4.9-2.4 1.6-1.1 3-3.5 5.3-9.8 6.7-6.2 1.6-1.7 2.4-1.3 4.9-2 1.6-4-0.9-2 0.4-2.7 2-1.6 3-1.7 1.5-9 0.4-9 4.7-6-1.4-3.8 6.8 2.3 6-0.7 4-1.9 4-0.5 4-2.4 2.2-9 1.7-9.9 7.1-1.5 2-0.1 6-3.4 4-3.1 0.5-6-3.8-3-0.1-9.4 5.4-0.8 2 1.1 5-9.9 6.9-4 0.1-4-3.3-10 0.8-8 6.1-4-1.4-2 0.1-6 3.2-1.3 1.5-2 6-3.4 6 1.4 18 6.6 6 7.3 23 3.4 4.4 2.7 5.6 3.5 4 2.6 7-1.6 4 0.7 3 4.3 6 4 4 3.6 6-0.2 4 1.2 7 1.2 1.2 8.5 2.8 2 2 1 3-0.3 6 1.7 5-1.9 7-1.3 1-5.1 1-0.8 2-0.1 4-1.7 2.1-10.5 4.9-0.7 1 0.9 4-0.7 1.6-2.4-1.6 1.4-4-1-2-4-1.9-4 0.4-2-0.6-3 0.7-6 4.1-9-0.6-8 3.4-13-0.3-5 1.1-5 0.1-4 1.4-7-2.4-9-0.4-3.5 1-1.3 2-1.8 9-0 7 1.4 5-1 5-5.8 12-2.1 3-3.9 9 0.3 3 3.4 10-0.9 8-0.8 1.4-5 1.3-2 2.3-3.3 2-0.7 1.7 0.2 3.3 1.8 1.3 3.1 0.7 1.8 2-0.2 1-1.7 0.6-5-0.7-4.8 2.1-2.2 0.3-3-1.1-9-5.6-7 0.8-7 4-7 2.3-5 2.8-3.3 4.5-1.3 10 1.9 8 2 3 5.7 2.3 5-0.4 2 1.1 9-1 4-1.7 2 0 7 4.7 10 3.3 3 3.6 3.2 2.1 2.8 3.6 7 1.8 5 7.4 3 2.4 5 2.4 1.9 5.4-0.3 2-3.1 4 1.5 4.6 2 1.4 7-0.6 2.4 2.6-0.3 8-4.2 4-0.9 3.5 1.9 2.5 8.4 4 0.6 6 3.8 6 1.7 9-1.4 4 0.5 2 3.5 0.8 3 2.2 1-0.2 0.7-2.8-0.7-1.2-3.2-0.8-0.4-1 0.6-2 11-3.8 2 0.3 2.8 1.5-0.7 2-4.8 5-1 3 0.3 2 2.4 4.5 1.8 6.5 3.5 5-1.6 1 0.2 1 2.1-1.5 8 9.7 8 2 2 1.5 5.7 0.3 5.3 3.1 5 4.8-0.1 3.1 4.1 1 1 4 2.8 2 6.2 0.9 4 2 6 1.6 6-0.5 3 1.7 4 0.2 11 5.4 2.2 5.7 3.1 4 1.5 5 3.9 3 1.1 2 0.1 2-2.4 7-0.5 8 1.2 6 3.8 8.2 2 2 5 1.3 2.3 1.5 2.3 5-0.6 8.1 5 6.3 2 1.2 6 0.1 7 4.2-0.2 6.1 3.2 10 2 3.4 5 3 1 1.5-0 2.2-2 3-4-1-2 0.9 0.1 3-1.7 4 1.6 3.8 3 1.6 5-0.3 5 3.5 6-0.2 6 1 12 4.3 1.3 4.3-1.6 8 2.4 6 1.7 2 4.2 2.8 3 9.2 5.9 7 3 5 2.1 1.7 12.7 4.3 3.3 3.7 4 2.5 8 0.4 2.1 11.4 1.9 4.4 7.5 2.6 4.5 7.1 5-1.8 1.7 1.7 1.3 3 5 3 0.4 1-0.7 3 1.3 7.7 2 0.9 3-0.4 2 1.3 5 7.3 1.5 5.2 1.5 2.1 4 1.3 5-0.6 2 1.1 2 6.2 11 8.9 1.7 5 2.3 3 8.2 7 2.6 7 8.2 4.6 2.6 8.4 4.4 6.1 7 4 6 1.7 4 4 2 0.9 5 0.3 4-0.9 10 1.7 0.7 4.2 2.7 5 3.6 3.8 5 7 6 3.2 7-0.1 1.3 2.1 0.7 3 1.8 2 7.2 0.6 5.8 3.4 5.2 7.3 0.5 2.7-7.5 5.9-0.6 5.1 1.1 3 4 4 2.9 10 2.6 4.3 2 1.7 11 1.5 3 1.2 2.4 2.3M-40 58.2l2 1.1 6.8 6.7 5.2 2.9 5.8 7.1 5.5 4 7.7 0.9 3 1.7 1.8 3.4 0.9 7 2.8 6 5.8 5 5.1 3 7.6 1.6 2 1 4.2 7.4-1 2-3.2 2.5-10 0.3-5.7 3.2-4.3 9-5.3 4-0.5 2 1 4-2.2 3.5-2 5.4-3.1 4.1 2.3 3 0.2 3-6.1 8-1.8 6-2.5 3.7 0 2.4-6 4.7-6.9 3.2-4.1 8.1-2 1.2-3 0M1208 111.9l-2-1.8-0.8-2.1 0.2-3-0.7-2-1.1-17 1.4-2.1 4-1.4 3-0.1 3.4 1.6 0.3 3-1.5 7-2.4 4-0.4 4-1.7 4-0.1 3M1207 152.2l-4-0.1-5.7-5.1-6.3-10-6 1.3-13-4.9-12 0.2-4 1.2-10-0.8-4.2-4-5.3-12-5.5-4.6-6.6-3.4-1.4-2 7-2.7 1.7-1.3 7.3-13.7 5 3.9 5 0.8 4 3.8 5 1.7 4.1 0.5 8.9 3.5 4 6.4 7 5.4 5 0.4 6-2.3 5-4 2 0.1 6.8 4.5 1.6 7-0.5 3-3.9 4.6-0.9 3.4 0.3 2 7.6 3.3 2.3 3.7 1.4 4 0.3 5-5-0.5M217 188.1l-9-2.1-3.6-2 5.6-11 8.1-2 1.3-1 0.7-2-1.1-5-0.2-5-3.8-8.7-3.5-5.3-0.5-5 1.7-6-2.7-3.2-3.1-5.8-0.1-3 1.2-4.5 1-0.7 5 0.9 2.7-0.7 4.2-4 9.1-4.4 3.3-5.6 9.1-5 3.6-4 2-1 3-0.1 7 2.8 5 0.2 8 3.4 2.4 2.7 1.9 7 7.9 8 1.2 2-3.4 2.3-6 0.9-14 4.3-3.6 3.5-2.6 6-1.8 1.4-4 0.6-1.3 1-5.7 9.3-3 2-5 1.5-1.8 1.2-2.9 7-3.8 5-1.8 8 2.1 9-0.5 4-3.3 2.3M1202 105.4l-3-0.2-0.8-1.2 0.4-2 2.4-0.5 2.3 1.5 0.1 1M818 173l-2-0.5-7.2-5.5-4.3-5-0.5-2 5-7.8 4-2.8 3.3-1.4 2.7-5.6 5-1 6 4.4 4 1.1 9-2.6 3 0 2 1 0.7 3.7-3.7 4.7-13.8 7.3-5.5 8M1224 161.1l-2 0-4-2.1-0.8-2 0.2-3 0.6-0.5 4-0.2 4 2 1.3 3.7M1448.8 219l4.2-5.4 8-7.1 1.9-4.5 1.7-7-1.6-4.9-5-5.1-5-7.6-7-6-2-0.4-4 0.7-0.6-0.7 0.2-2 2.8-3-0.3-2-4.8-4-2.3-0.7-2 0.7-3 3-1 0.3-3-1.6-7-0-3-1.3-3-2.7-3-0.8-12 5.2-3.6 3.9-1.4 3.8-2.2 3.2-0.8 10-2.7 7 0.5 8 4.2 6.9 6 4.1 4 4.8 4 1.8 4 0.4 3-0.8 6 1.7 3-2.3 2-0.4 4 1.3 4 2.6 5-0.5 10 1.9M756 166.5l-1.6-0.5-0.4-1 1.9-5 1.1-0.6 0.6 1.6M1146 234.1l-7-0.5-9-4.8-1.7-2.8-0.7-4 1.6-5-0.1-3-2.1-2.7-5-3.1-7 0-1.1 0.8-1.9 3.7-4.7-1.7-1-1-0.3-2.2-3-0.4-1.2 1.6-2.3 6-2.3 3-4.2 3.9-4 0.7-3-0.4-1.5-1.2-1.1-9 0.3-2 2.3-2 10-3.5 2 0 3 2 2 0.4 2-0.6 5-4 3 0.2 4-1 5 1.4 9-2.8 7-6.1 5 0.7 8-1.7 5 4.7 1.4 3.3 5.4 6 0.6 2-4.7 11 0.6 4 1.5 3-3.8 1.3-3 3.9-3-0M1448.5 332l11.5-4 4-4 6-3.8 2-5.7 6 0 3-1.1 5 0.5 11-2.8 9-0.9 1.6-3.2 0.1-7 5-4 0.8-2 0.5-8.5-1.7-2.5-0.4-2 2.3-7 0-9-1-7 2.2-6-3.4-11.7-1.1-1.3-4.9-2.6-3.3-3.4-1.9-3-2.5-7-5.3-6.8-4-1.4-7-0.1-8-5-3 0.6-1.8 2.7 0 2 1.9 3-0.1 1.4-7 5.7-6.7 2.9-5.3 6.5-3.9 6.5-5.2 4-4.9 2.1-1.2 1.9-0.9 4 2 6 0.1 3-3.3 10 3.8 11-1.8 4-0.4 3 2.3 5 0.3 5 1.1 4 0.5 7-1.1 4 3 6-0.5 3-1.9 2.7-0.5 2.3 1 2 1.5 0.8M1173 246.3l-6.8-3.3-1.5-2-1.1-4 0.9-3 5.7-6 0.5-4-0.4-5 0.7-0.5 6 0.7 9 3.6 3.9 5.2-5.1 6-5.8 2.3-4 8.3M888 275.3l-2 0.2-3-1.4-2.8-4.1-0.8-3-0.1-5-1.5-4 0.2-4-1-0.8-5-0.8-1-1-0.5-5.4 2.3-4 0.3-3-1.8-3-4.8-4-0.2-1 1.7-2 7-1.3 5 1.7 3-0.1 1.5-1.3 2.5-4.1 1-0.2 3.1 1.3 2.9 3-1 1.6-5 1.4-0.7 2 1.7 1.1 10 1.5 2.9 3.4 0.3 2-1.8 4-0.1 3 0.9 6 2.8 6-2 6-1.4 2-1.6 1.1-6 1.5M860 236.1l-1.5-1.1-1.6-4 1.1-1.8 2-0.7 4.8 2.5-0.1 1-3.7 3.9M1046 336.1l-1 0.4-3-0.8-14-9.2-6.7-2.5-1.3-6.6-2.8-5.4-2.2-1.7-4-1.4-12-0.4-5 2.3-7 10.2-2 9.7-2 1.7-3-1.7-6-5.6-6-0.1-9-1.9-9.8-8.1-10.2-2.7-8.5-5.3-4.5-1-5 1.1-3.5-1.1 2.4-7 4.1-4 6-2.7 17-10.9 11-0 6-0.8 8.9-5.6 2.1-4 12.2-13 0.7-6 3.1-12.5 0.1-9.5 0.9-1.5 2-0.4 2 1 3 4.4 3.2 1.5 1.4 2-1.7 8-3.9 6-0.2 3 0.8 2 2.8 3 1.8 4 3.8 2.1 10 10.3 3 1.8 4.2 0.8 3.3 2 2.2 6 1.1 1 16.2 4.2 2-1.2 1.1-2 1-7 1.4-2 2.5-1 5 0.9 5-1.8 3.4 1.9 13.9 14 3.7 1.5 5.9 0.5 1.3 1-4.2 2.1-5 0.5-6 3.6-4 0.9-5 4.7-5 1.9-7.7 8.3-2.4 7-5.6 7M-40 239.3l2.8 4.7 3.2 3.7 10 4.9 6 0.9 6 5.2 6 0.3 3.5-1 3.6-5 8.2-7 11.3-6 2.4-2.3 1.3 0.3-1.6 2-0.3 2 3.1 7-0.5 2.1-5 6.1-4 2.5-3.4 4.3-6.6 3.6-1.2 2.4-0.5 4-6.3 2-5 6-2 5 1.7 5-0.1 4-3.6 4-4.3 11-1.6 7-2.1 3.5-0.7 9.5-3.9 7-0.9 7-3.5 4.6-7 3.9-5 3.8M129 259.2l-5 0.4-3-0.9-3 0.2-1.2-1.9 0.9-5 5.3-4.6 4-1.4 6 1.9 3.2 4.1 0.9 3-3.1 2.6M867 263l-2-0.2-0.4-3.8 1.5-2 2.9-1.1 2.2 2.1 0.6 2M113 271.3l-2 0.3-0.4-0.6 0.3-5 4.1-4.3 2-0.9 1 0.3 1.5 1.9-2.2 5-1.8 2M67 347.3l-2 0.5-2.3-4.8 0.4-2 2.5-4 0.3-2-0.9-2.1-2.5-2.9-0.6-2 0.9-4 2.7-4 0.4-2-1.3-7 0.2-6-0.8-4 4.4-7 1-5 1.6-0.9 6 2.2 2-0.1 6-4.9 6-0.2 5-2 2.2-4.1-0.2-4.8 1-1 8 1.1 0.7 0.7-1.7 3-8.4 8-2.4 10-3.3 5-6.3 15-0.8 6-1.4 4-3.8 5-4 3-0.3 5-1.3 2.6M850 311.3l-6-1.5-8 0.6-4-1.4-0.8-2 0-5-2.8-6-3-3-2.4-4.1-6.7-4.9-0.4-2 3.1-0.6 4 1.9 8 7.7 5 2.6 8-0.5 8 4.3 10 0.9 3.6 2.7 0.4 1.5-10 4.2M910 361.1l-6-4.5-3.7-5.6 2.1-5 1.6-1.2 1.7 0.2 1.1 1 1.2 3.4 3-0.3 6 2.2 1.9-2.3 1.1-5.3 3-1.5 3 0.3 1.7 2.5 1.3 7.5-4 1-8-0.1-3.4 4.6M863 354.3l-2 0.6-2-1.5-0.9-2.4 0.9-3.3 11-2.9 2.2 0.2 1.9 4-1.1 1.7M1131 415.3l-6.5-2.3-2.6-2-5.3-13 0.9-6 2.6-3 0.2-2-3.3-4.1-4.8-2.9-0.9-2 1.2-6 2.5-2.3 1.9-3.7-0.1-3-1.4-5 2.6-5.7 1 0.1 1.8 2.6 1.6 6 3.6 7 1.7 12 0 6 1.3 5-0.3 2-2.5 4 0 1 4.8 11M1053 447l-6-1.4-4 0.6-2-1-3.1-3.2-5.1-8-10.4-8-0.8-2 0.2-7-0.8-1.2-2 0.6-3.9 3.6-2.1-0.8-0.6-1.2 1-7-0.1-4-1.3-2.8-2.1-2.2-5.9-3.4-10-3.8-5-3-3.6-0.8-3.5-7-7.9-6.1-11-0.6-6-2.3-1.4-2-0.6-6 2-1.9 3-1.3 6-0.3 5 5.3 3 1.7 4 0.4 6-1.3 6-0.4 3-1.8 5.3-5.4 3.7-2.5 3-6.1 1-0.1 7.4 2.7 2.2 7 5.3 8 1.6 4 2.1 9 2.4 5.8 1 1 3 0.1 3.5-2.9 3.5-0.7 2 0.1 5 2.3 7-1.1 2-1.2 1.9-3.4 1.5-1 7.6-2.9 3-0.1 1 0.7 2.7 10.3-2.1 4-0.7 3 1.2 5 0.8 10-4.1 8-2.8 8-0.4 4-0.7 1-7.9 3.9-0 1.8 1.5 3.3-1.4 3M1409 387.4l-1.5-1.4-0.8-3 2.3-3.2 4.5 2.2-0.2 1-2.9 2-0.6 2M754 389.3l-1 0.5-5-2.2-0.4-1.6 0.9-2 3.5-1.2 3.3 1.2 0.8 2M1037 398l1-0.7 0.4-2.3-1.4-2.9-2-1-2.9 0.9-0.6 2 0.5 1.2 2 1.7M747 417.8l-1-0.1-2.7-12.7 0.7-4 3-4.9 4 0.5 5-0.5 8 3 6-1.1 3.5 2 0.4 1-0.6 1-2.3 1.2-8-1.4-5.7 1.2-1.2 5-5.1 4.4M883 427l-7.3 0-3.7-2-6-1.1-1.2-0.9-0.1-3 2.3-3 0.6-2-2.4-11 4.8-5.8 3-0.3 5 1.4 4 5.5 0.3 7.2 1 4 4.6 7-0.9 2.8M1035.8 406l2.4-2 0.9-2-2.1-1.6-2 0.6-1 1.2 0.2 2.8 0.8 1M947 460.6l-6-0.4-4-2.8-2-2.9-2-1.5-0.2-5-2.5-5-8.3-9-4.7-3-1.8-2-0.4-2 5.9-4.7 1.8-6.3 2.2-3.1 1.5 0.1 1.4 1 2.1 3.7 4 2.7 3.8 4.6 5.2 3.7 5 1.2 6 6 4 0.1 5-5.4 6 1.4 2.1 3-0.1 3-2 5.2-4 3.1-1-0.3-2-3.9-2.2-0.1-0.9 2 0.6 4-1.1 2M813 464.5l-5-1.8-7-0.8-3-4.8-4-0.5-4.7-1.6 0.2-9 2-5 1.5-1.8 3-1.5 2.2 1.3 2.5 5 0.4 6 1.9 2.6 5-0.3 7.3 1.7 1.1 3M741 446.5l-1 0.3-1-0.8-0.1-3 1.1-1.8 2.4 2.8-0.4 1.9M761 516.3l-1 0.6-13.2-5.9-4.8-4.8-2-3.2-10-5.2-6.5-7.8-7.1-5 0-1 1.6-2.5 3-1.6 2-2.2 6.2-9.7 1.5-5 3.3-4.5 2-1.4 1 0 3.2 5.9 0.8 4.5 2.7 4.5 1.3 5.6 3.5 4.4 2.4 6 4.1 4.2 1.5 7.8 4.7 13M630 474.5l-3-0.3-2.7-2.2 0.7-3-1.1-4 0.3-2 2.8-1.7 6-1.7 5 0.4 1.4 1 1 2-0.7 3-2.7 3.3M1125 494.1l-1.1-3.1 2.1-3.3 1 0.4 0.2 1.9-1.1 3M1142 516.1l-2-1-0.9-2.1 0.9-1.2 2-0.8 1.4 1 0.5 2-0.9 1.8M780 535l-2 0.1-1.8-1.1-0.6-2 0.4-3.2 3 1.1 1 1.3 0.9 2.8M710 693l-1 0.8-3-0.1-1.6-1.7-0.4-2 1.1-8-1-2-3.1 0.6-5 4.4-2 0.7-1-0.5-4-4.5-1.8-3.7-3.2-3.2-3.7-5.8-2.2-15 2.4-6-1.2-3-4.3-2.2-3 3.5-5 2.3-4.1 3.4-1.9 0.8-1.4-0.8-0.4-2 0.6-2 2.8-3 2.4-4.4 2-0.7 5 1.5 1.1-0.4-7.1-4.9-0.1-5.1-0.9-3.5-5.4-4.5-2.4-4-0.5-5-5.7-4.8-1.6-5.2-5.4-3-2.6-8 2.6-6.1 4.5-2.9 0.1-3-1.9-3 0.8-2 2.5-2.3 8.8-3.7 2-3-0.8-1.5-4-0.1-1.6-1.4 0.1-11 0.5-1.6 1-0.7 2 0.3 2 2 2.3 5 0.8 3-1 5 1.9 0.3 8-2 1.2 0.7 2.3 5 3.4 3 4.1 0.3 9 3.6 5 0.6 3.5 1.5 0.6 1 0.2 6 6.2 6-0.1 4 1.1 5 4.5 7.6 4 2.6 7-0.6 4-2.8 2-0.6 7 2 2.2 1.8 1.8 9.1 3.2 3.9 1.5 5-1.2 6 1.5 3.4 0.3 3.6-3.5 9 1.2 15-7 3.3-5 0.7-8 8.1-5 2.5-1.9 5.4-5.3 3M-40 681.6l9.5 3.4 2.4 2 1.6 4 1.5 1.1 9-1.1 9 2.1 5-2.9 1.5 2.8 4.5 4.2 12 0 2.7-4.2 4-3 2.7-4-2.4-9 0.2-3 7.8-7.5 5-1.5 5.1-4 0.8-2-1.5-6 0.6-1.3 2-1.3 3 2.8 1 0.1 5-1.8 5-4 1.3-4.5 1.5-2 6.5-5 5-12 0-5 2.6-11-4.4-8-5.1-5-3.9-5-4-3-0.3-4-1.2-1.6-6.9-0.4-2.3-4-4.8-3.6-8 1.2-15-7.8-5 0.2-5 1.6-2-0.2-4.2-6.4-6.8-5.7-2-0.2-2 1-3.6 3.9-2.4 5-8 6.3-6-0.6-7-3-4 0.7M620 592l-2.4 0-1.1-2 2.5-6.3 1-1.1 2-0.2 3 1.5 0.6 2.1-0.9 2M352.9 625l2.8-3 0.2-4 0.9-2 4.3-5 0.7-3-1.8-1.9-10-0.6-4 1.2-1.2 1.3-0.2 3 0.6 2 4.6 5 0.1 5 1.1 1.5M352.5 661l8.3-9 0.2-3-2-3.4-6-1.4-1.2-6.2-5.8-2.4-1-1.6-1.7-11-2.2-1-2.1 0.4-2 1.2-3.6 4.4-1 4-2.5 4-1.9 7.2-3 1.7-6 1-1 1.1-0.2 2 1 2 2.2 1.8 7-1.1 6 2.3 7 0 2.8-1-0.8-3 1-1.9 4 0.1 1 1.1-0.1 1.7-3.2 3 3.6 7 0.7 0.6M919 680.4l-5.3-6.4-1.7-6 1-2 5.4-4 4.2-8 2.4-2.3 4-1.1 12-0.9 4 2.7 6.1 1.6 3 3 0 1-10.8 7-3.3 3.4M1502.5 805l2.2-2 3-10 3.1-6 1.8-6 3.4-3.6 2-3.7 0.5-10.7-2.6-7-0.1-4-1.2-5 3.5-9 0.1-4 1.5-7 2.1-4-2.3-4-4-13 0.4-5-0.9-1.8-7-4.5-2.8-5.7-2.2-2.3-7-1.8-3.3-3.9-1.6-5-2.1-2.7-2-1.1-8-1.8-9 2.8-4 3.4-9 1.6-4 1.5-7.8 6.3-4.2 4.7-3.5 1.3 0.5 3 1.8 2 3.2 1.2 4 3 5.1 1.8 1.1 6-1.2 2.8-3 1.5-1.7 3.7-7.1 8 1.2 7-5.8 7 0.5 4-0.5 5-2.8 3 0.5 8 1 3-0.7 5 0.6 2 3.8 4.8 5 2.3 4.5 6.9 0.5 3 5 5.9 2-0.8 4-3.9 3 0 1.5 1.8 0.3 7 0.6 1 6.6 2.8 5 4.8 9 1.1 10-1.6M753 801.3l-1 0.3-4-3.2-5-0.4-2.3-2 0.4-9-3.1-4-0.7-2 5.4-8-1.3-8-1-2-2.4-1.1-4 1.1-5-3.5-2 0-1.1 1.5 1.9 4 0.2 4-1 1.8-1 0.2-1.9-1-1.7-2-1-5-1.2-2-5.2-2.9-9-1.4-9-5.5-2-4.5-1.9-1.7-3.1 0.4-4 2.5-4-1.9-3-2.5-4.5-1.5-2.5-6-3-2.2-5.3-7.8-7.9-5-7.3-12 2.5 0.3 7 3 4.3 4.7 3.7 2.6 4 0.6 4-1.4 2 0.8 3.3 6.4 3.7 1.8 7 5.2 3 4.8 3 2 6 1.7 7-0.3 5 2 6-2.4 6-1.5 9 2.2 2 1.5 3.4 9 2.6 2.5 8 2.2 3 1.9 4-1.2 5 1.7 4.5-0.1 0.7 1-0.4 3-3.8 6 1.8 6-0.2 3-3.4 4-0.6 2 0 2 2.2 6-4 6M1048.6 721l1.2-2-1-2-2.8-1.8-2 0-0.5 2.8 1.5 3.1 2 0.7M1321.4 731l2.1-3 0.3-2-0.8-1.9-4.9 1.9-1.7 4 0.3 1 2.3 1M1008.8 1193l1.6-6 2.6-2.8 2-0.2 8 1.9 2.4 2.1 1.6 0 0.6-1-1.6-1.5-0.5-1.5 2.5-8.3 2-1.1 5-0.1 5.8-7.5-1.8-2.6-3 0.4-1-0.5-0.9-3.3 0.9-3.2-4 0.2-1.7-2 0.6-3 3.2-4-1.2-8-1.8-5 4.9-3.2 9-0.2 8.6 4.4-3 4-0.6 4-3.8 3-1.2 2 0.6 5 1.4 2.5 7 0.8 5 3.1 8-4.1 4 0.8 7 5.8 2 5.6 4 2.7 2.2 3.8 2.8 1.2 16 0.9 15-0.8 6 2.3 9-2.1 1.9-1.5 1.4-4 1.7-2.1 3.7-9.9-0.4-5 1.2-5-2.4-7-2.1-3-8.1-5-3.8-6-4.3-2-3.7-6-2.4-6 1.9-5-0.1-2-1-2-3-3 1-4-1.5-2.5-4-1.7-6 0.5-15-3.3-1.4-2-0.7-4-0.9-0.6-3 0.8-2-0.6-2-1.4-3-4.2-5-0.9-3-3.4-8-3.5-1.1-1.2-1.5-5-2.7-4-3.4-3-3.3-0.5-2-1.1-2.5-4.4-2.5-2.1-5-2-6 1.2-2-0.7-3-4.6-7.8-3.8-3.3-6-6.5-4-0.4-5.6-2.3-2.4-1.7-6.6-4.3-7.4 2.7-5-1.3-2-7.1-1.4-5 1-3-1.1-3-4.8-8.7-7.7-4.3-0-2-3-5-5-4.6-3-3.4-6.6-2-0.9-9-0.9-2.3-4.6-7-3-4.5-6-0.4-4-0.8-1.5-2-0.1-6 3.5-5.3-1.9-2.8-5-0.9-4-4-5.7-7-5.3 1.2-4-0.2-1.5-1-1.7-3.8-1.8-0.5-8-4.7-5 1-4-0-5-1.1-3-3.9-5.5-5-0.2-1.3-1.3 0.3-2.3 4.2-5.7-0.5-2-2.7-1.2-5 2.3-8 0.6-5-0.4-6 4.1-6-0.1-3.8-3.3-2.8-7-3.8-2-1.6-3-3.9-4-0.8-2 0.7-5-1.4-4 0.4-7.2 4 0.2 2 2.2 2 0.4 6-2.6 6-0.7 9 3.5 1-0.8 1-5 2-0.5 4 2.2 1.4-0.7-0-2-3.4-4-0.8-2 0.8-0.7 4-0.2 0.4-2.1-1.4-1.3-3-0.4-0.7-1.3 0.7-2.2 4.1-1.8 3.8-6-0.8-5 0.2-7-1.3-2-3-1-4-7-0-1 1-1 4-0.2 1.3-0.8 1-2-0.4-4 1.1-1.7 2-0.2 2 0.7 7.6 8.2 10.4 5.8 4.1 5.2 0.6 6-1.9 3-3.1 12 4.3 5.6 2 0.1 3-1.1 3-2.6 0.5-5-1.7-7 1-2 4.4-0 3.8 2.2 2 0.4 6-3.5 5-1.1 4-1.8 3 2.8 4-0.2 2 1 4.5 5.2 2.7 8 1.8 1.3 7 2.3 0.7 7.4 2.3 5 6-0.1 4 1.8 0.4 2.3-1.8 5-0.2 4 0.5 2 3.1 2.7 4.8 1.3 4.2 2.6 5-1.5 6-0.2 8 2.2 2-0.2 7-3.5 3-0.1 2 1.1 3.6 5.6 3.4 1.2 8-2.8 5-5.7 3-1.8 2 0.3 3 2.7 3 6.3-1 2.3-1 0.4-0.9-2.9-1.1-1.2-4 0.2-1 1 0.1 1 0.9 1.1 5 2.7 1.4 2.2 1.6 1 5 1 6.9 4 6.1 13.2 1 0.7 2-0.2 6-3.7 5 0.6 1.5 1.4 1.6 4-0.8 6-1.3 1.5-4-0.4-1 0.9 0.4 2 1.6 2 2 0.9 7 1 3-1.6 1.7 2.7-2.6 3-1.1 4-4.3 3-2 6 7.3 3 3 4.5 1 0.3 6-1.8 3.7-5 4.3-1.7 2.3 0.7 4.9 6 3.8 0.8 3-0.5 2-1.3 3.3-6-1.8-5-5-5-0.1-1 2.6-3.2 8-4.1 4-4.2 2-0.8 5 3.1 6 0.2 6 2 1.1-0 2.9-1.9 2 0.1 1.2 1.8 0.8 4.9 1 1.7 2 1.4 2-0.5 5-5.3 1.3-5.2 2.7-5.9 7-2.1 3-2 2.7-3 4.3-9 4-3.5 3.4-5.5 1.6-7.7 1-0.3 2 0.9 2.6 3.1 1.4 0.8 2-0.1 1.8-1.7 2-5 0.1-5-1.7-4 0.1-5-4.1-10 3.9-5 6.9-2.4 0.4-3.6-5.4-10-6.3-9-0.6-3 1.9-4 0.2-4-5.3-8-1.4-4-0.1-3 1.6-1.1 10-0.7 3.1-2.2 1.4-4 0.6-8 4.1-8-0.9-6 2.8-3 5.8-4-0.7-4 0.8-2.1 4-2 1 0.5 1.2 5.6-6.3 11-0.8 13 1.2 8-0.2 8 1.9 1.7 4 1.1 0.6 1.2-1 10 1.6 3 0.4 3-2.4 7-0 7-0.9 2-3 3-0.1 4 3.3 4 0.6 3-0.8 2-3.3 2.4-0.8 1.6-0.3 8 1.1 1.9 2 0.3 2-0.6 2-1.7 2-0.3 4.6 4.4 6.4 3.3 7 0.3 3 2.2 2.5 3.2-3.4 6 1.1 4-1 5 2.3 6 0.2 2-1.7 4.6-3 2.1-1.4 3.3 1.7 5 0.3 4-1.8 3-4.5 3-2.3 3-2.4 13 1 3 5.5 7 13.9 10 2 5 4 4.6 0.8 2.4-0.5 1-3.7 2-6.6 5.6-1.6 5.4-4.9 6-2.1 4-4.2 4-2.5 5-2.7 2.2-6 3-1.8 1.8-1.7 4 0.5 5.2-2.6 2.8-0.4 1.5 4.7 8.5 2.5 3-0.1 2-1.8 2-0.7 2 1.2 3 7.2 5.8 5 0.8 7 3.4 5 6 1-0.1 2-1.7 5-7.1 6-3.8 6-0.1 9 3.7 15-7.2 5 0.1 4-1.9 1.9 0.1-1.8 4 2.4 5-1.1 13-6.2 10 0.8 7.1-1 0.9-11 2.3-5-3.2-2-0.2-3.2 4.1-5.8 5.1-2 1-5-0.3-2 1-3.8 7.2 0.8 6 2.3 7 0.9 8-0.5 7-1.4 5 2.7 3.1 4 0.7 1.2 1.2-2.4 3-0.7 4 0.6 2 2.3 2.3 5-0.3 4 1.8 7.8 1.2 5.2 5.1 7 1.8 4.2 5.1-0.2 2-4 1-1.3 3 0.3 4.3-2.6 6.7 0.6 2.8 1 1.2 2-0.3 8-11.8 3 0.5 6 5.4 2-1.2 0.8-1.6 0.4-4-0.7-3 0.5-0.4 10-1.1 6-1.6 4 0.4 2-1.1 2-2.8 6 0.5 2-0.9 4-4.7 4.8-3.3 0.2-2-2.4-5-0.1-2 8.5-14.3 2-1.2 2 0.1 4 3.4 0.7 2-1.6 6 4.9 2.5 1.7 2.5-1.1 2-3.6 2-0.9 3-2.8 3-0.5 2 1.2 3.6 4 3.5 2 0.2 1-1.3 0.5-3 2.5-2.3 3 2.3 3.1 5-0.5 3-5.6 4.6-0.5 2.4 1.5 1.4 6 2.2 14 3.7 1 0.8 2 4.4 5 4.2 7 1.1 3-0.4 0.9-1.4-0.2-4 0.7-2 3.6-2.4 5-1 4-3 6.9-6.6 1.8-4 2.3-1.1 3-3.6 20-4.2 2.3-5.1 2.9-3 0.8-9 6-2.6 11-2.9 5.1-3.5 0.9-4.5 1-0.1 4 2.1 3-0.9 5-5.6 1.4-6 4.4-4 0.2-5 1-2.7 5-3.7 4-5.6 8-9 0.5-3-1.5-11 2.9-9-0.1-3-5.3-13-3-4-3.5-10 2-4.5 5-2 2.8-2.5 3.2-8.4 7.9-4.6 4.1-5.1M1299 782.1l-4.6-1.1-4.6-6-1-8 4.2-2.6 2 0.1 3 2.3 4.5 1.2 5.5 3-6.8 10M-40 1008.3l2-0.3 2 0.7 21 14.6 7 2 3 1.6 9 13.3 6 3.8 13 0.7 8 1.4 6-1.6 4 0.1 6-2.4 8 1.1 3 3.4 6-2.1 1.5-4.6 1.5-1 7 1 7-2 7-0 4-6.3 7-2.4 4.4-2.3 5.6-5 3-4.5 2.9-9.5 3.1-1.2 3.3-2.8 5.1-3 4.3-5 0.9-4-0.9-11-5-7-5.5-3-2.6-5-0.5-4-0.7-1-5.4-3.4-1.8-2.6 0-10-3.7-10 0.2-2 1.1-2 11.2-13 1.3-10 2.5-8 0.1-5-1.1-3 1.5-5-2.9-8-0.4-4 0.8-7-1.6-4-2.2-1.9-3.3-1.1-8.7-5-10 2.8-2-0.2-8-4.1-7-0.9-6-5.1-2-0.3-7 1-4-2.3-6-1.6-2-1.6-4-6.6-12.5-9.1-1.4-9-3.1-3.5-3-0.8-9 2.1-5-3.7-8 0.5-2.3-1.6-2.7-5-8-4.4-3.5-6.6 0.3-8-1.8-2.8-7-1.3-4 2.1-2-0.1-4.4-1.9-5.6-4.4-1.3 0.4-1.7 2.6M1454.8 811l2-2-0.1-10-3.7-6.9-3 1.2-2.4 2.7-0.6 3 0.5 4-1 4 1 3 1.5 1.4M4.1 798l2.9-3.2-2-0.3-1.9 1.5-1.1 2 1 0.8M22.7 806l1.2-2-0.3-3-1.6-1.1-1.6 0.1-1.6 2-0.5 3 1.7 1.5M747 812.2l-2-1.1-1.2-2.1 0.2-1 2-1.1 2.2 0.1 0.9 1-0.6 3M737 871.4l-3 0.1-5-6.5-0.8-3 0.8-1 2 0.4 5 4 2.2 3.6M752 876.2l-2.6-0.2-1.4-0.8-0.6-2.2 2.6-0.9 7.1 2.9M769 885.3l-2 0.4-1-0.7-4.7-8 0.7-0.4 1 0.5 3 3.8 3 0 2 1 0.2 2.1M793 926.4l-2-0.1-2.6-2.3 0.4-2 3.1-2-0.2-1-1.7-0.4-3-2.4-2 0.1-5 3.9-3-0.5-3.2-2.7-0.8-2 0.3-5-3.1-4-0.7-2 0.8-3 2.7-5.3 8-1.6 8-3.7 2 0-1 3.6-3.4 4-0.4 6 4.8 7.6 2.3 1.4-1.1 3-0.1 3 2.9 1.8 0.6 2.2-0.6 2.2M1198.7 897l1.1-2-0.3-2-2.5-0.4-2.5 2.4 0 2 2.5 0.7M1144.1 923l1-1-0.1-1-2-2.4-5.7-0.6-0.1 1 2.8 3.9M1310 993.3l-4 0.3-0.3-1.6 3.7-5 4.6-3.9 0.5 1.9-0.6 4-1.1 2M767.6 1012l1.9-1-0.1-1-2.4-1.4-2-0.2-2 1.4 0 1.2 1 1.2 2 0.4M987 1086.4l-8-1-5-3.9-5-2.1-5 0.6-7 2.7-8-2.2-5-4.7-2.7-3.8-8.4-5-4.9-5.4-5 0.4-11-4-9-0.9-4 0.5-2-0.7-6.5-8.9-0.5-3 0.2-3 1.9-5 0.1-3 2.9-4-1.5-7 4-8 5.4 0.5 4-0.7 5.4-5.8 1.6-0.8 2 0 2.6 1.8 5.4 7-1.3 5 1.3 2.2 7 1.3 8-1.2 1.2 0.7 2.1 4 1.7 1.6 4 1.4 5-0.2 1 0.5 4 4.4 1.1 6.3-0.2 7 1.1 2.6 4 2.8 12 3.9 2.2 2.7 2.6 8 6.3 2 0.7 1 0.1 2 2.4 5M1477 1037l-2-0.6-1.8-2.4-0.2-4.2 1-0.1 7.3 4.3-1.3 2.4M1498 1051l-7-3.7-1-2.3 6-2.4 2.2 3.4M1079 1154.2l-3-0.9-1.4-2.3-0.1-2 2.5-2 1.4 1 1.9 3-0 2M915.9-40l-2.5 3 0 1 5.5 2 0.8 2-0.5 2-3.2 2.4-8 3.2-6 5.4-9 3-4 4-5.9 7-1.6 13-1.2 2-8.3 0.8-8-4-5 1.5-4.1 3.7-2.8 10-9.1 7.6-5 7.6-5 1.8-4.8 4-5.2 1.7-6 3.4-8 1.6-6 2.6-3-0.2-3-2.9-3 0.4-6 4.8-6 1.3-2 1.3-5 5.3-2.2 5.7-3.8 5.5-6 0.9-2.5 1.6-1.3 4-3.3 4-2.9 7.4-4 2.9-4 6.1-8 6.8-2.3 2.8-1.4 3 0.7 5-1 2.5-3 3.8-5 1.6-2.7 4.1-0.6 2 1.3 15-0.3 5-0.8 2-4.3 5-2.6 5.5-5-1.1-1 0.6-1.6 3-0.3 6 1.5 6-0.9 4 0.8 4 1.2 2 5.3 4.1 3.8 7.9-2.8 9-0.5 4-4 6 1 6-1.2 2-4.3 1.9-5 0.3-4 1.5-2-0.1-8.4-7.6-1.2-3-2.8-1-0.6-1 0.5-3-3.5-4.5-1.3-3.5-1.7-1.9-8-0.4-8 1.5-1.8 1.8-3 7-1.5 12-1.3 4 0.2 2 2.8 2 1.3 2-0 5 2.1 6-3.8 8-2.1 7-5.7 4-8.2 2.4-2.3 2.6-1.2 5-4.5 1.8-10 6.6-2 0.3-4-1.3-6 1.2-9 4.4-6.4 1-0.7 1-1 7 2.7 4 0.3 2-0.8 2-1.1 0.9-4 0.8-6 3.3-6 1.7-13 0.8-6-1.7-7 1.1-3-0.9-1-2-0-5-1.5-4-3.5-5.3-4-3-1.5-2.7-1.2-14-3.3-10.9-5-2.8-2.4-2.3-4.8-8-0.8-5.3-3-1-4-3.3-4.2-2.4-1.1-2-0.8-5-2.5-4-3.2-9-2.7-4-9.1-8-5.4-1.2-2.1-1.8-1.9-4.3-0.5-4.7-2-6-0.3-5-3.4-7-5.4-6-2.9-6-1.1-9-2.3-5-0.9-4-5.9-5 0.8-5-0.7-2-4.4-4.3-7-2.2-5.5-4.5-0.9-3 0.8-5-3.9-6-2.3-9-5.2-5.4-4.6-2.6-0.4-7.2-6-13.8 0.9-3 2.6-4 0.3-4-0.8-2-5.4-3-4.2-7-2.5-6 0.2-5-2.8-12-1.3-3-1-0.7-3-0.5-7 3.2-6 0.4-2-1.1-6.8-8.3-4.2-1.1-4-2.1-5 1.2-6 4.2-4.9-0.2-6.1-2.1-5 1.7-7-0.1-4.1 3.5-1.9 0.7-4-0.8-5.2-4.9-2.8-1.4-7-1-5 1.3-2-0.5-7-5.4-4-0.7-4-1.7-8-5.3-1.4-5.3-2.4-5-0.7-6-1.6-2-4.2-3-4.9-10-2.4-3-0.2-2 2.5-5-3.1-3M1563 515.6l-4-2.4-3 0.4-1.1 2.4 0.6 5-0.9 2-10.6 9.9-7 2.2-10-0.1-5-2.6-5-1.3-4-3.2-9-2.4-1-1.5-1-5-8-4.3-4-6-6-0.8-1-0.7-2.4-5.2 2.2-4 0.2-10 4.7-8-1.2-7-7.6-13-0.9-4 0-5-1-2-3.6-3-4.7-6-13.6-7-2.6-4 0.4-14-5.6-7-4.2-9 1.1-8-1.7-10-1.5-4 1.4-3-0.1-2-3.3-4.9-0.4-3.1-3.8-3-1.4-2-0.3-3 1-6-0.7-2-5.4-6.3-3.9-0.7 0.1-1 1.8-1.1 4 0.7 6 4.1 6 2.4 2-0.2 1.9-2.9 1.1-0.3 6 2.9 2 0 9-5.8 6-2.2 6-3.3 9-11 2-0.3 5 1.5 3-0.6 4-1.8 3-2.7 10-3.1 9-6.1 3.4-8.2 1.7-8 0.7-11-1-11 1.9-8-2-4-0.3-4 3.3-13-0.5-2-3.1-3-0.5-6-8.4-9-2.2-5.4-6-5.1-11.7-2.5-9.3-6.2-9 0.5-4-1.3-1-1 0.2-5-1.2-3.5-4.1-6.5-2.9-6.7-6.6-8.3-1.9-11-1-2-4.5-2.1-3-4.6-7-5.1-6 0.3-4-3.4-6-2.6-10-0.9-3 0.8-3 2.5-8 2.9-5 0.5-8-1.2-3 0.9-3 2.6-7.1 3.4-0.7 1-1.3 9 0.9 4 7.1 17-0.8 9 1.3 10 2.6 8 5.5 11 9.5 5.7 3 3.4 2 1.1 3-0.2 9-3.2 3 0.5 4.9-0.3 1.1 4 2 0.9 5-2.4 3.6 0.5-0.8 3-5.1 5-4.2 10 0.2 2 3.5 7 0.7 3-3.5 13 0.2 6-1.1 10-1.6 5-2.8 4-0.6 4 0.9 3 3.6 2.4 1.1 1.6-0.1 2-1.6 3 0.5 10-0.8 3-2.1-0.1-3-2.4-6-2.4-4 0.1-3-0.7-5-3.9-11-1.1-3-1.5-1.7-4-0.4-4-2.7-3-0.6-2 0.6-3 3.6-5 0.7-2-0.5-3.6-3-7.4 3.6-14-0.3-2-2.2-4 0.1-12-4.2-5.9-3.3-9.1-0.5-5-6.5-6-3.6-6-4.1-5-1.1-4 0.2-5-0.9-2-5.2-3.1-1.7-1.9-1.1-3 0.3-5-0.5-3.1-1.9-1.9-4.1-2.5-2.9-4.5-5-4-5.1-2.6-4 0.1-7 3.6-3 5.9-2 1.9-4 0.5-6-1.7-3.5 0.3-6.5 4.1-11.2 8.9-4.7 8-2.7 9 0.2 3 2.8 5 1.4 5 4.8 3-1.4 4 0.8 1 4 0.2 3.4 2.8 4.6 2.3 2.4 2.7 0.4 3-1.3 7-1.5 2.7-4 1-5-1.6-3.4-4.1-5.5-0-0.7 1 0.5 4-0.9 1.7-6 1.9-2.6 2.4-0.9 7-1.5 0.9-5-1.5-2.5-2.4 1.3-6-0.9-5 3.9-8-0-3-7.8-8.1-5.9-2.9-3.8-4 8.7-8 0.4-2-1.2-4 0.8-7 1-2 2-1.3 3-0.5 5 1.7 3-2 4.2-0.9 1.6-1 4.5-6 0.5-3-1.4-5 0.2-7 3.4-6 4.2-5-0.4-6 1.3-4 1-10-2.6-5-6.3-7-4.2-3.6-8-3.4-0.8-1-0.2-2 2-7.8 2-0.2 4.4 2 3.1 9 1.5 1.9 6.3 0.1 3.7 2.9 3 0.9 4-1.5 6-0.9 5 1.3 3-0 2-1.2 5-5.2 6-0.2 7.3-3.1 2.7-4.5 4-3.5 4.5-7 0.3-4-0.7-5 1.8-5-3.1-14-2.4-7-2-12-4.4-3.9-6-0.7-3-1.1-5.3-4.3-4.6-6-4.7-3-7-9-0.5-2 1.2-4-1-2-4.1 2-8-2.5-6-3.2-4.1-1.3-0.9-2 0.2-11-1.2-3.2-2-1.7-7.6-2.1-7.7-8-0.4-11 8.7-5.3 3-1.1 6.9-4.6 2.2-4-0.3-3-1.9-2-2.9-0.6-2.9 2.6-3.1 1.4-3 4.6-4.8 2-0.9 1-1.3 4-0 4.4-6-1.2-10 2.3-4.6 6.5-2.4 1.4-19-1.5-5 1.1-2 1.6-2.3 5.4-1.7 1.8-6 1.7-6 0.7-6 3.1-5.9 1.7-9.1 6.2-4-1-11 1.9-5-0.6-8 1.5-18-2.8-6-2.4-3 0.1-4 2.1-5-2-7 4-4 5.4-5-0.2-2 0.7-3.5 3.1-2.5 3.5-4 3.1-8.4 1.4-1.4 3-0 5-1.2 1.3-10-2-7-0.4-7-1.8-5 1.6-4 2.9-7 1.1-0.3-1.7 2.2-5 2.7-13 4.2-7 3.6-4 2.1-9 3.3-3 1-2 0.9-5 1.6-4 0.2-4-0.9-4 0.5-2 2.3-3 7.6-1.3 2.8-2.7 1.9-3-0.8-3 0.7-4M1000 78.5l-2.7-0.5 0.5-3 6.2-3.7 0.5 1.7-1.4 3M1002 155.2l-1 0.5-0.6-0.7 0.2-3-6.1-7-4.1-7-6.3-4-8.1-9.2-4-1.9-4 0.6-2-1.2-1.3-2.3 0.6-6-1.1-2-2.2-0.7-4 0.4-3-3-3.6-1.7 1.7-7 6.4-9 2.2-8 3.3-2.5 3-0.7 13 1.5 5-1.3 3-2.5 1-0.1 4.9 2.6 0.2 2-1.4 4 0.3 4-0.8 6 0.6 3 5.2 5 0.1 6 1.3 3 2.5 3 4.8 4 4.4 7 7.4 8 1.1 3 0.3 4-0.7 1-7.2 5.9-8.8 3.1M1153 116.5l-7-0.5-2.4-1-1.6-2.4-1.7-5.6 0.7-1.9 1-0.4 2 0.6 4 3.4 4.7 6.3M925 133.9l-0.5-1.9 2.6-3 1.9-0.7 0.5 0.7-0.5 0.7M1045 159.3l-2 0.4-4.3-2.7-0.8-2-0.1-3 2.2-0 3 2 2.5 3M1142 217l-2.3 0-1.9-3-1.1-5 0.9-2 1.4-0.9 2 0.9 3.8 7-0.8 2M965 312.2l-5-0.4-8.9-2.8-12.2-8-0.8-1 7.9-9.4 3-1.3 8 0 5 0.8 3-0.7 9-6.6 5-2.1 2-2 5-2.3 9-6.4 4.9 3 3.2 4 8.9 6 1.7 2 0.5 4-0.6 1-5.6 2.6-10 2.8-4 3.4-4 2.2-1 3.1-3 1-7 0.1-3.7 3.8-4.3 0.7M1062 298l-4-0.2-1.3-0.8 1.6-4 1.7-1.8 8 0.2 1.5 0.6 1.1 3-1.1 1-3.5 1.5M1044 315.8l-2.9-4.8-2.1-1.2-2-3.2-3-2.2-4 2.5-2-0.9-3.5-7-0.1-3 2.6-0.1 5 1.2 2.8 1.9 1.7 3 1.5 0.5 12-1.2 0.6 0.7-0.8 4-4.5 5M244 353.1l-2 0.8-2-0.3-6-3.9-6-1.1-5-3.5-7-0.1-3-1.6-3.7-10.4 1-8-3.6-7-1.8-6 0.2-5 0.9-2.6 6 0.3 12 4.6 6 4.4 10.5 2.3 3.5 2 5.8 5 8.2 2.6 1.3 7.4 1.7 5-0.6 5 2.7 1-0.2 3-1.9 1.5-10 0.3M457 583.3l-2 0.5-6-1.9-4.3-3.9-1.2-3-1.5-1-5 1.8-10-1-4 2.4-4 0.4-4 2.3-1.4-1.9-0.5-5-2.1-1.7-3-0.9-4 0-5 2.2-1.6-0.6-0.4-1 1.1-3-5.1-1.2-6 0.2-0.8-2 0.2-7-2.4-3.7-3-1.4-6 0.7-2-1.3 1-6.3-0.5-4-2.5-4.2-4-2.8-2.8-9-6.2-6.9-5-1.3-2-1.3-4-7.5-8-4.6-8.9-10.4-4.7-8-1.4-9-1-1.2-8.1-4.8-3.2-6-1.2-5-0.5-10 2.6-5 2.1-8-1.4-12-4.7-8-0-5-3.2-8-1.5-6-3.9-3.6-1.3-5.4-5.7-3.7-0.5-1.3 0.5-2.3 2-0.8 0.9-1.9-2.9-4.9-0.2-2.1 4.2-1.9 8-5.7 4-1.1 5-3.1 4-0.2 8 1.8 6 0.3 19-6.2 8 0.4 3-1 8-9.1 5.3-10.2-0.3-10 0.9-4-0.4-6 0.5-1.8 1.6 0.8 3.4 4.1 5.9 1.9 0.8 1-0 3 1.3 3.6 5.1 8.4-0 4 2.9 3 3 1.1 6-0.4 5 0.6 4-2.7 8 1.2 5 2.3 5 0.1 3 3 6-0.8 8 0.3 11-7.2 4-9.6 7-3.8 2-0.4 4 1.2 11 1 3 1.1 3-0.5 4-2 7 3 5-2.1 3-0.2 2 0.9 2.2 4.9 2.8 2.2 3 0.5 7-1.3 3 0.4 1.4 3.2-0.2 7 5.7 6 1.6 14 3 7 0.2 2-1.5 8 0.5 3 7.3 11.4 3 2.9 1.5 2.7 1 7 2.7 6 0.5 8-0.7 2.7-3.7 5.3-0.3 2 1 5.6 3.6 9.4-0.2 9-2.2 5-2.2 2.3-6 2.4-6-0.3-6-1.8-4 0.9-8 4-4 5-6.3 1.5-8.7-0.6-7.9 4.6-0.6 2 0.2 4 1.1 6-0.8 1-5 2.3-4.6 4.7-4.4 2.9-2.1 3.1-0.8 8-0.1 14-2 2.5-5.7 4.5-2.4 4-7.2 6-0.6 2 0.7 8-2 5-0.8 0.6-4-0.4-5.8 4.8-0.2 2 1 0.8 4-2.4 1-0.1 1.2 1.7 0.7 7M544 323.4l-2.4-0.4-0.5-3 1.9-2.6 3-2.4 1.3 1 0.1 4-1.3 2M394 326.2l-2.7-1.2-1.9-2 2.5-5 2.1-1.1 2.2 1.1 1.4 3-0.6 2.6M1012 391.8l-3.5-0.8-11.5-7.5-1.9-2.5 3.9-2.2 3-6.1 5-2.1 3 2.3 2 3.1-0.1 2-1.8 4 2 8M1288 454.2l-2.4-0.2-3.2-5-3.4-2.8-4-1.7-4.3-0.5 0.3-1.2 3-2.8 2.6-5-3.9-8-2.7-0.1-1.3 2.1-1.8 1-5.9-0.3-2 0.6-6-5.1-5.3-2.2-3.7-0.6-5 1.7-3-0.8-1.8-1.3 0.1-6-1.1-3-9-10 1-7 0.8-1.6 2-0.7 2 1.3 2 0.2 7-1.6 4 0.6 4 3.4 4 1.6 2.3 3.8 3.9 4 6.8 11.1 9 3.2 7 4.7 6 1.4 4.5 6.6 1.8 4-0.5 7-1.1 3 0.7 4M1047 422.6l-3-0.9-1.5-1.7 0.1-1 6.7-5 4.1-7 3.6-2.1 3-2.9 1.6-0-0.2 3-3.4 7.5-2.9 2.5-2 3-3.1 1.7M-40 423.8l6 4.8 3 0.2 4 1.4 16 9.4 4 1 7-0.8 7 2.6 4-0.3 2 0.8 6 8.4 2.3 7.7 5.7 7.1 5.2 2.9 4 4 1 2-0.2 1.5-1 0.7-5-0.4-3 3.2-1.2 12-3.8 6.5-4.3 4.5-0.6 7-1.4 6-1.6 4-1.1 1-3-0.2-3-3.5-5-3.1-3.4-4.2-4.6-1.9-8-0.3-6 2.9-3-0.5-3 0.4-2-0.5-4-3.1-3-0.3-2 0.9-4 3.4M432 460l3.4-4-2.4-3 0.8-7 2-3-1.8-1.6-1.5 0.6-2.8 3-0.9 5-1.9 3 2.3 3-0.2 3.1 1 1.1M1112 779l-2 0.4-2.4-1.4-2.3-4-1.2-6-0.9-1-4.2 1.6-2.3-1.6-1.2-2 0.6-4-1.1-1.9-2-0.8-4 1-3-0.4-1.2-0.9-1.8-4-4-1.1-4-3.1-9-1-4 2-4.8 0.2-2.2 2.8-2 0.6-1.7-3.4-1.3-0.9-4 1.9-3-0-6-3-7.7-0-2.4-1-0.6-1 0.5-3-0.5-5 1-2 1.3-1 3.4-0 8 2.4 7 1.2 5-4.4 4-0.4 9-3.8 2.3-6-0.1-4 6.8-3.5 2-2.5 0-11-0.8-5 3.8-1.3 2-3.6 2.3-2.1-0.3-10-4.3-7-0.4-2 1.1-8 3.1-13 0-3-7.5-9-2.3-5-0.9-5 1.6-5-4-10 0.5-3 1.9-3-0.1-1-3-5-2.7-2.7-1.9-3.3 0.5-1 5.4-3 7 0.8 3-1.4 12-3 7-2.8 0.8-2.6-0.8-3.7 4.7-2.3 4.3-0.9 4.9-4.1 1.1-5.7 3.6-3.3 2-3 1.1-5-1.6-5-0.2-3 1.1-4 1-1.1 2 0.4 6 3.1 6-1 4 1.7 6 10.9 0.2 16 0.8 2.3 2 1.2 2-0.2 7-3.1 4 1.4 5 0.5 17-2 5-2 6 1.2 6-3.2 6 2.3 7-1.6 5 0.3 6-4.8 7-2.3 4 0.6 7 3.9 3-0.4 7-5.7 3.7-1.4 7.9-6 1.2-5-1.1-5 0.3-1.2 7.1-3.8 4.9-8.7 1.1-4.3 1.3-2 7.6-3.6 11.5-12.4 1.6-11 1.6-3 0.9-4 3.3-3 0.1-4.4 2.9-5.6-1-6 2.3-4-2.2-6.2-3.7-4.8 0-2 0.7-1 11 0.4 6 4.5 7 3.2 5.3 0.9 3 5 0.7 5.7 3 3.9 0.9 2.4-1.7 9-2.2 3.3-4.3 3.7-1.9 3-1.5 11 0.9 6-3.7 3-0.9 2 0.2 3 1.2 1.6 3.7 0.4 0.9 1-1.6 1.2-4-0.7-4 6.4-1.6 5.1 0.8 5-0.7 6 0.3 5-2.1 3-4.7 2.2-1.9 1.8-2.8 13 1.1 3 4 3 4.3 5 5.3 2.2 4-1.5 3.3 0.3 2.7 2 3 3.6 11.3 6.4 0.4 2-0.5 5-3.7 5 0 10-4.1 5-0.5 4 0.7 1 1.4 0.1 4-1.7 1.7 0.6 1.2 2 1.1 5 2 1.9 2 0.6 6-3.2 9-1.3 5 1.7 8 0.4 7-3.2 14 0.4 6-1.5 2-1.3 8 2.6 3-0.3 5-2 5 0.9 2-1.3 7-7.7 4 1 2-0.8 2.3-2.9-0.3-2-1.6-2 0.6-2 8-2.6 4 3.6 0.9 2-1.4 6-3.1 3 7.6 2.8 4 0.3 2 1.1 1.5 1.8 0.4 2-0.8 4 3.9 10.7 0.7 4.3-0.4 2-12.3 5.9-6 3.6-2 0.4-4-0.8-2 0.5-3.5 5.4-1.5 1.3-11 2.7-3 1.6-3 3.4-2.2 5-1 8-5.3 6-0.8 3-1.8 2-7.9 5.6-3 8.7-2 3.1-1 0.3-3-1.3-1.3 0.6 1.1 2 2.2 0.9 3-0.6 5.5 0.7 1.6 1 1 2-0.9 2-2.2 1.7-5 0.5-3 5.6-2 0.4-3-1.2-2 1-0.5 1 0.3 2 3.2 3.5 2 0.1 7-2.9 2 1.2-0.2 10.1-1.8 3.3-9 2.1-5 3.1-9-3.4-1.5-3.1-2.5-2.1-7-1.6-4.3-4.3-1.7-4-5-0.5-3-1.3-0.9-1.2-0.1-5-4-4-2.4-5-0.4-2 1.1-2 2.7-2.1 4-1.6 1-1.3-0.3-3-2.3-4-2.3-6 0.9-1 4-1 5 1.7 1.5-1.7 0.1-2-1.6-3.6-0.2-2.4-0.8-0.8-6-0.7-9 1-3.5 2.5-1.5 4-4 1.8-2 0.1-7-5.2-9-2.3-6-5.3-5-0.1-7-3.2-5-0.4-7-5.2-4 0.8-0.4-1 1-3-1-3-1.6-1-6-0.6-1.6-1.4-1.7-5-0.3-5-1.4-3-2 0.1-4 2.7-4-0-5.2-2.8-3.8-3.7-6-2.3-4-4.2-4-1.1-4-0.1-4-1.9-4-0.2-11 2.8-3-1-5-3.5-6-0.2-8.2 1.4-8.8 4.5-6 1.4-4.3 3.1-4.4 8-4.8 17-2.7 5 0.3 3 2.4 4-0.8 4-1.7 2.2-4 2.4-3.7 3.4-0.7 3 0.1 7-6 4-6.8 7-1 3 1.4 7-1.1 4-6.2 6.5-3.5 1.5-8.9 8-0.7 2 0.1 4.5-2 0.7-5-0.5-2.1 1.3 0.4 5-1.1 4 0.4 5M743 496l-3-0.9-1.2-1.1-3.9-6 0.1-1.7 8.5 8.7M848 621.1l-4 0-5-3.4-2 0.2-4 2.1-2-0-1-1-1-9 1-2.1 5-4.6 5.3-7.3 4.2-3 2.8-3 0.7-4-0.7-6 1.1-3 3.1-4 1.2-3 2.1-11-1.9-11-3.4-8 0.5-1.1 3-0.8 2-1.4 9.6-9.7 0.7-6 2.9-4 5.2-5 0.7-2-0.9-4 0.5-4-3.3-8 0.6-1.5 2-0.7 1.8 1.2 1.5 3 0.1 6 2.4 4-1.1 5 4.1 9 0.7 4-0.5 6 4.2 11 1.8 2.7 7 1.9 7-0.1 6 0.9 1 4.1-0.4 1.5-3.6 2.1-1.6 1.9 0.2 2 1.4 2 5 1.9 2-0.1 10-4.9 4-0 4-2.6 4-0.6 4-2.2 3 0 5 1.8 7 4.9 7-0.6 5 1.1 3 5.3 6 2.4 6 0.4 7 2.7 6.5-2.5 4.5-0.6 12 3.1 8 7.5 4-0.8 7 5.3 9.2 11.5-0.3 2-1.9 1.2-6-0.4-6 1.5-8 0.1-4 1.8-4.4 0.8-5.6 2.1-3-0.7-5 0.1-2-1.3-2.4-3.2-4.6-1.6-7-7.4-6-1.4-6-4.2-5-0.9-5-2.3-8 1.1-15 0.4-6.1-1.7-5.9-0.6-4-1.4-8 0.4-3.2-2.4-0-1 2.3-3-0.1-2-1.6-2-2.4-1.1-7 4.2-1.5 2.9-1.5 1.3-7 1.3-5.2 2.4-1.4 3 1 7-3.3 2-2 3-8.1 1.7-5.4 4.3-3.8 9-0.4 5-1 2-5.4 5.7M1490 503l0.9-2-0.9-2.1-3 0.1-2.6 2 0.4 1 2.2 1.2M913.5 568l0.8-1-1.3-2.2-2-0.6-0.9 0.8-0.8 2 0.4 1 1.3 0.5M707 653.2l-5-0.4-9.8-4.8-0.4-10-1.3-4-1.5-1.2-9-1.8-1.8-1-0.7-7-3.1-4-5.4-11-4.7-6-0.4-5 1.1-1.7 4-1.6 7-1.6 4-4.2 4 1 4.3 3.1 4 9 1.6 7 1.1 1.9 12.5 10.1 9.5 4.9 3-0.6 4-2.5 4-1.3 2 0.3 1.3 1.2 2.4 4-0.7 9-3 7.3-2.2 2.7-1 6-1 1-1.8 0-1.1-1-0.9-2.7-3 0-3-2.1-7 6.2M1053 600.6l-3-0.3-2.2-1.3-0.4-1 0.8-2 1.8-0.8 3 0.9 1.3 1.9-0.3 1.6M395 612l-6-0.8-2.9-2.2-1.4-3 1.1-4 3.2-0.9 2.3 0.9 1.7 4.4 2.7 3.6M393 712.3l-2-0.2-2.9-5.1-0.4-3-2.4-6-5.2-6-3.1-1.6-1.1-1.4 2.4-10 2.2-5 2.9-5 6.6-6.4 1.1-2.6-3.7-4-1.4-6.4-4-5.7-2.4-1.9-1-4 1.4-2.8 5-5.2 7-3.2 0.9-1.8 0.3-5 3.8-6.9 7 3.2 2 2.4 0.8 2.3 0.6 10 2.5 6 3.1 2.3 2 4.7 5.2 4-1.2 9 0.7 2 3.3 4 3 0.4 10-3.3 7 1 10-1 8.2 5.9 0.9 2-1.1 0.5-4-0.3-2 0.8-5 3.9-4 4.7-3.2 1.4 1.7 5-0.8 2-5.7 5-6.2 3-2.8 7.6-2 1.6-4.7 1.8-2.3 3.9-2.1-0.9 0.9-10-2.8-4-3 1.4-5.4 0.6-1.6 2.8-6.4 2.2-1.6 2-3.4 8M302 637.1l-2 0.5-11-3.9-5.8-5.7-0.2-3 1-1.9 4-1.6 2 0 12 6.5 1.3 2 0.3 3-0.6 3M-40 1040.1l8-0.4 15 2.7 5 2.1 7 4.4 7 2.4 5 3.5 4 1.8 15 12.7 5 2.7 2.7 4 4.3 4 9 1.3 4-0.8 7 0.7 3-0.3 10-4.7 3-6.2 7-9.3 2-1 8-1.2 7-8.5 2.1-4 4.9-2.1 3.2-3.9 4.8-2.6 3-3.2 12-9.5 2-2.6 1.7-5.1 1.3-1.7 10-5.7 8-6 2.7-3.6 0.7-2-2-5 0.1-4 3.5-3.6 3-0.6 1-1.8-0.2-5-4.7-8 0.9-1.8 5-1.8 1.9-5.4-1.8-3-0.1-3-1-1-3 0.3-3 2.2-2-1.1-1.4-2.4-0.9-5 1.3-5.9 1-1.5 1-0.3 2 2.2 2.1 0.5 2.3-2 0.4-4-0.6-1-1.2-0.1-4 2.9-0.7-0.8-0.7-10-3.6-3.2-1.6-8.8-2.3-6-0.2-5 1.6-10-2-6-1.1-9-3.6-6 0.9-6-0.4-4-2.6-4-2-7 0.3-7.8 2.7-0.2 0.6-1-0.3-1.5-5-5.5-3-1.1-4-3-7-2-5-0.3-6.8-1.6-1.4-2-1.6-5-3.5-5-5.7-3.9-6-1.2-4 2.4-2 0.4-0.7-1.7 1.7-3.7 4-0.5 0.8-1.8-1.6-5 0.2-5-1.6-3-3.8-1.6-2.7-2.4-3.3-6-2-2.2-6-3-3-0.1-4 1-8 4.2-9-5.3-6-0.6-5-3.3-5.2-6.7-4.7-4-3.9-5-1.2-3.7-2-0.5-2 0.5-1.7 1.7-0.4 2-0.9 0.6-0.7-0.6 0.5-4-0.6-3 3.5-3 2.2-4 3.2-10 0.1-8 5.8-10 1.2-5 2-2 5.9-1 4.9-3.6 3-3.2 3.1-1.2 0.9-2-1.3-6 0.2-4 8.3-5 5-6 2.5-5 1-5 3.8-6 3.5-1.6 12-1 1.6-1.4 1.2-4-3.5-7-0.2-2 1.1-3 2.8-3.7 3-0.3 2 1 0.6 2-0.4 7-3.5 7 2.1 4 2.2 2.1 7 0.8 4 2 1.8 2.1 3.2 7.3 6.7 2.7 1.8 2-2.9 6 0.1 4 5.3 18.8 3.5 4.2-1 7-2.1 6 0.2 11-1 6 0.7 3 2.8 4-0.4 5-2 3-0.6 3 0.3 4 1.9 6 2.7 2.6 6 2.3 8 5.5 10 4.5 9 8.5 3 3.9 8 1.8 5 5.9 6.9 5 2.1 3 1.6-3 2.4-0.7 0.8 0.7-0.1 2-3.3 5-0 1 2.6 3.4 7 4.7 2.9 4.9-0.3 2-1.6 1.4-8-1.5-2 0.3-2 5.8-4 4.2-1.4 2.8 0.6 7-1.7 4 0.8 4-4.8 6 0.1 7 0.4 1.2 3 0.7 4-0.2 2-1.3 0.1 4.6 1.6 6-1 3-4.7 2.8-3.1 4.2 7 8 2 6 0.1 4 1.1 2 2.9 2.9 6.9 3.1 4.3 5 0.1 2-1.3 1-2 0.2-2-0.9-1.8 0.7-0.4 1 0.7 2 1.5 1.8 3 1.6 1.2 4.6 2.8 4 1 0.5 3-1.9 2 0.1 1.6 5.3 4 2 0.5 2-0.3 5-3.5 6 1.7 6.9 11.8 18.1 5.9 11 0.1 2-2.5 6 0.7 3 2.8 5-1.8 6.3-1.5 14.7-4.6 8 0.3 8 4.7 14 6.1 8.3 1.4 6.7 1.6 1.9 20 7.4 4-1.5 9-6 8 1.7 10-5 8 0.3 7 3.3 3 5 3 0.3 6-2.7 5.1-0.7 2.9 1.2 6 4.5 3 3.6 3 1.5 5 0.6 8-3.9 10 4.5 5-2 5-0.3 5-1.4 5-3.3 3-0.3 4 1.1 3-0.5 4-3.3 3-1.3 3.2-2.7 0.9-2-2.4-4 0.5-5 5.8-7.4 2-0.2 2 1 3 5.6 2 0 1-0.8 1-4.2-3.1-2-1.3-2 0.1-3 1.2-4-0.2-3-1-2-2.2-2-0.7-2 2.4-5 0-6 6.8-12-0.6-5 1.1-5-0.5-7 1-4-1-2.4-4.4-3.6-1.6-4.1-1 0.2-2.5 3.9-2.5 0.9-6-2.8-2.7-4.1-0.2-2 1.7-5 5.6-6-1.1-7 0.9-8-2.6-4-0.9-4 0.5-3 2.2-5-0.4-3.6-1.9-3.4-2.9-2-3.2-0.6-2 2.1-1 0.1-2-4.9-3-0.8-3-2.2-5-0.2-5-3.3-3.5-3.2-3.5-6.2-6-3.7-1.3-4.1-1.6-2-9.1-4.2-2-1.8-2.5-5-0.7-3 0.6-6-1.4-5 2.5-5-1-9 1.4-12-0.4-2-2.5-3.3-0.2-2.7 3.2-7.5 8.1-8.5 1.8-10 1.9-4 1.2-7 3.9-6 7.7-7 1.9-5 1-1 4.8-2 3.7-3.7 2-0.6 1 0.4 2 2.8 5 1.6 3 3.5 4 0.1 9.4-3.1 19.6-18.2 5-8.8 5-1.6 8 0.2 6-6.7 1-2.7-0.9-2.2-6.1-2.9-2.2-3.1 1.2-4.1 3.7-6.9 2.3-0.3 6 1 7-3.6 6-0.3 2.6-1.8 3.3-6 7.1-3 3 1 3.7 5 2.3 0.2 5.3-2.2 7-8 2.7-1.2 5 2 4.3 14.2 5.2 7 1.3 9-0.9 5 5.6 12 1.7 2 2.8 1.5 14 3.5 6 2.9 5 6.1 12 4.4 3.6 2.6 3.4 1.5 5 4.3 9.2 3.2 7.8 1.1 5 2.2 7-0.4 2 0.7 4.2 3.4 1.4 2 0.6 2-0.9 3 0.7 2 2 1.3 3-0.9 2 0.4 3 3.6 4.2 2.6 0.6 1-0.1 5-1.7 3.3-4 2-5-0.4-2.2 1.1 0.2 2 4 4.4 2 0.8 3 0 0.8 0.8-0.7 6 1.9 4.4-6.7 2.6-1 3 1.6 3 3.1 2.3 4 0.8 10 0 2 0.8 0.3 1.1-1.9 4 1.6 1.8 3 0.2 5-2.3 2 0.4 1.7 1.9 3.4 7 1.7 7-0.5 10 1.3 7-3 11 1.2 4 2.8 5-0.1 6 5.7 4 2.8 3.4 2-0.3 4-3.2 5 0.1 2.6 2 3.5 5 8.9 1.5 5 1.5 3 4.3 6.1 6.7 3.4 7 4.7 3 1.4 2 1.5 7 0.2 4-1.1 5-2.9 4-0.3 1.9 5 0.2 5-1.5 8-0.4 4 0.9 3.2 2.9 1.8 6 1.1 9 2.9 2.5 6 1.6-0 1.9-1 0.4-4-1-1 0.3-8.5 8.3-0.3 4 1.6 5-0.8 1.6-3.6 2.4-1.3 3 0.6 2 7.3 8.2 4 2.2 3 12.1 2 3.3 3 1.4 9-0.7 3 1.3 5-6.3 2 0 3 1 1.7 1.5 0.9 3-0.9 3 0.3 1.7 6 4.3 4 0.6 4-2 5-0.1 4-2.1 5 0.2 2 0.9 4 6.9 2 1.4 1.1-0.8-2-4 0.4-2 2.9-4 2.6-0.1 1.6 2.1 4.2 10 0.6 4-0.7 5 0.6 6 3.5 5 1.2 0.4 2-0.8 4.2-5.6 1.7-4 2.3-1 1.2 2-1.2 3 0.6 2 5.2 1.7 1.5 3.3 3.9 1 3.6 3.9 8 1.7 2 1.1 2.7 5.3 2.3 2.7 3 0.8 5-0.5 3 0.6 5 4.5 5 0.7 5 1.8 7 4.1 4.3 1.3 6.7 9.7 4 2 10.2 7.3 7 10 2.8 10.7 3.4 8.3 0.9 7 0.7 0.7 3 0.2 2 0.9 3.1 5.2 6 4M1068 688.1l-1.7-0.1-1.3-1-0.4-3 1.8-6-0.1-7 1.7-1.5 2-0.5 2 0.9 0.3 1.1-2 5 1.3 3 0 2-2.4 6M1563 886.1l-2 0.3-6-1.9-8 2.4-5-1.9-4 3.7-5.6 2.3-4.8 7-4.6 1.1-7-1.1-10 2.7-10-0.4-11 3.6-3-0.7-5-3.1-3-0.5-6 2.1-18-1.4-14 2.4-10 6.4-6 0.9-5-0.6-3 1.1-4 2.8-6.4 0.7-2.1 2-1.7 4-4.8 3.3-2 5.7-2 2.9-2 0.7-7-0.6-7 1.6-10 6.3-8-0.2-6-6.7-6-1.4-4-3.6-6-2-0.5-1 0.5-1 3-0.9 3-2.7 4-0.4 1-2-0.6-5-1.4-2.8-4-3.1-5.8-6.1-0.6-10 0.8-6 6.6-6.5 2-3.5 5-4.2 5.6-2.8 2-5 9.8-7 1.2-7-0.4-6-1.9-5-4.9-7 2-8-0.1-3-1.3-1.4-2-0.4-1.8 0.8-2.2 3.8-1 0-1.6-1.8 0.1-2 2.3-3 0.8-5 1.4-2 4-0.5 3-1.4 5 0.6 1.4-0.7 1.6-3.5 11-2.1 1.2 0.6 1.9 5 7.3 4 1.5 4 5.1 1.6 1-1.6-1.1-3 0.4-2 2.9-5 5.9-6-0-1-1.1-1-5-1.1-0.7-0.9-0.7-5 2-2 4.4-0.8 2.4 0.8 1.6 6.4 1 1.9 3.2 2.7 0.7 4 1.1 1.7 3 0.8 2-1.8 1 0.6 3 4.5 3 6.8 3 1 5 0.1 2 1.4 2.1 2.9 1.9 0.9 10-2.7 13 0.5 8-3.6 4 0.3 4-1.5 5 0.1 9-3.2 8 1.1 5-0.6 12-7.1 0.8-2.2-0.3-8 4.1-9 0.7-5 1.7-2.8 4-0.9 2.1-4.3-0.4-2-3.3-4-3.3-12 1.5-9 2.8-8 1.1-10 2.2-6 0.7-5-0.7-6-3.2-6 0.3-7 1.2-1.4 4-1.2 1.5-1.4 1.8-4 2.9-3 2.2-7 2.6-3.6 7-5.7 5 1.3 3-0.8 2-1.5M1531 692l-3 0.1-4.7-5.1-0.3-2-2.3-4 1.3-3.4 2-0.3 1 0.7 1 2.7 3 1.4 2 4.2 3.7 0.7 1.3 1 0.3 1-0.5 1M-40 718.5l2 1.5 0.8 2-1.6 8 3.8 6.8 7 2.3 4.6-3.1 2.4-0.1 1.5 1.1 1 3 1.5 1.8 8 2.7 4.2 5.5 3.2 2-0.1 1-1.3 1.1-5-0.1-3 1.4-4 0.7-3 1.7-3-0.1-5-2.4-5 0.6-5 3-4 0.5M1380.2 728l-0.3-2-1.9-2-2-0.2-1.2 1.2 0.2 1.6M1386 797.1l-1.8-1.1-1.5-3-3.7-1.9-6 2.4-4-1.1-4-3.4-3 2.5-2 0.7-3-0.2-2.2-1-0.7-1 0.4-3-0.5-1-3.9-3-4-9-3.5-4 1.1-7 2-4-4.3-7-0.2-2 0.8-1 5-0.7 9 4.8 5 0.3 4 3.9 7.5 4.7 0 2-3 6 0.8 2 1.7 0.6 5-1.1 6 1.9 1.3 5.6 3.5 3-0.1 4 0.7 2-1.8 4 1.1 4M82 822.4l-1.2-0.4-3.8-4.1-5 0.2-2-1.1-1.6-2-0.8-3 0.4-2.2 2-2.1 6.9-1.7 5.1-3 1.4 1-0.4 3.2-3 2.6-0.2 3.2 1.2 2 2 1.2 1.6 2.8-0.6 2M1388.2 824l2.3-6-0.5-1.9-1-0.4-5 2-1.1 2.3 0.6 2 1.5 1.6 2 0.9M1400.8 829l2.2-3.4 4.2-2.6 0.4-2-1.6-1.9-6-0.3-4 4.5-5 2.7 5 3.7M1403.9 855l2.2-4 0.5-3-0.2-2-1.9-4-3.5-1.8-6 0.5-9-8.9-5-0.5-3-1.2-4 0.5-2 1.1-5.4 5.3-0.1 1 1.8 3 2.7 2.3 4 1 8 4.3 5 0.5 4 1.4 8 5.1M938 840l-2-0.3-1-1.1-0.6-1.6 0.6-2 5-2.8 3 0.5 1.1 2.3-0.3 2-0.8 1.1M1116.8 1193l6.2-1.1 11-3.7 10 3 8-0.4 2.5-2.8 0.3-6 4.3-13-3.8-7-1.6-8-3.4-8-4.3-6-1.6-7-6.5-8-4.9-4-3-5-0.4-3 1.4-6-0.4-5-0.9-3-3.7-5.8-6-6.7-5.3-2.5-3.4-5-2.3-1.5-2 0-3 3.7-2 1.2-3 0.4-3-1.1-6-8.4-3-1.8-3-4.3-12-2.4-6.4-4.8-6.6-7-10-3.8-8.1-6.2-6.9-6.7-6-2.4-1.4-1.9-1.9-9-5.5-10-4-4-1.4-5-3-4-2.1-6-1.7-1.3-6.9-1.7-5.1-2.3-4-4.2-4-7.5-4-4.5-4-3.1-2-0.7-4 0.5-7-2.9-1-3.2-0.3-6.1-3.7-4-4-1.7-4.7-3.3 0-1 2.5-3-0.8-1.8-5-0.4-8.3-6.8-5-8-4.7-3.3-5-7.2-3-2.2-1-5.3 1-1.4 3.8-2.6 1-2-2.1-5-4.7-2.6-3-3.3-4-2.3-3 0.8-4 3.8-4-0.2-1.4-1.2-0.2-6-2.5-3-0.3-4-1.9-4-0.7-4 0.9-1 3.1-0.5 7.4 1.5 0.7 1 0.6 4 1.3 2-0.2 4 1.2 0.7 2-1.2 0.5-1.5-1.2-2-0.4-4-1.3-3 0.7-2 2.7-2.6 6-1.6 11-8.6 9-3.1 7 0.6 9-0.9 2 0.6 1.7 1.6-1.6 8 0.9 2.9 2.5 4.1 0.2 7 2.3 3.2 6 4.7 8-0.9 5-2.5 4-0.5 9-3.5 13 1.1 6 2.4 3 2.8 5 0 8 2.7 7 0.5 13 5.3 3.2 3.7 1.8 5 1.9 3 3.1 3 4 2.1 5.7 7.9-0.2 3-4.5 6 0.8 3-0.8 4 0.3 4 3.7 9.1 10 8.8 7 1.6 5-0.6 6 1.4 4.9-3.3 6.1-2.9 6 2.2 8-0.2 3-4 18-4.8 5-2.6 4 0.9 6-5.2 2 0.4 4 2.6 5-1.1 6.6-7.3 3.7-13 0.8-7 2.9-1 6 1.2 4 1.8 2-0.7 3-5.3 6-3.7 2-2.3 2-3.9 1.3-5.1 2.7-4.8 2-2.3 4-2.4 1-6.5 2-4.1 7-2.7 5-1 4 4 4 0.8 1.6 1 2.4 4 0.4 2-3.7 16 0.1 6 2.6 7-3.4 4.3-3.5 6.7-0.3 5 1.3 3 0.6 5 4.2 8 3.7 4 1.1 5 5.9 3.1 5 4.3 0.8 1.6-0.8 1.2-4 0.5-2 1.7-2.1 5.6-3.9 7-7.2 2-1.7 5-0.4 5-2.1 7-1.6 1.9-5 2.2-3.2 2.9-0.8 3 1.6 6-3 7-0.2 5 4.5 15 1.8 3 8.3 8.1 15 8 3.1 4.9 3.5 3-1.7 3 0.1 1.4 3 1.8 3 3.8-1 3.2-4 5.4-7 1.4-2.7 3-0.3 2 1.5 14 0.9 3 2.2 2 3.4 1.6 6.6 1.4 0.7 1-0.9 3-3.4 3 0 2 2.7 7 2.4 4 1.3 7 1.6 1.9 5 2.7 1.4 2.4 0.2 2-1.5 3 0 2 2.7 8 4.6 10-0.1 4 0.6 2 5.1 3.9 2.6 3.1 4.4 2.5 9-0.8 10 3 4.8-2.7 4.2-4.8 2-1.1 7 0.7 6-0.9 4 2.2 2.8-0.1 3.7-3 0.5-5 1-2.1 7.4-4.9 6.6-0.7 3 2.5 0.8 2.2-0.1 4-1.4 4 0.7 1.8 1 0.3 5-3.1 8-0.5 3 4.5 3 1.9 2 0.1 6-2.5 3 1 5 3.5 7 0.2 2.5 3.8 0.4 2M860 868.1l-6-1.2-1.2-1.9 0.7-2 6.5-2.2 2 0.6 1.2 1.6 0.6 3M939.8 914l2.2-2.6 6.5-1.4 1.7-2 0.4-2-1.6-2.4-6-5.6-2-0.8-4-0.1-3 1-2.7 2.9-0.3 2 2.1 6-1.1 2.3-1.7 0.7 0.7 1.2 6 1.6 2-0.1M392 968.8l-2-0.8-1.9-2 0.9-2.7 1-0.8 1.4 0.5 1.4 2 0.4 2M731.4 1020l3.3-3-0.4-2-3.3-3.3-4 0.5-2 2.8-0.2 4 4.2 1.6M945 1061l-8-1.7-2-2.3-1.4-6-2.6-5.4-8-4.8-9-2.4-4-4.1-0.4-2.3 2.4-1.2 4-0.3 9 4 11 1.6 8.8 3.9 1.3 2 0.2 6 2.3 5 0.2 2-0.7 5M1304 1052.1l-4 0.1-0.1-2.2 1.1-1.9 1.3-1.1 6.8-2 0.7 3-0.8 1.9M1289 1064.1l-3 0.2-2-1.2-2.4-3.1 1.4-3 2-1.3 12-0.5 0.5 2.8-1.1 3-2.4 1.6M1278 1073.2l-2.6-2.2-1-5 0.6-0.6 7 0.3 1 1.3-0.8 3-1.5 2M1450.2 1193l3.5-4 5.6-12 6.2-8 8.5-6.8 3-0.4 7 3.6 3 0.3 4.9-2.7 4.1-5.9 6-1.5 2 1.3 3 4.2 8.7 2.9 0.6 1 0.7 5.9 2 1.8 1.3-0.7 1.7-3-2.5-5 1-3 4.5-2.3 7 1.4 3.1-1.1 2.7-8 5.5-7 0.5-2-5.8-7-0.2-6 2.2-3.1 7-5.2 1.8-3.7-0.2-3 0.9-6-1.5-1.7-3-0.6-2.2-1.7-0.5-2 0.8-3 5.9-9 11.9-10 1.3-3 0.8-5.8M1291 1162.5l-2 0.4-5.4-4.9-0.6-2 1-2 2-0.9 7-0.2 4.2 3.1 1.2 2-0.2 2-5.2 1.2M854.9-40l-1.9 6 0 3 1 3.5 2.2 3.5 0 3 3.8 3.1 0.1 2.9-2.1 2.9-3 1.1-6 5.7-5.8 7.3-4.2 7.1-8.1 7.9-2.6 6-5.3 5-3 1.2-11-2.2-5 1.1-4-0.6-3 0.4-4-2.7-7-0.2-10 6.2-3 1.1-1.3 1.7-0.1 2 1.3 2 4 3-0.9 2.8-6 1.5-4 0.1-2.8 1.6 1.5 6-1.6 5-4.1 1.3-2 1.8-7 0.3-4 1.6-4.9 7-2.5 6-4.4 6-3.2 6-5 5.3-4 2.2-10.2 7.5-0.6 2 2 6-1.2 6-2 1.5-6 1.5-2.8 2-3 7-2.2 3-1.4 9-2.9 4-0.9 6 0.9 8-3.7 5 1 6-0.7 12-2.1 4-0.7 4-5.5 2.3-19-1.9-8 2.9-9.5 7.7-5 10-1.5 7.3-11.4 13.7-0.1 2 4.2 8 0.3 5 1.5 3 1 5-0.5 3-7.2 5-1.8 4.1-1 0.7-5 0.1-3-1.9-2-3 0.6-6-0.6-2-1.9-2-2.1-1.1-7-1.3-5-3.4-5-0.2-1.3 1-1.7 3.3-3.1 2.7-1 2 4.7 7 0.2 1-1.2 3-1.6 1-4-0.2-3 1-15 8.7-2.5-3.5-3.5-2-1.7-2 0.4-12-3.3-9-5.1-5-2.4-4-4.7-5-2.2-0.8-4-0-1.7-1.2 0.3-4-2.1-6-1.4-2-3.1-2.2-4-1.5-5-4.3-1.7-4-0.1-5-3.1-5-1.1-4.7-3-2.3-5-2-8-6.1-1.6-3.9-2.4-13-4.2-4-3.3-7-5.5-6-1.2-7-2.7-4-1-5-4.1-4.3-5.2-3.7-5.8-8-1.4-3-0.3-5-1.4-4 0.6-5-0.4-5-3.3-7 0.2-6 3-9-3.2-4-3.9-3-1.2-3-0.4-6 0.7-4-1.5-6 2.4-5-3.4-2-1.1-2-5.6-6-9.8-7.9-4-2.3-2.8-6.8-5.2-8-4-3.3-5-0.9-3.4-1.8-1.1-2-0.4-4-1.1-0.8-4 0.6-7 3.3-6-1.9-9-0.9-5-1.3-12 4.1-7-0.6-6 1.1-17-6.7-6 0.2-7-1.5-5-2.3-9-0.7-2-1-1.8-2.6-2.5-7-2.5-4-3.7-14M1202.5-40l-3.5 2.9-9 0.6-2 1.3-7 9.5-0.3 2.7 1.6 5-0.8 3-6.5 10-2 1.3-3 0.5-6-0.9-5 1.5-3 0-7.5-4.4-4.5-4-7-0.2-6-2.8-5 2.2-1.1 3.8-1.9 1.8-7-0.1-8-2.2-5 0.1-5.9 1.4-1.6 2-0.7 5-3.4 4-7.4 2.2-3-0.4-4 3.5-7 0.7-2-1 0.9-4 0.4-8-1.9-5 0-2 4.6-8.6 2.7-2.4 3.3-1.3 1.9-1.7 3.9-7-0.1-5 1.3-4M1563 495.2l-5 1.2-2-0.8-4-3.3-5 0-4-4.6-3-1.9-5-0.1-11 3.4-7-8-4-0.4-6 1.8-2.9-1.5-3.1-5-0.3-6-0.8-2-5.9-8-6-3.5-1.7-2.5-0.3-14-3-5.2-5.3-5.8-2.7-1.8-3-0.5-5 0.8-3.2-2.5-1.6-8 1.4-8-3.9-7-1.1-8-2.4-5 0.6-8-2.8-7 0.1-8 0.8-2 4.1-4.3 2-0.3 3 0.7 2-1.1 4-5.6 6.1-5.4 2.9-3.6 4.9-3.4 5.1-5.6 15-5.9 7 3.3 5 0.2 13.3-10 3-8 3.7-3.2 6.6-10.8-0.2-6-2.6-6-1.9-7 1.4-8-0.7-21 0.4-1.6 1-0.7 7-0.8 1-1.5 0.2-3.4 2.6-5 1.6-7 0.2-3-1.2-5-1.2-2-7.2-6.4-15-7.7-5-5.4-6-1.9-7.5-5.6-3.5-1.2-11-0.5-5 0.5-8-1.6-6.1-12.2-3.7-5-2.1-6 0.8-8-3.6-5-4.3-11-3-3.6-5.7-2.4-1.4-2-0.3-2 2-5 0.3-4-0.7-2-3.4-4-2.2-10-1.6-1.6-8-4.4-4 1.1-5-0.6-4 0.7-2 0.9-4 3.7-1.8-0.8-1.2-1.5-2 2.1-0.2 1.4 4.2 3 2.9 5-0.1 2-3.8 3.1-11 0-1.9 1.9-2.7 5-3.4 2.3-2 0.1-4-1.8-8 0.6-7 2.6-7-1.5-2.8 1.7-7.2 9.6-6 4.9-10-0.6-7-2-2 0.4-4.3 4.7-2.7 1.4-3 0.1-4.3-3.5 2.5-2 11.8-3.3 9-7.4 6-3.9 2.2-2.4 2-6 4.8-3.4 2.2-2.6 0.2-2-1.3-4-0.3-7-0.8-2.4-3.4-4.6-0.3-2 4.2-19 2.2-5-0.7-6.4 4-2.3 0.7-1.3-1.2-10-10.4-13-4-3-7.1-2-7-4.5-6-6.8-8-2.3-3 1.4-2-0.3-1.8-2.5-0.2-2 2-2.8 3.9-1.2 0.5-2-1.4-1.7-1 0.1-2 1.9-2 0.2-5-4.7-4.1-1.8-1.1-2 0.2-4-1-3-7.4-4 0.5-3 2.9-5.5 14-2.9 5-1.9 1.8-1.7-0.4-2-2.4-3-2.2-5 0.7-3-0.6-6M1362 170.1l-1 0.5-5-2.8-2.4-6.8 0.4-2 1-1 3-0.4 2.8 2.4 1.5 4M1366 186.2l-3 0.7-2-0.7-3-3.2-1.7-4-0.2-2 0.9-1.6 5-3.2 6 3.8 2 3.7-0.5 2.3M1405 250.9l-3-2.5-0.7-3.4 0.7-0.6 2 0.8 2 2.8M1405 296l-0.6-3-4.5-10-0.1-8 1-5-1.7-8 0.2-1 4.7-4.5 1 0.8 2 5 4.2 3.7 0.6 2-3.6 8 1.2 10-3.5 6M525 456.1l-15 0.6-6-1.9-10-6.5-3-4.4-3-2.9-6-0.8-2-1-5.5-6.2-5.9-15-2.9-5-1.5-6-3.2-1.1-0.9-0.9 0.2-2 3.4-3 4.9-8 10.9-11 1.7-13 1.8-6 3-1.8 5.9-1.2 5.1-3.8 6 0.8 4-1.2 2 0.3 8 4.2 3 0.8 3 3.5 1 2.4 0.7 8 3.2 13-0.6 2-2.7 4-0.6 3-2 3.7-0.3 4.3 3.3 10.8 7 5.5 1.9 2.7 1.2 7-0.1 4 3 4 0.6 3-1 4 0 4-5.3 4M423 541l-3 0.1-5-2.1-5 1-3-0.2-5-2.8-3.9-1-3.2-3-1.8-4-5.1-3.8-3-4.1-6-1.1-3-2-1.4-7-2.6-5 1.3-11-2.3-8-5.6-5-4.9-7-4-11-6.5-4-7-0.2-3-1.2-1.6-1.6-1.2-5-3.2-5.1-0.8-2.9 1.8-4.9 7.2-7.1 0.7-4-0.9-2-5.6-6-4.6-10-1.9-17 0.2-4 0.9-2.7 2-1.7 3 0 5 3.5 5-2.5 4-4.3 13-3.8 3 0.1 2.8 1.4 5.2 6.2 3 1.9 4 7.2 3.6 2.7-0.6 2.1-4 3.2-4 6.4-0.8 2.3 0.1 9 3.8 4 3.7 7-0.6 4-4.2 3.7-1.1 2.3 0.2 4 2.1 5-3 3-0.2 2 1.8 3 5.6 5 1.4 5 7.8 7 13.4 5.7 5-2.9 2 0.2 1 1.1 0.6 2.9-0.6 7 2.5 7 1.5 1.3 9.9 2.7 3.1 3 3.5 7-1.3 6 2 6 0.3 9-2.6 6-1.9 2.3-3 1.2M1103 736.1l-10.2-0.1 4.1-6-1.9-5 0.6-5-1.3-7 0.3-7 1.3-6 0.3-10 3.5-9-2.9-9 0.6-9 1.9-6-0.3-6 2.5-10-0.4-2-1.1-1.1-5-0.7-1.8-1.2-1.7-6 1.5-8-0.3-12 0.8-3 2.9-5 12.6-5.5 11-3.7 5-2.4 4-3.1 2-0.1 4 0.9 4.9 2.9 3.1 4.1 5 1.4 9 0.6 8-4.5 2-0.4 2 0.6 6 4.7 4-1 4 0.4 2 2.2 8.3 5.9 0.7 2-1 3 4 0.6 3.6-1.6 1.4-2-0.8-3-4.5-4 1.3-3 3-2 10-0.3 1.5 1.3 1.3 3 1.2 0.2 1.8-2.2 0.1-3 0.8-1 6.3-1.7 8-4.6 3-0.2 3 1.3 5-3.6 11 0.6 5-2.7 4-0.8 4-3 2 0 2 1.2 5-2.8 5 2.6 6-0.4 5 5.1 4.8 12 0.4 4-1.2 6.1-2.5 2.9-11.5 6-2.3 3-1.5 4 0.6 3 1.2 0.6 4-0.5 7 1.1 3.2 1.8 0.8 2-0.6 2-5.4 7.5-3 1.6-2-1.3-1.1-1.8-1.9-7-1.2-2-1.8-1.1-5 1-4 3.5-2.3 3.6-2.7 1.1-10-3.2-17 1.3-8-1.8-5 1.2-8.8-5.6-4.2-1-11 5.9-6-0.4-5-2.8-4 0.3-7 2.1-2.8 1.9-4.3 5-6.9 3.1-3 8.2-5.9 8.7-4.4 10-1.1 7-3.5 9 0.2 5-2.7 5-0.2 3 0.9 5-1 5-2.3 2.1-4 1.8-5-1.3-3 0.7-9.9 7.7-2.8 6-8.3 3.6-2.3 5.4M1317 644l-3.9-1 0.3-4 1.6-2.6 6.2 1.6 0.2 2-1.4 2.8M1409 686.3l-3 0.5-5-2.1-3.1 1.3-2.9 0-1.7-1-2.3-2.9-3-1.6-5 1.2-3-0.7-5-4.7-3-1.3-0.5-1 3.7-3 2-4 1.8-2 2-0.8 4-0.2 2-1.8 1.7-3.2 0.3-3.1 10-1.9 8 3.2 11 0.9 5-2.1 3-4.9 1.6-1.1 12.4 0.5 5 1.4 4-2.2 2 0.1-1 1.8-4 1-4.1 3.4-4.9 2.3-8 5.8-6 6.4-3.4 5.5-4.7 3-2.6 6M1387 674l1.6-1 0.5-2-1.1-2.3-2-1.4-1.2 0.7-0.8 4 1 1.4M77 737.5l-2.1-1.5-0.7-3 1.8-3 5-3.4 1 1.5 0 2.9M47 753l-3-0.8-4 0.4-0.7-0.6 0.2-1 5.5-4.4 4 0.2 3.2 1.2 1.2 1-0 1-3.4 2.3M-40 1066.1l3 0.6 7-1.2 4 0.9 5 2.2 6-0.5 9.4 0.9 1.2 2 0.3 4 4.9 9 5.2 5.5 5.8 1.5 1.3 6 1.2 2 7.7 4.6 7 7.6 8 5.4 7 0.9 11-2.5 8 3.6 3 4.7 6 2.1 6.4 6.6 0.5 2-3.9 4 0.1 2 8.8 8 2.1 0 0.9-2-2.3-12 0.3-3 7.1-6.1 9-1.7 1.5-1.2 0.9-2-0.4-2-6-1.1-4-2.5-0.7-1.4 0.7-1.1 6-1.7 9-4.3 6-0.1 1.2-0.8 1.8-4.3 2.4-2.7 0.2-6-1.6-3.9-4.1-3.1 0.2-6 1-2 4.9-2.6 4 0.9 9-0.2 3 0.9 3-1.3 2-1.7 2.1-9 4-5-1.1-4.3-3-5.3 0.7-5.4 11.3-13 2.1-6 4.9-3.9 10.5-12.1 5.5-3.3 2.1-7.7-1.2-5 0.2-2 3.9-5.9 1.5-6.1 3.5-3.1 4 2.4 4.4 6.7 8.6 7.3 3.1 7.7-5 11-0.3 6-1.7 7 0.3 3 2.4 5 0 6 3 16 0.5 10-2.1 6 2.2 7 1.3 2 5.8 5 2.8 9 6.3 7 4.4 3.4 7 1.6 2 1.2 1.3 2.8 1.5 7 4.8 5 3 6 2.4 2.4 7 2.5 4-0.2 4-1.3 2-1.4 1-4 1.4-2 4.2-3 3.8-4 2.6-0.7 6 1 4 3.6 8 2.1 7 3.8 2-0.1 4.7-5.7 2.3-1 5 1.4 5 2.4 4 4.1 6 3.4 5-0.7 5 0.3 7-1.3 4.7-7.6 3.3-3 1.3-3 1.7-1.5 2 0.6 4 3 9 1.7 5-3.8 6-2.1 4-2.7 4-0.4 3-1.2 2-1.7 1.7-5.9 2.3-1.6 6-1.9 5-5.5 2-3.8 5-4.9 3.5-5.3 1.3-5 4.1-9-0-6 1.7-5 0.7-9 7.3-12 6.3-14 0.2-7 2.3-4 0.8-5 2.5-4 0.2-2-11.9-15.6-2-3.7-3.5-3.7-0.2-3 2.7-4 0.3-2-1.9-4-5.4-6 0.9-7-2.9-6.9-7.8-8.1-6.3-9-5.3-4-2.1-3-1.1-11 0.2-6-1.1-3-2.8-4 0.2-3-0.8-2-3.1-0.1-5-2.8-4 0.2-2.2-1.3-1.4-2-1.1-5-6.5-7-2.7-6-2.1-1.8-2-0.6-3 0.3-1.5 4.1-1.5 0.8-4-1.2-1.1-2.6 0.4-5-1.7-5 10.4-8.2 2-0.4 4 0.7 5-3.1 5.3-1 1.4-2 0.4-7 1.4-3 4.5-3.1 8-2.3 2.1-3.6 5.6-5 2.3-5.4 11.8-6.6 4.8-4 3.4-9 13-7.2 13.8-3.8 6.2-4.3 3.5-4.7 5.5-0.9 12 6 5 0.7 5 3.3 1.9 4.9 3.1 2.1 4.1-1.1 3.5-3 1.4-0.4 6 3.8 6-0.5 5.6 2.1 4.7 4 2.4 5 4.3 3.6 8 4.6 6 0.2 3 0.9 7 4.7 6-1 6 1 1.8 2 1.5 5 5.7 4.3 7 3.9 4.1 8.8-3.8 13 1.8 6-4.8 11-1.4 22-5.9 8-0.3 2 2.2 5 4.1 5.9 9 3.1 6.6 4 6.4 7.3 7.8 6.7-0.3 4-2.1 4-1 5-3.4 7 0.5 8 1.5 2.1 7-0.3 4 1.5 1.7 1.7 1.3 3 4 2.7 5.1 5.3 1.6 5-2.4 11 0.5 2 2.2 2.4 5 3 2 0 2-1.1 1.1-1.3 1.6-5 5.3-2.5 3-3.2 1.4-3.3 0.4-6 3-5 1.2-0.3 5 1.1 0.5 1.2-0.6 4 2.5 4 0.4 2-3.3 10 0.8 1 4.7 0.8 10 10.8 2.6 5.4 1 4-0.5 6 0.4 8 0.7 2 4.8 2.6 5 0 1.3-1.6-0.3-4.6 2-0.8 2 1.3 1.2 3.1-0.5 2-2.3 3 1 6-0.5 3 5.1-0.9 4 4 3.3 0.9-0.4 6-2.6 5 0.7 1.7 4.9 4.3 3.1 1.6 5 0 4 1.4 11 7.8 11 1.1 15 4.9 9 7.2 8.9 6 5.1 4.7 4-0.7 5-4.4 7 0.9 4.4 5.5 9.6 9.5 1 5.5 2 2.9 4 2.6 5 0.8 5 4.5 10 15.4 3 2.9 9 1.6 8-3.2 1.5-1.5 0.4-2-0.5-1-3.1-2-0.1-2 1.8-2.7 3-1.3 0.8 1 0.3 4 2.9 1.9 2 0 5-2.3 7 1.7 2.1 1.7 3 5-3.5 6 1.5 6 0.6 6-0.4 3 1 2 2.6 2 2.1-0 8-4.7 2 0.6 4 2.8 3-0.9 3.1 4.2-0.2 2-1.8 4 0.5 3 2.4 2 9 2.6 3.4 4.4 2.1 7M1563 870.6l-4-0.1-6-1.7-10 5.6-8 2.3-5-0.5-9 4-3-0.2-6-2.4-3 0.4-6 2.7-6.2 0.3-5.8 5.4-3 1.5-5-1.9-4-4.7-9-2-5-3.7-4 0.3-8 4.7-5.9-0.6-4.1-3.4-5-1.8-2 0.4-3 3.4-2 0-3.8-2.6-3.2-5.8-7.5-3.2-0.8-3 1.3-4.2 2-0.7 4 0.6 5.3-3.7 1-2 0-4 4.1-6 0.4-4 2.2-4.8 2-1.1 7-1.7 9-0.7 4-1.4 6 2.1 6-0.3 3-0.8 5-2.5 3-0.6 14 1.7 12-3.2 4-1.9 5-0.5 7-2.9 14-3.7 4 1.3 3.4-6-0.4-2 1-0.3 3.6 5.3 3.4 2.3 8-1 3-2.8M1394 900.1l-3 0.2-3.9-1.3 0-3-3.2-3 1.6-3 1.2-5 2.5-1 7.8 1 3 1.2 6-1.9 1.7 0.7 0.7 2-0.5 2-8.3 5-2.6 4.2M1369 919.1l-2-0.3-2.4-6.8-4.4-7-0.7-4 0.5-1.6 4.3-5.4 4.7-3.3 3-0.3 8.8 3.6 1.1 5 2.8 2-5.7 8.3-5.7 6.7M1190.7 1193l-0.4-5 2-3 0.7-4-0.4-3-1.6-2.2-6-2.2-6 0.2-2.1 3.2-1.9 1-5 1-2-2 0.8-3 2.2-2 6-0.2 0.5-0.8-0.4-4-3.1-2-4-5.2-3.4-2.8-0.6-5-1.9-5-4.1-5.3-2.5-4.7-4.2-14-3.1-6-7.2-4-0.5-3 2.4-9-0.6-3-4.4-3-3.9-4.6-7.1-6.4-2.9-7.1-3.2-3.9-2.5-9-3.2-4-2.4-7-3.7-3-11-5.2-11 0.5-4 1.3-8-4.5-6-1.1-6.1-4-1.6-7-6.3-0.8-6.4-4.2-1.2-2-1.4-7-9-5.3-5.5-5.7-2.4-6-6.9-5-3.9-6-5.3-5.9-4.4-4.1-4.8-3-1-4-7.1-7-5.2-8-1.3-6-5.2-7-2.8-10-7.2-5.5-3-0.9-1.8-1.6-0.8-2-0.2-5-2.2-4-2-8.9 0.1-3.1 0.8-2 5.1-2 5 1.8 6-1.4 5 0.4 4.4-3.8 8.6-2.2 6.3 2.2 2.3 11 2.4 3.3 5 1.9 5 0.2 6 2.6 6-0.2 2.9 1.2 0.5 1-1.4 6 1 3 5.3 5 6.7 0 1 1.2 1.3 4.8 5.3 7 0.9 3 0.2 10 3.4 6 5.9 5.4 7 3.4 3 0.6 10-2.4 6 2.1 3 0 18-6.1 22-3.5 6-2.7 9-2.6 4-2 11 0.6 1.8-0.8 1.1-2 1.1-0.6 4 1.3 2-0.4 9-8.4 6.5-10.9 2.8-2 5.7-2 4-3.3 5-1.4 2-1.3 1.5-2 0.5-3 3.5-5 1.4-6 1.1-0.9 1.7 0.9 0.6 3-3.5 5-1.9 6 0.5 7-4 6 2 8 6.6 3.9 6-0.6 1.9 0.7 1.1 2-1.3 3-0.1 2 1.6 4 2.8 1.7 5 0.6 1.3 0.7 0.3 1-3.6 3.9-9 5.2-5 6.2-6 4-4 4.9-5.1 1.8-2.5 4-0.6 5-1.8 1.3-3.7 0.7-4.3 4.1-5 6.1-0.7 3.8 1.3 6 3.4 6.9 3 0.6 4-1.4 7 2.6 5 4.1 6.5 8.2 1.5 6.2 5.1 6.8 7.2 7 1.7 7.7 5.3 3.3 0 1-3.9 4-0.9 5-3.6 11 0.9 9 4.2 13.2 2.7 2.8 5.3 3.2 2.8 3.8 0.2 6.6 4.9 18.4-0.1 2-1.7 3 0.4 1 3.5 1.6 4.2 3.4-0.1 6 0.9 4 1 2 3.2 3 0.1 5 4 6 0.5 4-1 4M503.2 1015l1.8-1 1.5-2-0.1-2-1.8-4 3.5-5 4.7-3 0.6-3-1.1-7-4.3-3-6-0.6-0.6 0.6 0.9 4-3.3 5-1.6 4 0.7 2 3.5 4 0.2 2-3.7 2-0.5 1 2.4 5.3 1 0.9M484.7 1035l3.8-2 7.2-2 5.1-3 0.6-2-0.8-6-1.6-2.7-3 0.1-6 2.4-7-0.1-3 1.3-3.9 3 2.7 9 3.2 2.3M131 1067l-1-0.9 3-5.5 1 0 1.3 4.4M131.2 1096l1.2-1 0.6-2-1-2.5-7-0.6-2.1 2.1-0.4 2 0.6 1M1518.2 1193l12.8-11.2 7.2-3.8 1.6-2 2.2-5.3 3.7-4.7 5.3-3 3-0.1 1.1-0.9-0.9-13 1.8-5 0.9-6 2.4-5-0.1-2-1.5-4 1.7-11 3.6-6.2M833.3-40l0.5 3-0.8 3.3-1 1.8-4 2.2-2.2 2.7-1 3 0 5-1.8 4-4.4 4-5.6 7.7-2 0.5-4-1.3-6-0.7-2 1.3-4 4.7-5 2.5-7 0.4-7.4 2.9-3.3 3-2.3 0.9-6-0.9-3 0.3-7 5.9-3 0.7-6-0.5-7 5.1-4.1 4.5-0.5 6-3.4 9.6-2 1.5-9 1-2.8 1.9-1.4 3 0.6 6-0.9 4-2.2 4-1.3 1.2-5.5 1.8-6.9 10-12.6 7.6-3 9.2-5 5.5-6 3.1-4-1.8-4 2.2-12 3.5-4-1.6-2 0.2-4.1 4.1-6.9 3.9-9 3.8-7-2.1-1 0.2-0.4 2.2 1.4 4 0.7 5-0.5 7 0.9 5-1.1 1.8-6 0.4-3 1.1-2-0.3-0.8-1-0.2-3.1-2.2-3.9 3.1-5-0.7-5-2.1-3-2.1-0.6-6 1.8-6 2.9-6-1-5 0.3-6 3.4-4.6 1.2-1.7 3-0.4 3 3.1 4-0 1-2.2 2-0.3 3-0.9 1.1-5 0.4-4.8-1.5-3.2-2.8-1-3.2-1-0.1-15.5 6.1-7.5 5.7-4 0.6-6-1.2-2.8-2.1-1.2-1.8-2.1-11.2-0.3-8-3.6-0.3-2.3-2.7 1.8-11-1.8-5-3.7-4 0.9-9-2.9-3.8-6-1.8-2.2-1.4-0.6-2 0.3-3-1-3-0.8-6-1.7-2.5-7.1-6.5 1.3-10-1.3-5-0.1-5 1.3-7 1.9-4-0.3-4 1.1-6-0.9-10-1.5-7-1.4-2-11-6.6-5-4.9-8-1.8-6-4.5-5 0.5-2-0.6-9-9.7-11 2-9.9-5.4-5.1-1.9-6-0.9-6-2-11-1.4-4 0.6-9 4.7-6-0.2-8 1.7-6-0.1-4-0.8-5.9-2.7-16.4-3-2.8-2-2.4-4M1563 203.4l-3-2.8-10-2.1-8-4.5-5.5-8-1.6-5-1.5-2-4.4-3.6-6-2.7-11-0.3-9.6 6.6-3.4 0.9-2-0.5-3-10.4-0.3-8 1.3-2 2.9-2 0.5-3 1.8-3 3.8-1.5 1.6-1.5 0.6-2-0.4-3-6.9-14-0.7-6-1.2-2.2-3-0.8-3 3.1-4 0.6-4-1.1-2.9-2.6-1.4-8 2.9-7-0.1-1-1.5 0-5.2 2-1.6 6-4.2 3.3-2 0-1-1-3.8-9.3 0.4-2 2.5-3 1.6-4-0.3-2-2.4-2.4-0.5-1.6 0-10-1.4-10-1.1-2-5-3-9-1.6-8 0.9-5 4.6-5.5 1.1-1.6 3-2.4 2-9.5 3.7-5 3.7-5 0.9-6.9 9.7-5.1 10.7-5 2.4-4.5 0.9-5.5 4.5-3 1.2-0.9-0.7 4.3-7-0.6-7 0.6-3 8.3-7 3.1-4 0.3-2-1.5-5 0.5-8-4.4-12-0.8-6-5.5-6-0.9-6-3.5-3.7-1.1-5.3-4.5-4-1.8-3 0.5-2 5.6-3 1.3-4 3-2.8 4-0.7 1.7-1.5 0.5-3-3-4-0.3-2 1.1-3.5 2.5-3.5-0.2-1-3.3-0.5-3-1.7-5.5-6.8-5-8-2.6-11 1.3-4M492 103.1l-1.4-2.1-0.1-2 1.5-1.3 2-0.5 1.5 1.8-0.3 2M650 148.2l-1 0.4-1-1-0.8-3.6-2.8-5 1.7-4-1.6-4 0.5-1.2 1.6-0.8 2.4 0.3 2.1 1.7 3.7 10 0.1 2-0.9 2.7M601 203.1l-1 0.2-2.4-2.3-3.9-2 0-6-2-5-1.2-6 2.6-9-1.4-9 3.6-6 2.6-10 2.1-3.8 6 3.2 3 0.5 6.7 5.1 8.3 3.6 0.9-1.6-2.7-6 1.8-1.3 3 2.3 6 0.8 5 4.5 8 0.4 3.2 3.3 2.8 1.5 2-0.4 0.2-1.1-2-2-0.3-2 3.1 0.1 2 1.1 2.1 4.8-0.4 2-1.3 1-4.4 1.4-5-0.4-11 1.6-6 2.2-0.4 1.2 1.5 8-1.1 1.3-10 1.4-4-2-3-0.1-1.3 2.4-0 2 1.3 1.4 5 1.7 2 2.3-0 1.8-4 3.2-3 0.9-2-1-2-3.2-4.3 0.9-1.2 2 0.4 5M590 216.6l-5-1-1.1-2.6 0.3-3 2.4-6 2.4-2.2 2.7 1.2 2.3 4.6 3.3 0.4-0.6 1-2.7 0.1-2.2 2.9-0.8 3.9M1563 470.3l-4-1.8-5 0.6-6-1.1-5 1.1-8-2.2-10 1-2-0.9-3.8-5-5.2-5-5-3-2.5-8-4.4-5-1.5-6-7.6-8-2-7.3-8.7-8.7-5.3-12-5.1-6-2.1-8 4.2-12.3 4-4.4 5.8-3.3-0.2-6 1.4-2.6 2.6-2.4 4.4-2 6-4.3 4 0.1 7 2.4 15-2.8 10-7.8 13.2-15.6 2-7 3.8-2.8 4-4.9 3.2-2.3 0.8-3-2.3-6-0.4-6 0.8-2 3.9-4.3M1244 612.2l-3-1-1.4-1.2 2.4-1.2 4.6 0.2-0.7 2M1123 693.1l-3-0.7-0.1-4.4-3.5-8 0.3-2 3.2-5 0.7-4-1.2-9-4.6-7-0.6-5 1.8-5.3 3-3.7 4-2.2 5-0.6 2.2-2.2 1.4-4-1.1-5 0.8-7 0.7-1.1 3 0.3 3-1.2 2.5 1 2.5 3.6 6 1.7 2 1.2 0.9 1.5-0.1 3-3.8 5.2-5 1.3-1 1 0.6 4.5-1 4 0.8 2-2.6 9-1.3 2-4.3 3-1.6 2-0.8 4 1.2 6-0.2 3-1.8 1.8-4 1.3-1.8 1.9-2.6 8 1.4 3-0 1.1M485 936.1l-11 0.6-7-7.8-6-0.6-4-2.7-14-3.5-9.2-9.1-1.1-2-0.4-3 0.5-5 3.4-5 4.4-10-0.6-2.1-3.9-4.9-0.3-3 1.2-2 3.5-3 0.8-3-1.3-5.4-2-1.1-3-0.4-2.2-2.1-0.9-6 1.3-9-2.4-4 0.2-2.9 4-5.6 4-10.3 3.6-4.2 1.8-5 2.6-3 5 0.4 9-1.7 4-2.8 4-4.8 8-2.7 8 0.4 3 5 5 1 2.5 3.2 1.3 6 2.6 5 2.6 1.3 5-0.1 2.3 0.8 6.6 5 3.5 5 1.6 0.9 6 1.4 7-2.4 4-3.4 5-0.5 2 0.6 2.1 2.4 1.9 1 6-0.2 4 0.9 1.4 1.3 3.9 11 1 9-1.3 10-11.2 19-2.5 14 1.2 12-5.3 5-2.2 5-2.9 3-1.5 4-2.6 3.3-3 2-7 1.5-8-0.3-5 1.3-11-1.4M1040 954.1l-1 0.1-2-1.9-3.1-1.3-3.9-4-5-1.8-0.2-2.2 2.5-0 7.7 4M1213.7 1193l2.8-10-1-3-3.5-6 0.3-5-0.7-3-1.6-2.3-3-2.3-5.9-2.4-2.1-5.2-4 0.1 1.5-5.9-1.5-5 1.7-7-0.6-2-4.7-6 0.8-5-0.5-4 1.3-3.5-0.1-1.5-1.9-2-2-0.2-4 1.2-3.1-2-0.3-1 1.4-2 2.1-7-2.1-2.2-6-1.6-1-1.1-1-9.2-2-1.3-5-0.1-2.4 0.5-3.6 2.3-5-2.2-6.1-1.1-5.9-6.4-3.1-13.6-5-4-4.7-8-7.2-7-3-6.9-8-7.2-4.9-5.9-5.1-0.3-1.7-0.7-2.8-8-3.5-2.9-5-1.2-4 0.3-5-2.7-6 1.3-6-1.3-2.8-2.5-1.8-4-2.3-3-0.5-2 0.4-2.4 4.2-4.6 0.8-5 4-3.7 2 0 4 3.3 5 1.9 4 2.9 10 1.8 17-7.9 6-1.5 2.7-1.8 3.3-3.7 2-0.2 4 1.1 9-2.9 13-0.1 7-3.3 8-1.2 4-2.1 12-1.1 5-5.4 6 1.8-0.2 4.1-5.5 8-2.3 5-8 7.9-1.5 3.1-0.1 11-1.5 9 0.4 9 2.8 6 2.5 11 2.7 4 1.2 3 0.1 3-1.7 4 0.4 2 4.7 4.8 5.4 2.2 2.2 7 9.4 3 3.7 3 1.2 2-2 7 1.1 4-0.8 2-1.2 0.3-1.5-1.3-0-2 0.9-2-0.6-1-9.8-3-3.2 5-0.6 7 2.2 3 3.6 1.5 11-2.6 2 0.7 2.3 6.4-0.6 4 1.6 5-0.9 4 0.9 4-4.3 3.5-3 0.3-0.9 1.2 2.6 4 2.3 6.5 2 2.5 1 0.5 7-4.9 2 0.7 1.6 1.7-0.1 5 0.7 4-0.8 6-1.4 2.3-5 3.8-1.6 2.9 1.1 2 4.5 1.6 2 3.9-0.5 10.5-5.2 4-0.8 2 1 3 3.5 3.7 1.6 3.3M-40 1097.7l2 1.1 6.3 0.2 2.7 4 3 1.3 12 1.6 5 7.4 4 2.4 3-0.3 2 3.6 4 3.5 7 2.5 5 4 10.1 13 2.9 6.2 3.9 5.8 1.4 5 4.2 8-0.1 3-3.2 3 1.8 4.6 4 1.1 9 7.6 7 1.1 6 2 9 1.8 4.2-1.2 5.7-6 5.3-2 6.7-4 7.1-7.2 7-2.8 4-5.1 2-0.9 7 0.5 3.9-4.5 5.1-3.6 7-0.2 2.6-1.2 4.4-6.2 12.5-10.8 6.3-10 3.1-10 5.1-8.1 4.2-4.9 3.8-8 2-1.6 8 2.3 3 1.9 3 3.8 8 13.3 2 1 4 0.4 2.5 1.9 0.2 2-1.7 5 5 6.7 4 2.3 2.8 4 4.2 3.3 3 3.6 4 2.3 3 4.3 17 13.9 14 1.4 5-0.1 22-6.7 8 0.4 5 1.5 4 0.3 3-0.8 6-3.3 3-0.6 9 2.8 5 2.4 5 0.7 15-4.3 5-3.9 4-0.8 5 0.8 5 2.9 6 0.5 6 6.9 7 1.8 2-0.6 2-1.7-0.2-1-3.6-3-2-5 0-4 2.8-6.7 1-1.3 6.4-2 11.6-13.2 4-2.2 3-0.7 3 0.9 4 2.6 2-0.3 1.2-2.1 0.5-5 2-6 1.5-2 20.8-9.9 18-2.5 13-4.4 3.9-3.2 3.1-6.3 3-3.6 6 0.5 3-0.7 1.3-1.9 0.6-3-2.6-6 5.3-7 7.4-12 1.5-1 1.7 0 2.2 1 1.6 2.9 2-0.1 2-0.9 1.4-2.9 2.9-3-2.3-3.6-0.1-2.4 3.1-10 8.6-6-2.3-7 3.4-7-0.8-7 3.1-4.9 1 0.2 2.8 3.7 3.2 1.2 1.9 1.8 0.9 4-0.6 7 0.8 1.2 2 0.5 4.7-4.7 2.3-4.9 4-2 8-6.6 3-0.8 6 0.7 5-3 5-0.7 6.8 6.3 2.2 3 0.8 2-0.4 4 2.6 3.7 2 5.3 1.5 2 5.5 3.3 6 0.8 10 3.6 10 1.8 13 11.7 2 0.4 3-1.8 2 0.5 10.1 12.7 5.9 4.9 3 9.2 2 2.5 5-0.2 3.3 0.6 1.9 1 3.8 4.1 4 1 4 2 2-0.2 4-2 7-0.3 22 4.4 6 3.3 10 3.8 8.6 4.9 7.2 7 2.2 6 5 4.9 9 6.6 12 4.7 12 3.1 4 8 4.9 4.7 2.4 6 3.5 5-0.7 5 0.9 2.2 5 6.3 4.4 2.5 2.6 2.7 4.5 10.3 2.5 2.5 2 0.8 4.8-3.3 3.2-0.3 1.8 1.3 2.2 3.7 2 0.7 6-2.3 6-4.9 5-0.1 7.6 3.9 3.4 3.7 6.4 4.3M800.9-40l-6.4 4-3.1 3-1.2 2-0.7 4-5.5 6.1-10 6.1-7 1.4-4.1 4.4-6.9 1.4-5-6.2-2-0.2-5 3.4-3.5 4.6-5.5 3.9-9 0.5-2.7 4.6-4.3 4-2.9 9-3.1 3.6-9 2.5-4-0.3-4 1.1-6 0.3-12 4.1-9.5 10.7-3.5 5.7-3.3 2.3-1.2 2-4.4 4-1.8 4 1 5-0.4 3-6 6-2.9 4-4 3-5 6.9-2 0.2-9-2.3-3 0.1-8 4.4-4 0.4-6-1.5-2 0.2-15 5.5-12 1.4-5-0.5-7-4.3-8 0.7-4.4-2.2-11.6-10.8-6-8-6.7-4.2-5.1-6-1.6-5-2.5-2-0.1-3 1.4-6-5-7-0.2-2 1.5-3 1.1-5 3.2-3.3 1.9-4.7 6.6-10 8.6-6 1.6-2-0.7-5 0.2-4-1.4-5 1.7-6-0.8-2-3.7-3.9-6-0.9-14-4.7-4.5-2.5-4.2-4M1563 160.3l-1-4.3-4-4.5-11-3.7-3.3-2.8-2.7-7 0.7-6-3.7-11-2-2.2-4-1.3-7.5-4.5-2.7-10 0.5-3 1.9-4-1.1-1-2.1 0-1.6-2 0.9-2 3.2-2 0.2-1-1.2-3 0.7-3 7.5-4 2.3-4.8 2-2.2 0.5-2-0.5-4.2 3.4-3.8 2.4-5-0.8-2.6-7-6.5-2-0.9-4 1.3-3 0.1-3-1.6-4-0.4-7-2.4-5 2.1-6 0.4-7.5-3.5-5.5-5.5-2 0.5-3 2.1-5 1.7-2-0.2-1.3-0.6 0.1-5-0.6-1-2.2-1.1-4-0.1-9-4.2-5-0.4-8.5 1.8-2.5 3.2-3 0.7-2-0.4-1.6-2.5-0.7-4-3.1-2-3.9-9-0-1 1.5-2-0.1-2-6.2-8-2.8-14-1.5-5-2.9-5-1.4-7-3.3-2.4-12 1-9.2-7.6-1.3-3M1563 453.3l-6 1-8-0.3-7 2-2.7-1-2.8-10-2.5-1.4-6-1.2-1.7-1.4-3.2-7-3.1-11.4-4.4-3.6-6.6-2.7-4.9-3.3-8-10-6-10-2.3-9 2.2-4.4 9-7.6 2-0.8 12-2.9 6-0.3 5-2.2 8-0 3 2.3 9 1.6 1.1-0.7-1.2-2-3.9-1.4-5.4-0.6-1.8-2 0.4-2 1.8-2.3 7-2.4 3.9 0.7 6.1 3.4 4 5.2 7-0.7M510 908.2l-9-0.3-8.7-5.9-6.3-8.6-7-3.5-4-3.8-0.8-4.1 2.2-8-1.8-8-3.6-7.3 0-4.5 4 4.7 2 1.2 9 1.8 7-2.8 4 1.5 11 2.2 6 6.9 4.7 2.3-1.9 4-3.2 20 0.4 2.4 2.1 3.6 0.2 3-1.3 2.1M1159 1033.4l-7-0.6-8-6.2-9-0.6-2.2-1-3.7-5-1.5-4 0.6-4-0.6-5 2.2-3 2.2-0.8 4 0.4 7-2.6 5-0.9 9 0.8 2.3 12.1-0.4 6 1.9 6-0.3 6M529.9 1193l-1.9-2.3-6-3.1-2-4.2-1-4.4 1.5-9-0.5-9-1.1-2-3.6-3 0-5-4.7-7 0.8-6 2.6-6 1.9-7 10.6-8 4.5-15.3 1-1.5 3.2-2.2 3.1-4 1.7-7.7 4-1.5 4-4.8 3-2.1 5-5 9-5.7 3-2.7 1-0.2 4 1.7 3-0.4 7.2-8.6 5.8-2.5 2 0.4 3 2.4 2 0.6 17-1.1 4 2.5 11 3.5 7 4.7 5 5.6 5.4 3.9 2.4 4 3 8-1.8 8 2.4 9 0.6 7.4 1.9 3.6 1 4 3.1 4.1 1.9 7.9 5.1 3 2 2-0 2-3.1 9 1.4 3 2.7 2.6 3 0.4 3-1.5 1.6-1.5 1.4-3.3 6-3.7 7 0.2 4-1 2.5-5.2 0.4-5-0.9-4.7-3.2-3.3-0.3-2 0.7-2 9.3-6 11.5-10.7 6-1.5 3-1.8 2-0.3-0 5.5 2 0.3 3-1.1 3 0.8 9 4.7 8 2.4 5 2.4 2 2.3 2 4.1 9 9.9 2.8 6 6.2 6.1 4 1.5 4-0.2 5 3.7 5 1.6 5.5 4.3 7.7 8 1.8 4 2.6 3 3.2 13 3.2 5.4 6.2 3.6M591.9-40l0.2 3 2.3 4 0.2 4 5.1 10 1.4 6 7.9 9.2 3 1.9 5 1.4 3 3.1 2 0.8 2-0.2 1.7-1.2 2.7-7 1-1 1.6 0.4 4 3.7 4-0.2 1.3 1.1-0.1 2-2.6 5-3.6 15.8-2 1.5-5-0.3-0.9 1-1.1 4.2-3 2.7-6-0.7-4-1.6-4-0.2-5.6-2.4-1.4-5-6.4-6 0.2-10-1.8-2.4-4.3-3.6-2.7-12.7-2.8-6.3-2.2-1.5-6 0.6-1-0.6-3.2-4.5-2.1-8-4.3-6M1563 27.1l-5-0.8-8-6.9-6-2-5 1.7-11-2.4-4-3.5-2-0.5-4 2.3-3 0.3-5-2.7-5-1.1-6-3.1-14-2.9-8-11-11-9.1-4-2.2-4-6.2-5-3.9-3.1-5.1-4.2-5-0.9-3M581.6 1193l-2.6-1.6-1.6-2.4-1.5-11-8.4-9-2.1-4-1.2-5-7.2-2.8-1.6-2.2 2.7-7 1.2-7 7.7-6.5 3.4-4.5 2.1-5 2.3-3 0.9-5-2.1-5 0.1-2 2.3-4.1 3-1.1 5 2.6 7-0.6 3 0.8 4 6.1 1.4 5.3 5.9 5 4 7 0.4 7-11.6 15-3 6-0.9 6-2.4 3 0.7 4-1.2 6 1.6 10-0.7 5"/>
</g>
<g fill="none" stroke="#52524c" stroke-width="1.8" stroke-linejoin="round" stroke-linecap="round">
<path d="M-3 1.5l2.7 1.9 3 3.8 3.3 1.6 5 5 2 4.6 4.9 2.2 5 6.2 3.2 7.3 0.7 4.8 3.5 5.3 4.2 2.8 0.7 3.4 7.1 8.7 1.2 4.7 5.4 6.2 1 3-1 5.3 0.4 1.6 2.4 2.4 2 4.2 2.6 2.1 2.3 4.3 3.5 3.3 2.3 5.9 1.2 6.1 3.5 7.2 1.9 2.2 0.4 3.4 0.8 1.3 2.9 1.9 1.4 2.9 2.1 2.4 1.2 4.8 4.8 2.9 2.5 2.4 2.3 6.6 3.8 3.7 0.9 4.7 2.1 2.6 1.8 4.3 2.5 2.7 0.8 5.3 3.1 5.4 6.7 6.7 4.9 1.6 4.9 5.8 0.9 3.5 4.5 2.1 6 7.6 6.7 2 8.4 7.2 4.8 0.8 3.7 3 3.2 0.6 3.9 2.7 4.6 1.1 9.2 5.9 5.8 1.7 2.3 2 7.1 2.7 3.5-1.2 1.4 0.4 2.4 2.4 5.8 2.6 4.8-0.7 6 1.9 9.3 1.7 4.5 5.1 3.1 0.8 3.7 2.3 3.8-0.2 4.7 1.5 4.7 0.5 5.1 3.6 3.1 1.4 3 0.2 4.6-0.9 4.4 2.1 3-0.1 3 0.9 3.4-0.6 4 3.6 10.9 2 10.1 7 3.2 1.2 3.3 3.6 1.4 0.7 3 0.4 3.2 2.2 6 1.4 1.9-0.8 1.2-3.7-0.2-3.3-1.5-5.3 0.6-5-2-4.2-1-6.2 2-3.6 0.2-1.7-5.1-8.5-3-10.6 1.3-6.2 2.2-4.1-0.2-4.6 1.8-3 0.5-7-2.8-3.5-2-6.4-6.6-6.7-2.9-4.1-1.6-0.6-3.6 0-2.5-2.3-5.8-3-1.8 0.6-2.8 2.8-2.7 0.3-1.5-2.2-0.6-5.4-0.9-1.4-5.1-3.7-4-2-3.8-3.1-1.7-0.1 1.3-1.2 3.2-1 3.4-2.3 5.2-0.5 2.8-1.8 3.1-0.9 3.1 0.5 5.3 2.6 5.8-0.9 2.7 1.5 3 0.6 4.1 2.5 3.2-0.1 4 3.1 11.3 2.1 6.5 4.8 2.1 2.5 4.4 2.7 1.7 3.4 1.6 0.8 3.2 0.3 4.4 2.1 2.3-1.9 1.5-3.1-2.2-6.4-0.1-4.8-0.9-3.2-1.7-3-2.6-2.2-0.5-4.9-1.9-2.5-1-3.2-3-2.1-2.3-4-2-2.2-10.2-17.8-5.1-1.8-4.5-6.6-1-3.3-4.6-4.3-2.8-5.6-8.6-5.1-1.4-5.1-2.4-2-1.4-3.1-2.7-2-2.9-4.1-3.2-1.4-6.1-4.6-3.6-3.7-9.8-5.7-2.3-2.1-1.4-0.4-4.2 0.6-1.5-0.9-2.4-2.8-1.5-0.6-9.4-2-5.5-3.6-3 0.5-3.8 3.1-1.7 3-3.6 1.8-2 3.8-2.6 1.7-2.3 4-2.8 2-5.3 10.3-1.1 1.2-7.2 3.7-2 0.4-1.5-0.8-0.9-2.4 1.2-3.2-0.2-1.7-1.4-3.6 0.6-6.7 5.3-5.1 1-4.9 2.6-5.6 3.2-3.3 1-2.9 4-2.9 1.3-3.2 2.4-2.5 0.2-3.5 1.4-4.4 0.9-5.8-0.7-6.3 0.8-5-3.8-8.2-0.9-4.9M73.5-3l1.4 2.7 0.7 4.3 2.8 4.2 3.2 6.5 1.7 5.2 1.7 3 1.1 4.6 4.1 5.3 4.6 2.5 1.1 4.8 6 8 1.7 4.9 8.2 5.8 0.7 1.3 0.1 5.1 2.1 2.4 1.7 4.6 2.3 2.2 2 4.1 4.8 4.4 3.2 5.4 1.9 4.7 3.5 3.3 2.9 4 1.5 1 2.3 4.9 3.5 1.4 1.1 1.1 2.9 5.6-0.3 4.5 5.8 5.2 1.9 2.5 1.9 4.5 2.8 2.2 0.7 1.6-0 3.7 0.6 1.7-0.3 5.1 0.5 1.3 1 0.9 3.2 0.9 3.2-0.4 11.1-6.3 2.4-0.8 1.4-1.2-0.2-1.8-3.6-3.2-2.3-3.2-2.7-1.9-1.6-3.1-4.1-1.3-1.5-1.1-1.1-3.5-0.8-6.8-4.3-5-2.8-5.4-0.7-3.1-2.2-2.9-0.3-1.7 1-3.3-0.8-4.2 1.2-4.2 0.2-3-0.9-3.9-5.8-7.2-4.4-3.5-1.4-4.2-1.9-2.4-1.2-2.9-4.7-2.7-1.1-5.1-2.3-4.1-4-2.9-3.8-5.2-7-6.1-1.7-5.3-2.4-2.1-1.4-2.9-4.2-2.6-5.7-8.3-2-8.6-2.7-4M177-3l-4.1 12-2.8 4.4-0.4 3.5-2.5 2.8-0.8 7.3 0.5 2.3 1.8 2.6 2 1 3.3-1.2 3.6-4.5 3.4-3 4.4-2.7 0.3-5.7 2.7-2.4 3.3-5.9 0.6-3.4 1.7-3.3 1-3.8M-3 214.5l6.3-6.1 5.8-2.1 4.8-13.9-0.4-5.2 1.4-6 2.9-4.6-0.2-3.2 1.3-3.9-0.7-3.5 0.6-1.7 4.6-6.1 4.8-2 3.4-0 3.8 2.4 5.7 1.4 1.2 1.4 2.5 6.8 1 1.4 1.5 0.4 3.5-1.1 1.7 0.6 2.3 2.6 4.9 3.3 4.5 2 4.7 6 2.3 3.9 2.3 2 1.8 4.4 2.9 1.7 1.6 2.8 3.6 2.9 1 5.1 3.8 5.5 0.2 3-8 9.4-3.4 0.9-1.4 1.3-1.9 3.4-0.3 2 1.5 1.8 2.3 0.1 5-1.9 3.4-4.3 1.7-0.2 1.8 2.5 1 3.7-0.2 1.9-2.3 4.4-3.5 4-0.9 3.8-2.8 2.2-2.1 3-5.2 1.6-2.7 2.7-1.7 0.3-1.4-0.5-0.7-1.3-0.2-6.2-1.6-1.5-1.9 0.7-2.1 5.9-6 2.8-4 3.6-1.5 4.1-3.2 1.9-1.1 1.4-0.8 3.5-4.2 10.3-0.7 4.6-2.4 5.9-2.4 2.6-0.6 1.6 0.4 3.7-1.6 2.8-0.6 3-2.2 4.3-0.2 4.7-1 1.5-4.1 3.1-1.7 2.4-0.7 3.1-0.2 5.3-3.2 3.6-1.4 4.7-2.6 2.5-1.2 3-3.3 3.5-2.4 11.3-10.9 9.8M339.2 228.1l1.1-3.4 1.9-2.4 1.1-0.5 3.1-0.3 6.1 1.1 1.6 0.8 2.1 2.7 1.4 3-0.4 1.7-1.7 3.1 0.7 3.3-0.5 1.6-2.5 4.4-1.6 0.9-6.3-0.3-2.8-1.4-2.4-2-2.1-3-0.2-1.8M389.9 215.9l0.9-0.8 3.1-0.7 3-2.9 1.9-0.9 8.9 4.1 4.7 0.6 4.4 2.7 6.3 2.4 4.5 1.1 1.7 2.7 3.9 2.9 1.2 2.7 3.8 2.9 2.4 4.3 8.3 7.4 0.8 1.4 1.1 4.6 3.1 3.2 2.4 5.6 0.4 1.6-0.9 3.3 0.3 1.5 2.3 2.7 1.8 6.1-1.2 4.9-0.3 4.3-2.3 5.4-3.6 3.4-0.7 3.7-4.8 4.8-1.9 0.1-1.3-1.5-0.7-1.9-3.2-3.3-5.4-9.2-5.4-3.5-1.3-5.5-5.1-4.4-3.4-1.5-0.9-1.4-0.1-3.3-2-4.5 0.1-5.9-1.1-4.6-5.4-5.8-2.8-1.7-1.9-2.9-4.1-2.6-1.3-3.2-2.1-2.3-1.1-4.6-1.2-1.4-4.5-3-1.8-2.2-0.7-1.9 0.2-1.6M753.6 266.4l-1.5 3.8-2.1 3-0.6 3.6-1.3 1.5-7.4 1.6-3.1-0.2-1.3 0.5-4.2 3.6-2.8 0.8-5.6 3.2-4.8 1.5-6.6 0.1-2.9 1.7-3.4 1.1-2 2.9-4.2 2.2-1.6 3.2-5.1 4.1-5.1 1.4-7.6 8.5-4.8 1.7-2.5 4.5-4.2 2.3-2.4 2-4.6 2.1-2.8 4.1-8.8 8.3-1.8 2.5-3.9 2.6-1.9 2.4-2.9 1.4-1.1 1.2-0.7 3.6-4.2 4.3-4.3 2-2.8 4.3-4.9 4.6-2.3 4.1-0.7 5.4-5.3 2.6-4.3 6.2 0.1 1.9 1.9 6.2 4.1 3.1 2.5 2.7 0.6 1.7-3.6 1.1 3.4 2.2 5.5-0.2 3.2 1.4 3.2 0.4 2.7 1.9 3.7-0.4 1.5 0.5 6.7 5.8 1.6 0.6 4.6-0.9 4.2-1.9 2.9-2.1 1.9-0.5 3.4 3.2 0.9 4 1.2 0.9 6.2 2 1.7-0 4.5-1.6 7.8-1.7 3 0.7 5.9 2.9 1.7 0.4 1.7-0.4 4.5-5.8 0.9-4 3.9-1.1 4.8-3.9 1-0.1 0.8 0.8 0.5 1.4-0.6 4.1 0.3 2.2 3.1 5.2 1.2 4.8-1.5 5 0.8 2.8-0.4 1.7-1.8 2.9-0.5 4.3-1.1 2.8-0.5 6.5-6.5 13.2-1.1 1.1-3.2 1.4-0.9 1.1-1 3.1-1.6 2.4-0.8 3.8-3.5 2-1.2 1.3-0.7 3.3 0.3 3.1 1.6 2.8 1.6 5.1 1.1 1.5 4.6 4.2 2.9 1.5 2.4 4.5 3.6 3 1.5 2.9 4.2 2.5 3.2 3.4 6.2 4.3 3 3.5 2.3 4.3 4.9 1 5.9 2.3 2.5 4.2 3 0.8 1.3 1.1 4.9 8.3 4.7 2.6 1.1 1.5 3.9 8.2M750 328.5l13.5 1.5 7.5 1.5M748.5 333l-1.5 8.9 0.1 3.1 0.9 3 3 3.7 2.4 4.6 1.8 0.6 3.9-0 9.6 2.9 2.3 0.2M930-3l-3.8 3.5-5.7 3.9-12.1 7-3.1 5.5-0.6 5.2-0.8 1.3-3.3 1.6-3.1 3.5-4.7 4-4.5 1.9-1.1 1.1-0.5 1.7 0.3 1.7 1.9 4.4 3.4 4.9 3.3 2.7-0.5 3 2.8 6.2 5.2 2.6 0.8 1.5-0.8 3.8-1.3 1.5-1.9 0.8-3.9 0.4-3.1 1.3-8-0.1-4.6-0.7-3.2 0.8-1.3-0.2-3.1-3.2-1.7-0.7-4 1.1-0.2 1 2.6 8.5 1.9 2.5-0.3 1.4-1.2 1.5-3.4 2.1-1.4 2.9 1.4 2.2 1.4 0.4 3-1.1 3.2 0.4 5.2-0.4 2.8 1.7 7.4 2.7 8.4 1 4.6-1 1.4 0.4 1.2 1.9-1.1 4.3-1.4 1.7-2 0.2-4.5-1.7-1.8 0.9-1.3 2 0.5 2 2.3 3 0 1.6-2.1 1.8-3.3 1.1-5 2.7-11.1-1.3-4.7 2.4-3.2-0.4-1.3 0.6-2.9 3.5 0.4 1.5 4.3 0.8 4.4 2.7 3.7 4.5 4 1.7 3 2.1 4.9 0.7 1.3 1.1 2.1 4.4-0.8 1.6-3.9 1.9-0.8 2 0.3 2 3.6 9.1 5.8 7.1 0.9 4.7-0.6 0.8-1.4 0.3-3.7-0.8-2.8 0.5-2.9-1.7-8 0.4-2.6 1.8-6 2.2-4.9 2.9-0.8 1.3-0.4 5.2-3.4 5.5-4.2 2.7-1.4 3.3-1.2 1.2-5.3 0.4-10.1 5.3-12.4 0.2-4.3 1.7-3.5 0.5-1.4 2.9-3.5 3.5-0.8 1.5-1.2 1.2-3.1 1.4-3.7 5.4-6.8 4.6-1.1 1.3-1.8 5.2-4.7 2.5-2 3.1 0 1.7 1.1 1.2 1.6 0.4 3.9-0.5 9.6 6.7 5.6 2.7 5 3.9 2.1 2.6 3.4 1.5 1.1 1.2 0.8 2.8 6.8 1.2 3.2-0.6 7.2 3.6 6.8 1.1 1.8 0.8 1.1 1.5 1.3 10.5 0.9 1.4 3.2 1.3 2.7 2.7 1.6 0.9 1.8-0.1 6.2-2.4 3-0.2 1.5 0.9 2.9 4.4 5.8 3.9 3.3 1.1 2.6 2.3 1.6 0.6 3.1-0.5 2.9 0.3 6.3-3.3 2.7-2.1 1.5-0.4 5.2 0.4 1.6-0.6 2.7-2.2 3.4-4.1 4.9-1.4 2.8-4 3-1.6 5.6-6.2 0.1-3.4-3.1-10.9 0.6-2.9 2.8-3 2.1 0.2 1.6 2.1 3 2 2 3.4 5.9 1.2 4.2 2.6 1.2 1.6 1.4 0.1 1.5-1.1 0.7-4.1-1.3-7.8 0-3.3-0.7-1.5-2.8-2.4-3.4-7.8-0.3-3.6-10.1-9.9-3.5-5.1 0.3-1.3 1.2-0.3 4.6 2.7 6.9-1.5 1.7-2.8 2.6-1.7 0.7-1.6-0.7-3.7 2.3-4.5 3.6-3.6 0.6-1.4-0.3-6.7-1.9-3.9-0.7-3.8-1.8-4.4 1.2-4.6-1.8-4.4-0.7-6.3 0.2-1.8 1.1-1.7 4.8-3.8 2.2-0.7 2 3 2.5 2.2 3.3-0.1 3-1.8 1.1 0.6 0.5 2.1 2.3 3.2-0 1.8-1.1 3.3-0.3 5.3 0.5 1.6 2.8 2 8.8 3.3 4.7 4.8 1.4 2.4 1.3 0.8 1.5 0 2.9-1.4 3.5-0.1 4.4-2.7 5.9-0.9 1.7 0.5 1.4 1.5 0.7 2.1-0.1 1.9-0.6 1.3-5.6 3.9-1.5 5.4-2.6 2.7-0.1 1.6 2.6 4.1 5.3 1.2 2 4.4 1.2 1 3 1.4 5.9 0.3 5.8 6.7 3.4 6.1-0.3 1.8-3.2 4.2-2.1 4.8-0 1.7 3.1 4.1 1.7 4.7 5.5 8.6 2.1 5.3 1.8 1 6.2-1.2 2.9-2.3 1.5-0.2 3.6 0.7 5.9-5.4 2.8-1.2 8.7 3.1 4.3 4.9 2.4 4.1 4.3 2.2 2.5 2.2 4.6 0.1 3.1 0.7 4.7-1.5 1.6-0.1 6 3 3.1-0.1 2.9-1.4 2.6-2.3 4.5-2.1 0.4-1.5-0.7-3.1 0.8-6.2 3.5-3 0.9-5 3.5 1.8 1.5 1.5 2.9 4.6 1.4 5 1.1 1.2 2.4 1.2 2.8 2.3 1.6 0.5 3.5-0.9 3.1 0.1 4.5-1.9 1.6-0.1 7.8 1.3 3.3 1.3 2.5 2.1 2.5 4.4 1.4 1.1 1.8-0.1 2.7-1.8 3.3-0.6 2.7-1.9 3.2-0.8 1.2-1.2 1.1-3.3 5.9-3.9 1.5-0.4 0.6 0.3 1.8 4.9 1.6 6.8 0 3.6 0.6 1.3 1 0.6 2.3-0.5 4 0.4 1.7-0.6 8.2-6.2 1.9-0.2 4.6 3.5 4.2 1.5 2.9-0.6 3.1-3.1M1233 273l2.7 7.4 1.7 2.9 4.4 4.1 2.9 1.3 2.5 2.6 3.9 1.1 1.1 1.2 1.3 3.3 2.9 2.5 4.5 6.6 2.1 5 1.4 1.1 12.2 6 1.7-0.3 0.7-1.3-0.2-3.6 2.4-2.3 2.8-7.4 0.1-3.6 1-1.5 6.6-4 0.5-1.5-0.5-4.9 1.1-1.2 6-2.1 4.9 0.6 4.2-2.9 3.1-0.8 2.7-2.1 4.8-2.3 3.7-3.5 4.8-2.7 1.9-2.9 0.7-3.4-1.6-5.4 2.7-4 0.1-3 1.3-3-0-4.5 1.5-3.2-0.2-1.9-3-8.3 0.1-6.1-2.8-6.7-2.5-2.5-1.5-7 1.2-2.2 2.2 0.8 4.3 9.6 4.1 3.1 1.1 1.6 0.8 3.6 2.5 4.1 2 5.8-0.6 5.4 2.5 2.5 3.8 7.1 0.4 7.7-1.7 12.3 1.2 3 0.3 3 1.1 1.5 3.4 2.5 0.2 4.9-1.3 1.3-4.4 0.5-1.2 1.6-1 4-2.6 4.1-0.4 1.5 0.3 3.5-0.9 6.3-0.6 1.6-3.5 3.8-1.7-0.1-2.6-2.7-3.4-1.7-2.6-2.1-5-1.4-4.3 3.5-9.5 1.3-3.6-1-4.8 2.2-1.2 1.7 0.6 3.7-0.1 1.5-1.5 2.9 0.5 1.6 9.2 5.6 2.6 5.4 4.5 3.5 0.7 1.6 0.5 3.3-0.8 1.9-4 2.1-0.9 8.3 1.2 1.6 4.3 3.3 7 1.3 3.3 1.6 1.1 1.7-0.1 4 0.8 1.6 1.4 0.7 5 1.4 4.5-2 3.2 0.3 1.6-0.9 2.7-2.9 2-0.2 1.8 1.1 1.2 1.5 1.2 3.3 0.4 2.9 1.7 2.1 2.2 0.1 7.4-5.7 5.3-4.6 1.8-2.8 1.5-1 6.4-0.3 1.9 1.7-3 2.6-3.2 0.9-2.4 1.9-3.3 4-4.6 7.4 0.5 1.6 2.2 2.7 1.7 5.9 0.2 3.4 0.8 1.7 5.3 2.1 6.1 6.9 6.3 3.3 1.2 1.1 1.7 3.2 2.4 2.5 1.8 5 2.3 2.7 2.4 8.9M1390.5 432l-2.3-2.4-2-3.8-4.3-3.5-5.2-2.1-3.8-4-4.9-0.9-6.5-2.2-2.3-3-3.3-1.3-2.7-4.4-2.6-2.2-1.5-3-3-1.8-2.5-2.5-4.3-7.7-1.3-1-7.2-3.4-6.3 0.3-5.1 1.7-1.7-0.7-3.4-4.6-12.3-6.3-5.1-1.4-1.8-1-3.9-4.4-0.6-1.8 0.7-3.1-0.8-3 1.8-2.7 1.5-3.8 2.5-2.6 0.4-1.4-0.6-1.7-1.6-1.3-2.7-0.6-8.1 0.2-8.8 4.2-2 0-1.5-1-2-3.8-1.7-0.6-3.2 0.8-1.6-0.5-6.8-7.7-5.7-3.9-4.3-5.3-1.6-3.2-3.1-1.7-1.7-3.1-5.5-4-4.8-1.5-2.4-2.7-2.8-2.2-3.1-0.8-4.7-0.1-4.1-2.3-1.6-0.3-4.5 2.4-5.8 1.8-5.1-1.3-4.2 0.7-5.9-3.1-6.2-1.2-1.4 0.5-3.4 2.9-5.6 3.2-4.5-1.1-3 0.7-3-1.5-6.4 0.6-1.6 0.5-4 3-6 0.7-2.2 1.3-0.9 1.5M1050.4 73.7l-1.7 4.4 2.3 5.5-4 8.1-0.7 6.4-1.3 1.9-2.7 2.6-3 1.9 3.5 1 2.7 3.8 3.1 1.4 2.7 2.5 9.3 2.3 11.7-1.2 1.5 0.3 4.3 2.8 3.3-0.2 6.9 3.4 2.6 4.8 7.3 4.3 4.5 6 6.3 4 1-0.2 2.8-3.8 0.7-2.2-0.2-2.4 0.9-1.8 1.8-1.6 0.7 0.1 1.6 2 0.2 3.9 0.6 1.8 2.8 2.6 4.2 2.6 2.1 2.7 1.6 5 1.9 2.7 0 1.8-1.5 4 0.5 1.7 3.4 4.8 5.8 2.7 1.2-0.2 7-5.7 2.2-0.4 2.6 1.3 3.9 0.8 2.7 1.6 3.3 0.3 4.1 3.4 3.1 0.8 4.9 6.1 0.8 3.2 3.5 5.8 0.4 3.6-0.6 6.5 0.6 1.4 2 0.8 2-1.1 1.1-1.9 3.9-3.1 0.3-3.2 1.5-3.3 0.4-2.9 0.9-1.4 1.5-0.8 5.1-0.2 9.2 0.9 3.1 0.9 4.6 0.3 2.8 1.8 4.5-0.5 3.2 1.2 6.7-1.7 3.3-4.2 1.6-1.1 5-1 1.3-0.8 4.4-6.6 2.9-2.8 1-1.9-0.5-1.8-2.9-2.6-2.1-4.5-2.1-2.8-1-3.1-2.2-2.8-3-11.1-2.1-4.3 0.5-7.6 1.9-2.8 0.2-1.6-0.8-3 1-4.6-1.5-6.2-3.2-3.9-0.7-3.3 0-5.9 2.7-7.3 4.9-2.1 1.9-3.1 2.8-2.1 3.3-4.3 3.7-1.2 1.4 0.4 0.9 2.3 0.5 5.6 4.3 4.9 7.8 1.7 3-0.6 4.4 3.6 2.8-0 6.3 1.7 4 3.2 5.9 2.2 2.7 4.1 1 0.2 0.8-0.7 0.7-2.7-0.6-3.7-2.7-3.3-0.7-4.7-2.5-2.2-1.8-4.5-1.8-2.6-1.6-4.6-6.9-8.5-2.4-4.5-3.1-1.5-2-2.4-3.1-1.1-3.4-4.3-8.2-1.4-3-1.5-0.9-1.4-2.2-7.6-2.1-12.5-1.2-1.1-1-0 0.3 2-1.4 7.6-1.1 1.4-5.9 3.5-2.8 0.9-2.3-0.1-4.5-2.7-1.8-0.4-2.8 1.8-3.3 0.8-3.5 3-0.3 1.8 2.8 2.9 0.3 1.7-0.9 1.2-3 0.7-3.7 2-0.9 1.8 2.1 4.3-0.4 6.2-1.9 1.7-8.4-0.3-4-2.5-3.8-0-10.6-5.3-8.1-1.3-1.6 0.3-1 1.3 0 4.2 0.8 1.5 3 2.8 0.2 3.5 1 3-0.3 3.7 0.6 1.5 2.5 2.4 2.2 12.9-0.1 1.1-1.2 1-1.9-0.1-1.8-1-5.2-5.3-2-2.8-1.5-0.8-3.7-0.7-2.5-2.2-4.7-2.1-5.1-6.4-1.6-4.9-0.9-1.2-2.8-1.8-5.1-2-1.2-1.3-1.4-3.5-7.7-3-4.6-0.5-1.6 0.9-0.6 1.7 1.4 3.8-0 1.9-1.2 3.2-1.1 1.3-8.5 5.3-3.7-0-1.6 0.6-0.8 1.4 0.6 6.2 2.1 3.2 0.1 1.6-0.7 1.3-6 2.4-6.2 1.2-6.5-0.6-2.9 1.8-5 4.9-5.9-0-2.5 1.5-6.5-2.8-2-3.1-9.1-5-2.2-2.7-1.5-3.3-4.1-6.3-1.9-1.4-1.7-0.5M1096.5 144l-2.6 6.2-2.3 2.7-1.4 4.6-0.3 2.8 2 1 2.2-2.4 3.5-0.7 5.4-3.2 4.8-8.3 0.7-2.7M961.5-3l0.7 4.8 2.4 4.7-0.3 4.9 6.9 11.9 2.5 1.8 4.5-0.1 4.5 1 5.4 2.5 2.9-1.7 3.8-0.7 1.5-1.5 1.7-8.3 2.8-5.8 1.7-5.9 0.1-7.6M778.2 173.7l0.6-1.6 1.8-1.1 2.2 0.6 4.4 4.2 5.3 7 2.8 7.8-1.1 2.5-2.2 0.3-2.3-1.4-1.6-3.8-3.4-1.6-4.5-5-2.2-6.4M753 265.5l10.8 9.6 4.8 2.3 2.6 4.5 2.6 1.9 2.1 2.7 5 2 1.3 1 5.6 8 7 5.5 6 0.4 4.2-0.7 1.4 1.2 1.7 3.1 2.6 2 2.5 5.9-0.3 5.1 1 3.3 2 2.3 2.5 1.6 5 0.3 3 1 1.4-0 2.9-1.4 1.5-0.1 3.4 1.1 1.5-0.1 10.5-3.2 6.2 2.9 4.6 0.5 0.7-0.3 0.7-2 2.7-3.5-0.1-3.3 0.2-0.9 1.1-0.1 5.2 1.1 3.8 3.1 10.7 2.4 4.7 1.7 3-0.1 3.4-1.3 4-3.2 1.7-0.7 1.8 0.8 1.4 3.3 1.2 1 5.5 0.6 4.8-0.5 4.5 1.1 4.7-2 3.2-0.5 3 0.7 4.2 2.8 3.3-0.3 1.5 0.5 2.3 2.2 2.8 1.5 2 2.9 5.3 1.3 2.6 2.7 4.3 2.7 1.4 0.3 1.5-0.5 3.8-4.2 1.2-0.7 1.8 0.1 2.7 1.9 2 3.3 2.7 2.3 1.2 3.8 1.1 1.4 7.6 1.5 4.7-1.3 2-1.8 1.4-6.5 4.8-7 0.6-1.7-1-3.4 0.1-1.4 3.5-5.2 2.2 0.3 1.1 3 2 3.2 0.7 3.9 3.6 7.7 2.5 1.5 1.6-0.4 4.6-2.7 2-0 1.7 1.1 0.8 1.8-0.5 4.6 3.7 4 1 3.6 0.9 1.4 2.4 1.9 2.1-0.8 0.9-2.6 1.8-1.3 1.7 1.1 0.9 1.3 0.3 1.8-0.6 4.2 1.2 5 1.3 1.5 5.5 3.5 1.4-0.2 2.4-2.6 3-1.7 3.4-6.6-0.3-3.3 0.6-3 1.9-4.6 3.1-4 1.2-4.8 0.9-1.4 4.4-4.7 3.3-1.6 1.1-1.3 0.3-3.5 0.7-1.5 4.4-2.7 5.7-5.1 1.7-0.5 1.8 0.8 1.1 1.7 0.1 2.1-0.6 5.4-1.7 2.5-0.8 3.5-2.4 2.7-0.4 1.7 0.6 3.4-0.8 3.2 1.3 3.1-0.6 4.4 2.1 5.7M1135.2 318l1.4 4.3 5.6 7 1 3.1 1 1.2 2.9 1.9 0.7 1.7-0.5 3.6 2 6.3 1.6 0.8 3.4 0.2 1.2 1.1 1 9.3M748.9 319.5l1.8-0.7 2.4 1.3 1.9 2 4.6 3 4.1 5.4 1.5 3.3 3.5 1.5 1.8 2.7 3.8 2.7 1.8 2.6 4 2.3 5.1 4 6.2 7.1 0.3 4.6 0.9 3.1 0 3.2 2.7 4.2 0.2 1.5-1.2 5 3.7 11.1-0.3 1.6-1.2 1.6-2.4-0-4.1-3.9-1.8-3.1-3.2-1.5-3.7-3.6-3.2-1.9-0.5-3.3-2.1-4.5-0.5-3.8-2.5-4.8-1.4-1.1-5.3-1.6-5.4-4.3-2.5-3-4-0.4-1.6-0.7-1.8-3.7-2.4-2.6-1.9-5.9 0.2-1.7 3.3-4 1-3.2-0.2-4.7-1.3-2.8M1410.1 183.1l1.2-2.7 1.3-1.2 8-1.5 6.2 2.2 0.9 1.7 0.8 4.3 1.9 1 3.8-0.3 3.5 0.5 2.5 1.7 0.7 1.8 0.4 4.2-2.1 1.4-1.7 0-3.4-1.7-2.9-0.6-2.9-1.7-1.6-0.3-3.2 1.1-3.2-0.7-4.4 0.2-5.7-5.1-0.4-1.5M1482.1 234.7l-5.9 1.8-1.5 1.3-1.5 5-3.5 5.1-2.6 2.2-0.7 1.4-0.1 3.4-4.3 5.3-3.5 12.9-0.3 4.9-1 3.5 0.2 3.4-0.8 3.4 0.7 1.4 1.4 0.8 4.5-0.8 4.7-2.6 5.1-0.7 4.5-2.1 8.3-0.3 3.3-1.6 1.1-1.7 0.6-4.8 2.2-2.5 0.4-1.6-0.1-3.3 0.8-3-1.3-4.4-0-3.4-5.7-11.7-0.5-3-1.8-3.6-0.9-3.7M134.8 300.9l2.3-0.5 0.4 4 2.1 3.7 0.8 3.4 1.7 3.2 0.8 4.9 3 9.2 0.1 4.6 2.7 4.2 0.4 2.9 1.3 2.7-0.3 5 3.2 3.8 1.1 6.5 1.3 3 5.3 5.1 0.6 1.6 0.1 4.9 2 2.8 1.4 4.4 2.6 2 2.7 3.9 3.5 1 6.3 5.1 6 9.6 3.3 3.3 0.7 3.1 3.7 3.1 1.7 2.6 2.8 1.7 1.8 4.9 1.2 1.4 4.4 2.5 2.2 2.2 0.7 3.1 0 5 3.5 3.4 2 4.3 2.2 2.2 0.9 3.3 0.9 1.3 2.6 1.9 3.5 10.4 3.2 3.4 5.6 9.5 2.3 2.3 1.6 5.2 5.9 1.1 4.5 3 0.7 1.8-0.9 3.8 0.5 3.2 4.6 4.9 3.7 2.7 4 4 0.9 1.7-0.2 2.1-1.6 1.6-5.3 0.6-1.5-0.4-2.6-2.6-1.7-0.8-3.5 0.3-7.6-0.6-7.9-3.2-2.4-2.7-5.4-4.1-4.1 0.5-1.8-0.3-2.4-2.6-5.8-2.8-4.7 0.9-1.7-0.4-5.8-5.5-4.5-1.7-5-0.6-1.3-1-3.1-5.1-0.5-3.7-0.9-1.2-3-1.9-2.5-2.8-9.1-1.6-5.4-3-3.1-1.1-1.3-1-1.2-2.9-4.6-5.3-3.4-0.1-1-0.6-2.3-3.1-10.5-4.1-4.3-2.6-12.9-1.8-1.3-1-1.4-3.3-1.2-1.2-3.1-1.5-2.5-2.4-3.4-0.9-4.4-2.4-5.1 0-2.9-0.8-3.4-2-3.1-2.8 0-1.4 0.9-1.5 3.6-3.7 5.3-0.6 3.9-6.8 2.7-7.6 0-5.7 1.2-7.6 2.1-5 0.4-3.1 4-3.5 0.8-3.7 1.9-3.8 0.7-3.1 1.4-3-1.3-7.3 1.4-3 4.1-4.7 0.9-5.4 2.6-2.2 2-5.8 0.1-1.5-1.4-4.5 3.7-10.5 0.6-6.8 2.2-7.2 1.5-1.6M187.4 549.4l1.7-4.2 1.1-1.4 1.5-0.9 3.2-0.1 4.9 0.8 5.1 3.5 1.1 1.3 0.4 3.4 2.1 4.5-1.2 4.7-2.7 1.8-6.6 0.1-3.2-0.7-7.4-3.3-1.8-2.7-0.3-4.8 0.5-1.5M163.5 616.5l5.7-0.7 5.2 1.1 1.4 0.8 3 4.4 2.7 2.2 2 2.6 4.3 2.5 1.7 2.8 4.3 2.6 1 1.5 1.7 6.6-0.6 4.6 0.2 3.5-1.3 3.1-3.9 5-2 1.8-1.5 0.4-2.8-0.4-0.9-1.2-0.6-3.8-2.5-2.6-1.7-3.1-2.8-1.9-1.9-4.8-2.7-4.2-4.5-5.2-2.8-5.9 0.2-3.6-1.6-3.7 0.2-1.8 0.8-1.4M191.7 708.9l1.3-3.3 6.1-5.6 3.7-0.5 3-1.3 1.2 0.2 0.6 1.2 0.1 3.4 4.4 5.3 1.2 0.8 5.4 1.8 5-0.3 1.5 0.7 5.1 6.7 1.4 0.8 4.2-0.9 1.7 0.1 2.8 1.9 6 0.7 1.4 1.1 1.4 2.3-0.5 7 1.3 4.5 0.3 6.2-1.2 4.3 0.2 1.5 1.5 2.8 0.2 3.4 2.6 4.3 0.2 3.3 3 4.1 2 4.3 0.5 8.1 1.8 4.2 0.1 4.7-0.6 1.5-2.7 2.5 0.1 4.9-1.2 3-0.4 3.1-2.5 4.3 0.2 1.6 4.7 10.1 1 4.7 1.9 4.5-0.3 3.4 1.8 4.6 0.6 3.2 3.4 3.5-0.1 6.4 3.7 7.5 1 5.3 1.2 1.4 3.6 2 3.2 3.6 0.7 1.6-0.4 4.1 2.4 2.6 1.4 4.7 3.1 5.4 5.3 5.1 2.6 5.7 0.6 4.9 2.3 4.4-0.6 4.5 0.8 3.1-0.3 4.6 2.4 4.4-1.3 7.9 0 3 2.4 4.3 0.3 4.6 1.3 6 3.8 3.7 0 3.5 1.3 3 0.2 5.1 3.4 7.3 5.2 6 3.6 2.7 2.1 4.9 4.1 2.5 2.4 2.2 2.9 1.4 2.4 4 3.3 2.1 1.2 1.5 0.4 1.8-1 8.2 3.1 5.8 0.3 3.3 2 2.7 0.8 3.1 2.4 2.6 0.5 1.6-0.2 3.7 4.2 10.7 0 2.5-1.1 1.1-3.6 0.3-4.2-2.5-5.1-2.1-2.1-3.2-1.5-1-6.7-1.2-3.4 0.3-1.5-0.5-2.6-2.6-5.5-2.6-2.4-3.5-0.4-5.2-2-4.1-0.1-3.1-1.1-3 1.6-4.9-1.1-3-0.3-3.1-3.6-5.6-4-8.8 0-4.8 0.8-5-0.5-1.5-4.2-3.6-0.5-4.8-4.9-8.4-0.2-7.1-2.8-4.2-2-4.3-0.4-4.7-1.9-2.7-0.8-4.8-1.8-2.7 0.1-3.5-5.5-9.8-2.3-5.9-2.9-3.7-1.8-4.2-0.7-3.2 0.6-3.4-0.5-1.5-3.9-3.7-2-5.9-0.2-4.9-2.4-4.3-1.6-9.8-0.7-1.4-2.7-2.4-2.2-4.4-2.1-2.6 0.2-3.6-1.7-2.8-0.2-5.1-2.3-6-4.7-5.1-0.7-5-4-8.8-0.2-1.7 0.8-3.6-0.5-1.4-3.2-2.3-0.9-1.4-1.1-9.5-2.3-5.9-0.9-4.6-2.6-6-2.5-2.3-0.7-3.5-2.5-4-0.2-3.3-3.4-3.7-0.9-3-3-5.5-4.5-4.5-1.6-6.3-1.9-4.4-1.1-1.2-5.2-2.3-3.5-12.3-1.5-2.3-2.5-1.2 0.4-1.8-0.8-8.5M555.6 553.1l1.3-10.1 0.9-1.3 3.2-2.2 1.9-3.2 1.5-0.5 4.1 0 1.4 1 5.7 11.4 0.3 3.2-1.3 6.1-1.5 3 0.6 3.2-0.3 1.4-2.7 2.7-2.8 5.9-0 1.7 2.7 4.6 0.8 3.3-0.1 1.7-0.7 1.4-1.3 0.7-8.3 0.6-1.5-0.6-4.3-4.2-0.2-1.1 1.3-2.8-0-1.8-0.8-3.1-0-2.9-1.9-4.5 0.3-9.1M570 586l5.9 0.8 1.7-0.3 4.6-3.4 1.5-4.9 2.5-2.3 0.8-5.8-0.2-3.5 1.1-3.2 3.5-2.7 4.9-6.8 1.3-1.1 4.3-0.3 1.4-0.8 1.4-3.2 2.5-2.7 2-3.5 3.2-2 3.4-3.7 2.5-0.8 1.3 0.1 1.3 0.9 0.8 8 0.6 1.8 1.4 1.1 1.5-0.5 3.8-4.2 0.8-3.7 1.9-2.6 0.7-3.4 1-1.6 4.4-3.2 2.2-3.8 1.6-4.6 4.6-4.1 2.8-3.9 1.4-4.7 1.1-1 2.9-1 2.5-3.2 4.6-3.1 1 0.3 1 1.1 0.5 5.6 5.1 15.8 1.1 1.2 3.2 1.5 2.3 2.1 3.2 1.1 3 4.4 5 1.3 2.9 1.8 4.4 3.9 5.2 0.8 1.4 0.6 2.8 3.7 2.3 4.4 1.2 0.8 3.2 0.7 3 3.6 4.5 1.8 4.9 4.1 3.7 7 3.9 4.6 3.4 3 1.8 4.2 3.9 2.7 1 2.8 2.7 3.7 0.8 3.4 8.3 5.1 3.4 5.3 1.2 1.1 8.9 4.1 0.9 1.2 0.5 2.6 2 3.8-1.1 4.7 0.4 3.1-1.5 4.4-0.6 7.5 0.7 8.9 3.2 5.8-2 11 1.5 3 0.3 1.6-1.3 4.7 3.2 9.1-3.9 8.4M570 586l0.1 4.3 1.4 2.4 2.2 2.5 1.8 3.7 1.6 0.7 3.7-1 1.7 0.4 2.1 2.4 2.7 7.1 1.7 2.9 0.5 7.6 3.5 5.4 5.5 2.4 1.7 0.1 2.9-2.1 1.6-0.2 4.8 3.3 1.9 4.8 2.5 4.3 5.2 3.9 5.3 9.7 3.6 1.8 1.2 1.4-0.4 5.9 3.7 13.5 0.9 1.5 3.8 3.4 2.3 3.2 5.1 3.1 1.7 0.5 3.1-1.1 3.4 0.1 4.5-2.3 4.7 0.5 1.8 0.8 1.2 1.4 1 3.7 1.9 2.4 2.5 1.8 5 1.3 1.2 1 1.5 3 4.7 4.5 4.6 2.4 2.4 5.1 1.4 0.8 9.5 3.6 6 3.3 4.3 0.9 1.5-0.3 1.3-0.9 1.7-2.8 1.5-0.5 2.9 0.1 2.9-1.7 3.2-0.2 4.1-2.4 5.2 0.6 3.2-0.7 3.1-1.5 4.9-5.9-0.7-6.4-1.3-3.1-0-1.7 0.9-1.2 3.8 1 3.8-2.1 7.9-1.7 7.1-0.2M550.9 627.7l0.2-2.4 1.5-1.9 2.1-0.7 4.7 1.3 5.3 5.2 1.1 3.4 3.1 4.2-0.1 3.5 1.1 3.1-0 1.5-1.3 1.8-3.2 1.9-1.4 0.2-7.9-5.3-2.5-4.8-0.4-5-2.7-4.4M562.6 656.6l0.7-1.9 1.9-0.6 3.4 0.8 2 2 0.2 3.6 1.9 4.7 0.5 9.7 2.6 4.7-0.3 2.1-2.2 1.7-1.7 0.1-6.6-2.9-0.2-4.3-1.4-6.2-1.5-3-0.1-1.5 1.8-5.1-0.2-2.8M592.7 709.1l0.7-1.1 3.4-0.3 3.2-1.6 7.8 1.9 2.2 3.2 2.1 1.9 7.4 3.1 3.3 4.2 5 1.5 3.4 3.5 2.2 5.1 3.6 1.3 1.3 1.1 1.2 3 3.6 4.9 1.6 3.2 0.7 4.4-1.6 7.7-1 1.2-4.8 3.3-4.9-0.8-3.3 0.2-1.4-0.8-3.4-3.8-2.1-4.8-8.5-5.1-1.1-1.2-1.8-4.4-2.7-1.9-0.9-1.4-0.6-3.1-1.2-2.8-0-3.6-0.5-1.6-1.3-1-3.5-1.3-6.1-4.7-2.5-6.8-0.2-1.5M641.1 760.5l5.2-3.4 1.7-0.5 2.7 0.3 2.9-1.4 4.8 1.1 3.2-0.2 6.3 2.2 5 4.2 4.6 1.6 6.3 3.9 1.6 2.9 4.3 2.8 0.7 1.3 0.1 3.9 1.5 3.1 7.5 5.1 0.9 1.3 2.9 11.3 1.5 2.8-0 4.1 2.1 2.8 0.2 1.7-1.3 2.4-0.6 3.4-1.3 1.5-4.9 2.2-1.4-0.1-6.1-2.8-2.2-1.7-2.7-3.9-5.2-3.9-3.4-1.3-1-1.4-1.2-3.9-1.3-0.9-5-1.3-3.8-2.4-3-4.1-5.1-4.1-3.7-8.9-3.6-3.4-0.8-3.1-3.9-3-1.6-2.4-2.4-2.3-0.8-1.7M771 446.5l-8.4 5.9-1 1.3-0.9 3.2 1.4 4.5-0.8 4.9 2.8 6.4 1.5 1.3 5.4 2.5M-1.5 616l2.8 5.2 1.6 6.5 0.8 8.1-2.4 13.1-1.3 2.3-1.5 0.8M838.4 352.7l1.1 0.3 0.6 1.2-0.9 4.2 0.4 2.3 2.3 5 7.7 7.4 12.3 4.3 1.6-0.3 3.3-1.9 3.2 0.6 3-0.2 3.3 1 1.7-0.3 3.1-2.2 1.6-0.1 9.8 2.1 2.5 1.4 2.2 2.3 0.5 5 1.4 3 0.4 5.4 4 5.9 1.7 0.8 6.6-0.7 8.1-5 0.7-3.1-1.1-6.1 0.7-1.7 1.8-1.4 1.9-4.6 1.6-0.2 4.3 0.6 1.9 1.6 0.2 1.8-1 3.5 0.8 5.1 5 8.3 2.1 2.3 3.3 1.1 2.8 1.9 4.9 1.1 2.7 2.4 1.7 0.3 4.8-3.2 4.2-6.5 2.9-0.4 1.9 0.7 3.8 5.5 3.7 3.3 3.2 1.9 0.8 5 8.9 6.8 0.9 5.2 3.8 9.2 2.9 5.7 4.4 3.1 2.3 4.1 2.1 2.4 0.8 5 3.3 3 1.6 2.5 4.9 5.8 5.1 3.7 1.6 4.9-0.3 5.5 1.1 1.4 3.3 2.2 1.5 2.5 2.4 2 1.7 4.5 3.6 2.7 8.3 9.5 0.6 2-1.1 1.8-2.1 0.8-5.9 0.2-3.2-0.7-1.6 0.2-2.7 1.9-5.2 0-6.6 5.8-6.3 2.4-2.9 3.8-6.3 3.4-4.9-1.9-1.2-1-0.5-1.4 0.3-3.3-0.4-3.4 1-3.2-0.3-9.3-3.1-6.5-3.7-4-1.6 0.3-7 5.6-0.9 3.4-1 1.6-6.9 4.8-3.7 1.3-1.7-1.1-0.2-3 3.3-4.4 2.1-5-0.9-5.1 1.9-2.9 0.2-3 0.6-1.3 2.7-1.7 2.5-2.4 4.1-1.7 1.8-4.9-0.2-4.3-1.1-1-5.2-0.9-1.6 0.3-1.3 1.2-2.3 3.3-5.7 3-5 1.3-2.5 4.5-4.5 3-1.5 3.1-0.6 6-1 1.6-2.9 1.6-1 0.1-1.5-1.7-0.4-4-2.4-3.4-0.6-3.5-5-4.4-1.6-0.1-1.9 2-4.9 2.9-2.2 2.4-1.7 3.1-0.2 5.2-1.5 4.5 1 4.7-1.6 7.1-2.6 2.1-3-1.8-2.4-2.6-1.3-2.7-0.1-6.9-1.2-2.8-1-7.5 0.7-3.3-2.7-4.1-0.2-3.2-1.4-2.9 0.4-6.1-1.7-12.8-1.4-2.9-3.3-1.4-3.6-3.2-6.5 0.9-4.2 2.5-4.3-0.9-5 1.4-3.2-0.4-2.8-1.5-3.9-3.5-3.1-1.1-4.2-3-3.6-0.2-3.1-1.2-3.7 0.6-1.5-0.8-0.9-1.6-1.6-4.9 0.7-6.3-1.4-6.3-2.8-7.3-0.9-1.3-4.7-1.9-4.8-6.2-0.6-4.4-2.1-2.7-0.5-1.6 1.5-4.3 3.9-4.9 1.4-4.4 2.2-3.7 0.4-3.1 1.7-3.5-1-3 0.6-5.4-2.3-10.7M800.8 418.8l-4.1-1.6-6.2-0.4-2.4 2.5-1.6 0.6-4.2-0.1-4.2 2.1-3.4 5.8-3.4 2.9-1.6 4.4-3.2 5.4-3.9 3.9 0.5 5.2-1.6 4.5-0.5 7.5 1.2 9.7 2.1 2.7 3.2 2 3.7-0.6 4.3 1.1 3-1.3 3 0.5 3.1-1.1 1.6 0.1 7.3 4.7 4.8 1.4 2.1 1.2 1 2.2-0.3 3-2.2-0.5-5-2.9-3.5 0.3-4.4-2.1-7.8 2.3-1.2 0.9-3.7 4.6-0.4 3.6 2.9 4.3 7 3.9 1.5 0.3 3.2-1.4 6.2 1.5 3.2 1.9 1.8 0.5 1.7-0.9 3.2-6.1 1.3-6.1 1.3-3.4 1.6-1.7 2.3-0.1 4.4 5.8 2.2 4.5 2.8 2.7 0.9 3.1 1 1.3 6.6 3.2 4.6 0.2 3-0.6 2.3-2.5 0.4-3.2-0.3-2.2-1.2-2.9 0-2.4 1.1-2.4-0.1-1.3-1.9-2.8-0.8-6.3 1.9-5.2-2.8-9.2-0.3-6.6-1.4-4.4 0.2-2.7-1.8-4.6-0.5-3.3-0.8-1.2-3.8-2.5-2.2-2.6-3-1.9-3.1-3.8-3.7-2.8-3.8-7.7-2.3-2.6-1.7-0.4-3.5 0.7M1048.6 526.1l1.2-1.2 5.3-0.3 1.5 1.1 0.8 1.7 0.7 6-0.5 9.3-2.4 6-1 0.7-2.5-0.1-3.6 1.4-1.6 0-3.5-3.1-1-2 0.2-1.3 2.8-4.2 0.6-6.9M1087.5 358l0.1 3.5 0.9 3.2-0.6 3.6 0.8 6.5 3 5.6 0.4 4.6 1.2 4.7 3 4.1 0.4 1.6-1.6 4.4 0.7 7.8 1.3 2.7-1.5 5 0.1 3.3 2.1 4.4 5.1 4 4 7-0.4 3.6 0.8 3-0.4 1.4-2.3 2.8-0.5 3.5-2.7 4.3-1.5 1.2-4.8 0.3-2.5 2.5-0.5 3.4 2.1 4.4 1 4.1 5 2.4 3.1 3.2 1.7 0.1 1.6-0.6 1.7-1.2 1.4-3.7 1.1-1.1 4.1-1.9 7.2-4.5 4.3-5.3 1.9-4.6 1.1-0.7 1.6 0.5 3.2 2.7 1.1 4.5 2.8 2.1 4.6 5 1 5.1 4.6 9.2 1.7 5.3 1.3 1.2 1.9 0.2 1.8-0.4 4.5-2.9 2-0.1 1.6 1 1 1.5 0.2 4 3.3 10.4 3.4 4 1.7 1 1.8 0.1 4.2-1.7 1.2-1.6 0-2.2 2-3.1 0.4-1.7-0.9-3.3 2.8-5.6 3.4-3.1 2.1-4.6 2.8-1.7 7.7-1.4 2.8-2.1 1.5-0.4 4.2 2.5 6.3 1.5 1.5-0.1 2.8-1.3 3.2-0.1 5.9 1.4 7.8 2.9 4.6 2.4 3.7 0.3 2.8 2.7 1.1-0.5-1.2-6.8-4.1-2.1-1.1-1.2-4.5-8.1-6-2-7-6.4-5.6-0.1-1.3-0.8-2.3-2.3-2.7-1.7-2.4-6-2.8-3.9-2.5-2.2-4.8-2.2-3.1-0.5-4.2 2-6-0.2-2.1-2.2-3.7-1.2-1.3-1.1-1.4-4.7-5.5-6.1-0.8-1.5-0.4-5.4-0.9-1.4-6-5.5-1-1.4-0.9-3.1-4.1-3.1-1.9-4.3-2.5-2.1-0.5-1.3 0.1-1.3 4.6-7.3 0.9-2.9-0.6-6.4-2-3.8 0.9-5.4-0.7-2.8 1-7.4M1176 505l2 4.4 1.4 6.9 0.8 1.7 4 3.2 1.2 3.3 2.6 2.6 0.9 1.7 4.9 2.4 3.2 3.8M1398.6 432.1l4.2 2.2 1.5 1.5 0.5 1.2-0.3 3.1 1.4 3.1 0.2 3.4 2.6 4.3-0.2 5 2.4 5.7 4.8 6.9 1.6 0.7 1.9-0.2 6.2-3.9 1.8-0.4 2.7 2.5-2.3 2.9-5.4-1.2-6.8 2.2-1.2 1.4-2 6.6-0.5 6.2-4.3 8.9 0.4 4.8-1 2.9 0.4 3.2-1.5 4.4 0.9 3.3-0.3 1.5-3.1 4.1-1.1 2.9 0.8 7.8-2.2 4.3-0.1 1.5 0.8 3.1-0 4.5 0.7 2.9-0.8 4.9 2.7 4.1 0.4 3.1 4.3 12 0.5 8-0.7 3 1.9 4.6-0.4 5.5-1.2 1.3-1.4-1.2 0.7-3.5-0.3-2.2-2-3-0.7-3-0.7-8.7-3.8-3.7-3.3-5.6-1-6.5-1.9-2.7 0.3-5.2-5-11.6 3.4-15.1 2.4-2.6 0.3-1.5-0.7-3.3 0.4-3-0.5-3.2 3.1-4.1-0.1-6.6 2.5-8.9-2.7-5.6-0.1-4.6-1.2-3 0.1-3.3-0.3-1.6-1.5-2.5-0.5-4.9-5.4-11.3 0.3-4.9-0.8-7.1-2.4-2.6-0.1-2.4 1.2-1 3.4 0.2M1527 571l-17.4-2.5-1.5-1.2-0.8-4-0.9-1.4-4.6-2.2-1.7 0-7.3 2.2-1.2 1-3.1 5.1 1.6 7.1 5.8 4.1 4.6 1.7 2.6 4.1 5.9 2.3 1.2 1.9 1.3 6.8 4.2 5.8-0.5 4.1 0.5 1.7 2 3 0.8 3.1 1.7 1.9 1.5 4.2 5.3 3.7M1484.1 716.9l1.7-3.9 2.2-0.5 5.4 1.9 1.4 1.3 2.6 5.4 0 1.5-1.1 1-5.3 1.1-1.6-0.2-4.4-3.7-0.5-1.5 0.2-1.6M774.9 650.2l-1.4 5.5 0 1.7 1.5 0.8 1.8-0.6 6.2-3.8 1.9 0.6 1 1.9 0.7 7-2.6 2.4-3.3 5.2-0.1 1.2 0.9 0.5 3.1-0.2 7.3 2.7 7.9 0.1 4 1.9 5.7-0.5 3.1 1.5 1.4 1.3 0.6 1.7-2.9 5.3 0.1 3-2 6.7-0 1 1.1 0.3 3.3-2.1 3.9-3.8 8.3-2.9 3.8 0.5 5.7-3.6 1.4-1.3 0.5-3.8 2.3-4.4 0.1-3.7 0.7-1.8 1.6-1.3 2.8-0.4 4.9 1.4 1.7-0.2 3.1-1.6 5.9-1.4 4.8 1.5 4.1-3.1 10.9-0.9 4.7-1.5 10.4-1.3 1.4-1.7-0.3-4.3 1.6-3.5-0.1-1.7-1.5-3.1-0.5-3.7-1.5-3.4 0.6-3.3 4 1.1 1.6 1.4 3.1 7.8 1.2 1.6 2 0.7 1.7-0.2-0.1-5 0.6-2.1 1.3-1.3 1.7-0.5 3.8 0.5 2.8-2.1 5-1.1 11.7-5.6 4.6-0.8 3.3-1.5 4.4-0.8 3.6-1.5 1.5 0.7 0.6 1.3-1.8 6 0.1 1.6 1 0.8 4.9 1 4.7 3.3 2.8 0.9 6.2-1.5 4.6 1.5 5.9 0.6 4.6-1.6 3.1 1.5 1.6 0.2 11.8-2.9 9.2-0.6 4.7 0.7 6.5-0.4 1.5-0.9 2.3-3.2 1.5-0.5 6.9 1 4.2 2.7 0.2 2-1.6 1.7-6 0.9-3.3 2.3-1.1 1.8-0.3 5-1.7 2.8 0.7 3-0 4.6 1.6 2.9-0.3 5.2 3.6 8.5 0.4 3.1-2.1 0.5-3.6-6.4-2-4.8-2.2-2.6-0.2-1.8 0.6-3.8-5.1-6.6-3.7-3.3-1.7-0.5-1.7 0.5-1.5 1.3-3.7 5.4-3.7 4.1 1.2 4.2-0.1 1.5-1 0.7-3.5-5.7 0.2-4.2-2.4-3.7-1.7-1.1-1.5 0.4-4.9 4.9-4.1 5.5-4.5 1.9-1.2 1.3-3.5 7.4-1.2 0.5-1.4-0.7-1.2-1.6-1.6-0.9-4.3-0.4-1.9-2.7-3.7 1.2-1.9 1.1-1.1 1.5-0.6 3.7-0.1 5.5-0.4 1.5-1.2 1-6.2-0.5-3-1.6-1.6 0.1-3 1.3-3.5 0.2-1.4 0.9-5.1 8.7-1.5 0.9-4.8 0.6-5.9 2.2-6.2 0.6-4.5-2.3-4.4 1.9-5.1 0.9-1.1-0.7 0.7-3.8-0.9-5.3 3.1-9.2-0.1-1.3-1.8-3-1-2.8-1.1-0.4-2.9 0.5-3.7-0.6-2.9 1.9-5.2 1.6-2 2.9-0.6 6.4-0.6 1.7-1.1 1.3-3.9 1-1.5 0.9-0.5 2 0.8 2.8-0 3.6 3 6.2 1.4 1 4.1-0.1 1.4 0.7 2 2.6 5.7 2.9 4.8 0.9 4.4 1.9 9.5 2.6 1.1 1.2 0.3 3.5 1.5 3.2-1.9 10.6M763.5 559.5l-0.6 2.9 0.2 3.9 1.3 5.8 0 3.3 2.6 3.7 0.7 2.5 2.2 1.1 1.8-0.8 2.4-3 2.9-2 2.4-2.9 1.6-1 12.1-2.1 1.5 0.5 0.1 1.5-1.1 1.6-3.7 2.1-1.3 3.8-2 3.3-0.4 2.1-1.2 1.4-3.6 1.8-0.7 1.6-2.6 12.5 2 4.4 0.1 1.5-1.1 5-0.6 1.5-2.6 2.4-1.5 4.8-2.7 2.3-0.8 1.6-0.3 6.4 3.3 5.7 1 11.5M1215 733l-1.6-7.4-2.2-3.5-1.2-4.7-3.2-4.4-0.6-2.4 0.7-0.5 5.3-0.6 1.1-1 2.5-4.8 1.6-0.8 3.9-0.5 6.2-2.9 2.9-3.9 1.9 0.8-0.1 1.6-1.7 2.8-0.7 5.2 3 9.1 6.2 7.4M-3 851l7.1 2 4.2-1.2 1.8 0.5 3.8 6.3 1.7 5.1 2.6 2.1 2.8 4.1 4.4 2.8 3 3.2 1.7 2.6 1.6 4.6 2.1 2.2 1.3 2.9 2.6 2 1.7 4.3 4.5 2.4 3.4 5.2 0.8 4.9 4.7 5.4 1.8 4.8 0.6 4.9 3.4 4.1 0.4 3.4 2.2 4.2 0.4 3.4 3 3.9 5.5 10.7 2 2.8 0.6 1.8 0.2 6-0.8 3 0.2 1.8 2.8 2.6 1.2 4.4 4.2 3.6 3.2 1.9 0.7 2-0.5 1.9-6.3 4.6-4.1 6.8-1.5 0.5-2.6-1.5-5-1.1-7.4-11.1-4.5-2.4-8-6.1-4.6-2.5-1.7-3.6-4.3-4.7-8.1-1.4-3.2 0.7-3-0.6-6.3 0.4-8.6-6-7.7-1.1M771 839l-7.3 1.6-6.9 0-3.8 2.9-1.4-0.2-2.3-2.6-6.7-2.7-5.5-0.1-6.2-6.5-3-1.4-3.5-0.6-4.2-2.9-3.3-0.7-2.9-1.4-3.2 0.5-4.4-0.9-6.2 5.8-0.8 3.4-3.4 7.4-1.4 0.4-4.6-3.3-6.4-0.2-2.7 1.7-2 0.2-1.4-1.3-1.2-3.8-2.3-2.7-3.2-5.4-0.4-2-0.9 3.6 1.8 4 5.2 5.5 1 3.2 2.1 2.2 2 4.7 2.8 1.7 1.6 2.9 1.3 0.9 3.3 1.4 6.6 4.6 3.4 8 3.1 3.8 2.9 2.3 0.7 1.6 0.1 3.8 3.5 3.9 2.3 6.4 0.2 3.4 1.1 1.5 1.7 0.8 12.9 2.7 4.8 0.5 4.8 2.7 1.1 1.5-0.3 4.2 1.3 3.2-0.2 3.3 2 7.8 3.2 3.8 2 6.7 3.6 3.5 4.1 3 1.5 4.8 1.8 0.7 3.8 0.1 3 2.5 5.4 3.1M909 739.1l5.9-0.6 6.1-2.6 4.3-2.6 4.6 0 6.1 2.2 2.6-2.1 2.1-0.1 5.5 0.8 3.8 3.4 1 1.5 1 4 1.6 1.2 1.8-0.1 4.7-1.7 2.9-0.4 7.6 1 3.8-0.8 1.8 0.6 1.1 1.6-5.5 4.1-3.2 0.4-3.8 2.5-4.7 0.6-7.7 2.9-3.6-0.2-4-4-1.9 0.2-1.4 1.4-1.8 3.5 0 4.3-1.3 1.1-3.1 0.7-2.2 2.2-3.3 1.3-5.9 5.8-0.8 1.5-1.1 6.5 1.7 4.7 1.5 1.4 1.6 0.1 1.7-0.8 2.2-2.5 2.8-2.1 2.2-3 1.5-0.6 3.5 0.3 4.3-2.3 1.5-0.3 4.8 0.7 7.4 3.9 1.2 1.2 2 4.6 3.5 3.8 1.7-0 3.2-2 4.7 0.3 2.8-1.9 6.2-2.2 2 0.7 1.6 1.5 1.2 2.2-1.9 5.3-0 1.8 1.3 3.3 0.4 4 1.1 0.2 2.9-1 3.7-0.1 2.6-2.8 3.7-2.4 3.3 1.2 1.3 1.5 0.7 1.9-0.1 1.7-4 6 0.2 1.7 4.2 4.9 2.8 0.8 2.7 2.1 1.7 0.6 6.2-2.5 2.7-2.6 3.3-1.3 4.4-3.5 0.9 0.6 2.5 5.1 0.4 1.7-0.3 3.5 0.9 1.1 1.2-0.1 2.9-1.6 6.4 0.8 4.1 1.8 3.9-0.1 1.8 0.5 2.4 2.6 2.8 1.2 7.6 0.2 4.9 1.6 1.6-0.3 2.6-2.2 2.9-1.5 2.4-2.4 5-0.9 2.6-2.4 10.4-1.4 3.1-1.4-0.4-0.1-4.6 8.8-2.6 2.6-2 4.5-4.8 1.9-4.8 4-2.3 4.7-1.3 1-8.5 2.3-4.5 3-4.4 1-0.7 1.4 0.1 5.2 1 1.4 3.7 1.8 2.1 2.4 6.2-2.8 3.2-4.1 2.8-1.7 8.8-0.4 3.9-0.9 1.8 0.7 1.1 1.7 1.6 5.8 0.1 3.4 4.4 7.9 1.9 0.4 1.7-1 2.1-3.5 1.9-1 2.2 0.1 1.6 1.3 4.2 7.6-1.1 3.6 0.2 1.8 1 2 2.4-2.6 0.6-4.1 2.6-2.4 2.8-4.5 3.6-1.8 3.2-0.3 1.3 0.7 0.6 1.1 2.3 8 4.2 2.9 2.3 5.4 5.5 2.1 1.5 0.1 3.2-2.8 3-1.6 0.8-1.3 0.5-7.8 1.3-1.4 3.5-1.4 0.8-1.2-0.7-5 1.6-4.8 0.9-1.7 3.7-1 1.2-1.3 2.5-6.1 0.4-3 1-1.4 2.6-2.2 4.1-5.2 7.1-5.4 1.1-1.5-1.2-5.4 0.8-4.5-4.5-10.3 1.5-6.2-0.3-6.1-1-4.4 0.2-3.1-2.2-4.3 0.2-3.1-1.4-2.9-0-1.5 1.1-3.2-2.1-10.4-0-5.2-1-3.7 0.5-2.3 1.9-1.6 2.2-0 1.3 1 0.7 1.5-0.5 4.3 0.6 2 3.1 2.2 2.4 4.4 3.9 5.2 1.9 1 2.5-0.4 2.5-10.1-0.1-1.7-1.5-2.9-0.1-6.4 0.8-1.6 3-1.6 4.8-3.6 3.5-6-0.6-5.4M1239 722.6l4 1 4.7 2.3 5.6-0.3 3 1.8 0.5 3.1-1.2 3.3 0.2 1.7 2.2 2.8 0.7 4.7 1.5 3-0.6 4.5 0.4 3.4-2.3 6-5 8.6 0.4 2.4 2.3 1.3 2.8-2.8 3.5-1.7 1.9 0.7 1.3 1.6-1.4 6 3.7 13.8 2.7 4.2 0.4 1.7-0.3 1.7-2.5 4.5-5.3 4-1 3.2-2.9 3.9-0.5 3.8-1.5 2.8 0.9 15.7 0.8 1.6 5.2 3.7 4.3 1.2 2.7 2.3 1.6-0.1 3.2-1.5 5.7-0.6 4.6 1.4 6.2-0.9 4.5 1.1 6.2 0.3 5.7-1 3.6 1 4.2-1.8 3.4 0.5 3.6-0.3 0.7 0.8-0.9 0.7-3.1 0.6-6.3 3.6-7.8 2.2-1.3 1.1-1.4 3.7-2.7 2.1-2.1 2.6-3.2 1.5-2 4.6-3.7 3.1-1.8 5.7-0.6 7-5.1 10.2 0.1 1.7 8.9 8.2 2.1 6.5-0.2 1.7-1 1.5-4.2 3.8-1.8 2.9-0.8 5.5-1.9 2.5-0.5 1.5 0.2 4.9 0.6 1.5 3 1.6 0.9 1.1 1.5 3.6 7.5 8.1 1.9 4.7 2.6 4.4 1.7 7.6-1.5 3.9-0.1 3.4-0.8 1.5-10.1 10.8-4.7 2.4-2.1 2.5-2.5 8.1-2.7 1.9-0.5 3.1-1.8 4.4-0.1 3.2-2.4 2.8-0.7 3 1.1 5.4 0.9 1.3 2.1 0.5 6.2-1.2 6.3-2 4.3-2.8 5-0.2 4.1-2.6 5.9-1.9 4.7 0.6 3.3-0.7 6.5-4.9 3.6-1.5 1.2-1.4-0.8-9.9 1.4-2.2 2.6-1.2 1.9 1.3 2.4 5.7 3.6 3.6 4.2 3 1.9 2.8 1.6 6.6-1 3 0.6 4.6-1.7 4.5 2 4.7 0.1 4.7-0.4 1.5-4.2 5.4-0.3 4.7-1.4 4.7-2.8 4.4 0.1 3.8-2.5 2.6-1.9 3.1-2.8 2.2-0.7 1.7 0.6 1.9 3.9 5.8 0.3 1.5-0.4 1.6-1.2 1.4-7.5 4.7-3.3 1-2.9 2-5.2 1-3.4 4.2-6.6 1.9-1.3-0.3-2.8-2-3.2-0.2-4.1 4-1.9 4.4 0.1 1.7 1.3 3.2-1 3 0.3 1.7 3 4.1 1.3 0.9 3.6-0 4.6 1.6 4.8-0 12.3-3.4 6.6-4 2.2-2.2 3-1.1 1.2-1.1 2-5 4-1.8 4.4-4.5 2.2-4.3 4-3 7-7.3 3.4-0.2 4.2-2.6 3.4-0.9 2.9-3.2 2.7-1.3 0.6-1.6-8.4-6.3-2.1-2.5-2-6.1-0.6-4.7-2.7-2.7-0.4-1.5 1.6-4.7-0.2-9.2 0.4-1.5 3.7-5.5 0.8-6.2-0.3-3.4 1.6-4.5-0.5-3 1.9-3.4 0.2-3.3 0.7-1.1 0.6-0.1 1.1 1.2 9.9 3.5 3.7 3.2 4.2 2.1 3.7 5.6 5.9 2.6 5 0.3 3.5 4.6 3 0.3 3-1 2.4-2.3 0.8-2.6-0.2-3.1-2.7-4.6-1.1-3.1-2-2.7-0.3-3.6-2.4-2.4-1.4-3.2-3.7-3.2-0.3-1.3 2.1-4.7 6.5-5.4 1.8-0.7 6.4 0.7 6.1-1.8 2.7-1.9 1.5-0.3 3.4 1 1.5-0.3 2.7-2 1.5-0.4 8.2-0 3-0.6 2.8-2 5.6-2.6 2.3-3 0.9-5.2 5.8-2.8 4 0.7 3.7-0.4 4.5 1.6 3.2 0.1 3.8-1 2.3-2.3 1.7-0.9 0.8 0.3-0.4 2 3.6 4.8 2.4 4.6 1.6 4.9 1.4 0.7 10.9-0.2 4.6-1.4 4.5-2.3 9-2.7M753 839.6l3.7-0.6 5.1-1.7 3.4 0.9 1.9-0.2 4.5-2.3 2.9-4.3 3-1.3 1.5-3.1 3.8-3.2 2.2-2.3 3.1-1.4 2.5-2 2.8-3.9 3.2-5.9 10.8-7.4 1.5-3 4.6-2.4 2.4-4.5 2.8-2.4 1.9-0.7 2 0.5 0.7 1.7-2.5 4.5-2.6 8.9-4.1 3-1.2 3.4-3 2-1.7 2.6-4.3 2.6-2.8 4-8.1 7.6-2.8 4.3-4.9 2.4-2.5 3.3-3.7 3.1 0.5-0.7 1 0.2 3 2.2 1.8 0.3 3.6-0.9 3.1-0 7.7 2.3 5.5-1.2 0.4 1.1-3.5 3.8-4.1 0.8-3.2 2-3.7-0.4-1.3 0.9-0.3 1.5 0.9 6.6 2.5 6.2 1.2 1.7 6.9 1.1 4.4-3 1.7-0.2 3.4 1.7 0.7 1.4 0 3.1 1.8 4.3-0.7 4.3 0.6 5 0.7 1.6 6.7 7.6 3.7 3.1 5.1 1.1 1.7 2.8 2.6 2.4 2.5 8-4.9 15.6-2.6 4.2 0.3 1.7 6 5.6 6.3 3.1 5.9-0.4 2.6 2.3 3.6 4.8 1.5 1.2 1.8 0.4 1.8-0.6 4.6-3.2 2.3-2.9 3.1-1.1 2.9-2 1.8-0.3 3 2.2 3 1.3 3.5 3.2 3.2 0.8 3 1.5 2.4 2.1 3.5 5.3 5.8 3 2.2 2.9 5.2 3.7 5.1 1.6 1.1 1 2.1 4.4 6.1 6.9 3 5.5 2.9 1.6 2.2 2.1 3.3 1.3 1.1 1.2 1.5 3.3 3.2 1.6 2.2 2.6 3 1.3 3.4 3.2 4.9 0.9 2.8 1.3 4.9 6.7 1.2 1.1 3.6 1.1 1.3 1 1.4 3.4 1.2 1 3.2 1 6.4 4.5 1.6 5.2 4.9 6.8 4.8 4.4 4.6 2.1 2.4 2.3 3.2 1.3 1.4 3.7 4.1 4.8 5.4 3.5 2 2.9 2.5 2.3 7.6 3.8 1.1 1.3 1.3 3.7 1.2 1.2 3.3 1.3 2.4 2.3 3.1 1.5 3.1 4.1 4.6 2.4 8.2 7.7 4.3 1.9 2.4 2.2 3.2 1.5 2.1 2.8 3.6 1 1.2 1.2 1.2 3.7 3.3 3.9 1.5 0.8 5.3 0.6 1.3 0.9 6.6 6.8 2.6 3.9 1.4 5 1.1 1.1 5.1 1.3 2.2 2.2 2.7 1.6 7.6 12.1 8.6 8.9M753 945.5l8.2 5.1 3.5 3.8 2.7 4.2 1.6 0.7 5.2-0 4.9 1 3.4 4 3.3 1.6 1.4 5.5 4.1 3.8 1.7 0.3 5.5-0.8 6.3 3.3 4.3 4.8 3.7 2.4 1.9 2.6 5.1 2 2.1 2.7 3 1.7 2.3 4.6 3.9 3.3 4.8 2.4 2.9 4.4 3.9 4.1 4.2 3-0.2 2.2-1.9 2.8 0 1.4 2.8 3.9 1.5 0.8 9.2 0.6 2.2 1.3 1.4 3.2 0.2 3.3-1 2.8-2.3 2.9 0.1 1.8 2.7 2.4 1.6 3.3 2.4 2.2 2.1 4.2 3.8 2.9 2.1 4.8 2.7 2.1 5.1 2.4 1.1 1.2 0.9 5 3.3 5.5 2.6 2.2 0.9 3.3 1.2 1.8 2 0.5 5.1-0.7 4.8-4.4 4.2-5.8 0.9 0.4 4.2 7.1 0.7 3.4 4 3.8 0.9 3.3 1.8 2.9 0.3 3.6 0.8 1.5 11.3 9.8 5.4 0.5 4.7 1.9 3.8 3.9 4.8-0.5 6 2 2.9 1.7 1.5 0 1.2-1 1.9-3.2 1.4-1.1 1.7-0.3 1.1 1.2 1.2 9.2 3.3 4.1 0.8 3.5 4.9 2.4 3.2 3.6 0.8 1.7 0.2 5.8 3.2 4 2.1 7.4M1428 1158.5l0-8.4 1.7-8.1 2-4.8-0.6-5.8-1.5-3.3-0.2-1.7 2.4-3 0.7-2.4 1.1-1.4 1.8-0.6 3.2 0.3 0.9 1-0.1 5.8 1.1 1.4 8.6 4.4 3.2 0.4 1.5-0.5 0.9-2.4-0.7-3.1 0.6-1.8 2.5-3.1 0.8-2.5 3.3-3 1.6-2.9 1.3-1.2 3.1-1.5 9.1-6.1 5-0.3 3-1.2 3-0.3 3.4-2.5 2.2 0.3 3.3 1.7 2.7-0.3 3.2-1.1 3.6-6.6 8.7-6.4 3.5-3.3 3.3-1.8 2.8-5.2 3-2.7M844.5 813.5l1.5 0.2 1.5 1.3 1 3.1-0.1 1.4-1.3 1.5-1.7 0.6-1.5-1-0.9-2 0.7-3.8M1111.5 893l4.5-7.5 2.1-1.5 1.5 0 0 2.7-0.6 1.8-2.1 2.9-2.4 2.2-2.1 0.5"/>
</g>
<g font-family="&quot;Liberation Sans&quot;,sans-serif" font-size="14.2" text-anchor="middle" fill="#1f1f1f" stroke="#fffef4" stroke-width="5" paint-order="stroke" letter-spacing="0.7">
<text transform="translate(80.0 133.8) rotate(47.7)" y="4.9">1000</text>
<text transform="translate(132.5 96.9) rotate(49)" y="4.9">2000</text>
<text transform="translate(19.5 335.4) rotate(-53.6)" y="4.9">1000</text>
<text transform="translate(108.0 372.0) rotate(-63)" y="4.9">1000</text>
<text transform="translate(440.4 240.0) rotate(43)" y="4.9">1000</text>
<text transform="translate(975.7 22.5) rotate(34)" y="4.9">1000</text>
<text transform="translate(1097.2 129.0) rotate(43)" y="4.9">2000</text>
<text transform="translate(1457.0 273.0) rotate(-88)" y="4.9">2000</text>
<text transform="translate(769.5 337.0) rotate(40)" y="4.9">2000</text>
<text transform="translate(873.0 375.0) rotate(-2)" y="4.9">2000</text>
<text transform="translate(835.5 473.5) rotate(86)" y="4.9">2000</text>
<text transform="translate(1182.6 520.6) rotate(45)" y="4.9">1000</text>
<text transform="translate(1511.0 592.0) rotate(71)" y="4.9">2000</text>
<text transform="translate(177.6 650.5) rotate(43)" y="4.9">1000</text>
<text transform="translate(603.6 549.0) rotate(-41)" y="4.9">1000</text>
<text transform="translate(626.0 721.6) rotate(34)" y="4.9">1000</text>
<text transform="translate(699.0 789.5) rotate(52)" y="4.9">1000</text>
<text transform="translate(276.0 864.5) rotate(59)" y="4.9">1000</text>
<text transform="translate(60.3 932.6) rotate(55)" y="4.9">1000</text>
<text transform="translate(826.5 997.0) rotate(46.5)" y="4.9">1000</text>
<text transform="translate(1472.0 1106.6) rotate(-23)" y="4.9">1000</text>
</g>
<g font-family="&quot;Liberation Sans&quot;,sans-serif" font-size="14.2" text-anchor="middle" fill="#1f1f1f" stroke="#1f1f1f" stroke-width="0.35" letter-spacing="0.7">
<text transform="translate(80.0 133.8) rotate(47.7)" y="4.9">1000</text>
<text transform="translate(132.5 96.9) rotate(49)" y="4.9">2000</text>
<text transform="translate(19.5 335.4) rotate(-53.6)" y="4.9">1000</text>
<text transform="translate(108.0 372.0) rotate(-63)" y="4.9">1000</text>
<text transform="translate(440.4 240.0) rotate(43)" y="4.9">1000</text>
<text transform="translate(975.7 22.5) rotate(34)" y="4.9">1000</text>
<text transform="translate(1097.2 129.0) rotate(43)" y="4.9">2000</text>
<text transform="translate(1457.0 273.0) rotate(-88)" y="4.9">2000</text>
<text transform="translate(769.5 337.0) rotate(40)" y="4.9">2000</text>
<text transform="translate(873.0 375.0) rotate(-2)" y="4.9">2000</text>
<text transform="translate(835.5 473.5) rotate(86)" y="4.9">2000</text>
<text transform="translate(1182.6 520.6) rotate(45)" y="4.9">1000</text>
<text transform="translate(1511.0 592.0) rotate(71)" y="4.9">2000</text>
<text transform="translate(177.6 650.5) rotate(43)" y="4.9">1000</text>
<text transform="translate(603.6 549.0) rotate(-41)" y="4.9">1000</text>
<text transform="translate(626.0 721.6) rotate(34)" y="4.9">1000</text>
<text transform="translate(699.0 789.5) rotate(52)" y="4.9">1000</text>
<text transform="translate(276.0 864.5) rotate(59)" y="4.9">1000</text>
<text transform="translate(60.3 932.6) rotate(55)" y="4.9">1000</text>
<text transform="translate(826.5 997.0) rotate(46.5)" y="4.9">1000</text>
<text transform="translate(1472.0 1106.6) rotate(-23)" y="4.9">1000</text>
</g>
</svg>
<span class="t" style="left:1051.0px;top:14.6px;font-size:16.3px;color:#d6d6d6;letter-spacing:-0.44px;">Multi_Scale_Contour_Styling</span>
<span class="t" style="left:1299.0px;top:16.4px;font-size:15.3px;color:#8f8f8f;letter-spacing:-0.32px;font-style:italic;">Command Search (Alt+Q)</span>
<span class="t" style="left:1840.0px;top:14.6px;font-size:16.3px;color:#dcdcdc;letter-spacing:-0.52px;">Spyridon - STARIDAS GEOGRAPHY #MakingMapsPretty</span>
<span class="t" style="left:2351.0px;top:13.8px;font-size:19px;color:#cfcfcf;letter-spacing:-0.06px;">?</span>
<span class="t" style="left:25.0px;top:52.5px;font-size:17.6px;color:#e6e6e6;letter-spacing:-0.19px;">Project</span>
<span class="t" style="left:127.0px;top:52.5px;font-size:17.6px;color:#e6e6e6;letter-spacing:0.39px;">Map</span>
<span class="t" style="left:205.0px;top:52.5px;font-size:17.6px;color:#e6e6e6;letter-spacing:-0.10px;">Insert</span>
<span class="t" style="left:292.0px;top:52.5px;font-size:17.6px;color:#e6e6e6;letter-spacing:-0.39px;">Analysis</span>
<span class="t" style="left:397.0px;top:52.5px;font-size:17.6px;color:#e6e6e6;letter-spacing:0.14px;">View</span>
<span class="t" style="left:478.0px;top:52.5px;font-size:17.6px;color:#e6e6e6;letter-spacing:-0.23px;">Edit</span>
<span class="t" style="left:551.0px;top:52.5px;font-size:17.6px;color:#e6e6e6;letter-spacing:-0.02px;">Imagery</span>
<span class="t" style="left:657.0px;top:52.5px;font-size:17.6px;color:#e6e6e6;letter-spacing:-0.51px;">Share</span>
<span class="t" style="left:744.0px;top:52.5px;font-size:17.6px;color:#e6e6e6;letter-spacing:0.06px;">Help</span>
<span class="t" style="left:851.0px;top:52.5px;font-size:17.6px;color:#e6e6e6;letter-spacing:-0.40px;">Feature Layer</span>
<span class="t" style="left:998.0px;top:52.5px;font-size:17.6px;color:#ffffff;letter-spacing:-0.49px;font-weight:bold;">Labeling</span>
<span class="t" style="left:1108.0px;top:52.5px;font-size:17.6px;color:#e6e6e6;letter-spacing:-0.19px;">Data</span>
<span class="t" style="left:16.0px;top:133.4px;font-size:15.3px;color:#ffffff;letter-spacing:-0.03px;">Label</span>
<span class="t" style="left:16.0px;top:185.2px;font-size:15px;color:#cfcfcf;letter-spacing:-0.46px;">Layer</span>
<span class="t" style="left:80.0px;top:90.4px;font-size:15.3px;color:#e3e3e3;letter-spacing:-0.39px;">Class</span>
<span class="t" style="left:135.0px;top:90.4px;font-size:15.3px;color:#e3e3e3;letter-spacing:0.00px;">Elevation 1:200,000</span>
<span class="t" style="left:329.0px;top:100.2px;font-size:8.5px;color:#c9c9c9;letter-spacing:0.73px;font-weight:bold;">SQL</span>
<span class="t" style="left:355.0px;top:90.4px;font-size:15.3px;color:#e3e3e3;letter-spacing:0.04px;">SQL Query</span>
<span class="t" style="left:104.0px;top:122.4px;font-size:15.3px;color:#e3e3e3;letter-spacing:-0.08px;">Label Features In This Class</span>
<span class="t" style="left:80.0px;top:154.4px;font-size:15.3px;color:#e3e3e3;letter-spacing:0.02px;">Field</span>
<span class="t" style="left:133.0px;top:154.4px;font-size:15.3px;color:#e3e3e3;letter-spacing:-1.46px;">ELEV</span>
<span class="t" style="left:337.0px;top:163.4px;font-size:10px;color:#d0d0d0;letter-spacing:1.45px;font-weight:bold;">[ ]</span>
<span class="t" style="left:356.0px;top:154.4px;font-size:15.3px;color:#e3e3e3;letter-spacing:-0.04px;">Expression</span>
<span class="t" style="left:223.0px;top:185.2px;font-size:15px;color:#cfcfcf;letter-spacing:-0.56px;">Label Class</span>
<span class="t" style="left:482.0px;top:90.4px;font-size:15.3px;color:#e3e3e3;letter-spacing:0.38px;">In Beyond</span>
<span class="t" style="left:482.0px;top:122.4px;font-size:15.3px;color:#e3e3e3;letter-spacing:0.45px;">Out Beyond</span>
<span class="t" style="left:488.0px;top:154.4px;font-size:15.3px;color:#e3e3e3;letter-spacing:0.04px;">Clear Limits</span>
<span class="t" style="left:625.0px;top:90.4px;font-size:15.3px;color:#e3e3e3;letter-spacing:-0.09px;">1:100,000</span>
<span class="t" style="left:625.0px;top:122.4px;font-size:15.3px;color:#e3e3e3;letter-spacing:0.81px;">&lt;None&gt;</span>
<span class="t" style="left:552.0px;top:185.2px;font-size:15px;color:#cfcfcf;letter-spacing:-0.07px;">Visibility Range</span>
<span class="t" style="left:812.0px;top:106.5px;font-size:23px;color:#8d8d8d;letter-spacing:0.13px;font-weight:bold;font-family:'Liberation Serif',serif;">A A</span>
<span class="t" style="left:797.0px;top:132.4px;font-size:15.3px;color:#5a5a5a;letter-spacing:-0.15px;">Boundary</span>
<span class="t" style="left:930.0px;top:109.9px;font-size:17.5px;color:#7e7e7e;letter-spacing:-0.94px;font-weight:bold;font-style:italic;">AA</span>
<span class="t" style="left:896.0px;top:132.4px;font-size:15.3px;color:#5a5a5a;letter-spacing:0.03px;">Landform/P...</span>
<span class="t" style="left:1044.0px;top:112.8px;font-size:12.5px;color:#9a9a9a;letter-spacing:1.01px;font-weight:bold;">Aa</span>
<span class="t" style="left:1008.0px;top:132.4px;font-size:15.3px;color:#5a5a5a;letter-spacing:-0.15px;">Landmark/P...</span>
<span class="t" style="left:1141.0px;top:100.9px;font-size:15.3px;color:#e3e3e3;letter-spacing:0.84px;">Nunito</span>
<span class="t" style="left:1328.0px;top:100.9px;font-size:15.3px;color:#e3e3e3;letter-spacing:0.94px;">8 pt</span>
<span class="t" style="left:1393.0px;top:96.8px;font-size:22px;color:#d4d4d4;letter-spacing:-1.13px;font-family:'Liberation Serif',serif;">A</span>
<span class="t" style="left:1424.0px;top:102.4px;font-size:15px;color:#d4d4d4;letter-spacing:0.40px;font-family:'Liberation Serif',serif;">A</span>
<span class="t" style="left:1141.0px;top:143.4px;font-size:15.3px;color:#e3e3e3;letter-spacing:0.23px;">SemiBold</span>
<span class="t" style="left:1057.0px;top:185.2px;font-size:15px;color:#cfcfcf;letter-spacing:-0.13px;">Text Symbol</span>
<span class="t" style="left:1506.0px;top:134.4px;font-size:15.3px;color:#ececec;letter-spacing:-0.63px;">Basic</span>
<span class="t" style="left:1508.0px;top:151.7px;font-size:15.3px;color:#ececec;letter-spacing:0.09px;">Line</span>
<span class="t" style="left:1597.0px;top:134.4px;font-size:15.3px;color:#ececec;letter-spacing:-0.38px;">European</span>
<span class="t" style="left:1606.0px;top:151.7px;font-size:15.3px;color:#ececec;letter-spacing:-0.46px;">Streets</span>
<span class="t" style="left:1714.0px;top:134.4px;font-size:15.3px;color:#ececec;letter-spacing:0.37px;">North</span>
<span class="t" style="left:1686.0px;top:151.7px;font-size:15.3px;color:#ececec;letter-spacing:-0.27px;">American Str...</span>
<span class="t" style="left:1573.0px;top:185.2px;font-size:15px;color:#cfcfcf;letter-spacing:-0.17px;">Label Placement</span>
<span class="t" style="left:1861.0px;top:90.4px;font-size:15.3px;color:#e3e3e3;letter-spacing:-0.22px;">Pause</span>
<span class="t" style="left:1939.0px;top:90.4px;font-size:15.3px;color:#e3e3e3;letter-spacing:0.24px;">Lock</span>
<span class="t" style="left:1861.0px;top:122.4px;font-size:15.3px;color:#e3e3e3;letter-spacing:0.35px;">View Unplaced</span>
<span class="t" style="left:1863.0px;top:154.4px;font-size:15.3px;color:#e3e3e3;letter-spacing:0.86px;">More</span>
<span class="t" style="left:1879.0px;top:185.2px;font-size:15px;color:#cfcfcf;letter-spacing:0.35px;">Map</span>
<span class="t" style="left:17.0px;top:222.9px;font-size:21.6px;color:#ececec;letter-spacing:0.04px;">Contents</span>
<span class="t" style="left:50.0px;top:264.9px;font-size:15.3px;color:#bdbdbd;letter-spacing:-0.20px;font-style:italic;">Search</span>
<span class="t" style="left:30.0px;top:362.6px;font-size:18.4px;color:#f0f0f0;letter-spacing:-0.52px;font-weight:bold;">Labeling</span>
<span class="t" style="left:56.0px;top:400.7px;font-size:15.3px;color:#e3e3e3;letter-spacing:0.84px;">Map</span>
<span class="t" style="left:68.0px;top:432.6px;font-size:15.3px;color:#f2f2f2;letter-spacing:0.40px;">Contours</span>
<span class="t" style="left:86.0px;top:460.3px;font-size:15.3px;color:#eeeeee;letter-spacing:0.03px;">Elevation 1:50,000</span>
<span class="t" style="left:86.0px;top:484.3px;font-size:15.3px;color:#eeeeee;letter-spacing:0.06px;">Elevation 1:100,000</span>
<span class="t" style="left:86.0px;top:508.3px;font-size:15.3px;color:#eeeeee;letter-spacing:0.06px;">Elevation 1:200,000</span>
<span class="t" style="left:68.0px;top:536.9px;font-size:15.3px;color:#e6e6e6;letter-spacing:0.40px;">Contours</span>
<span class="t" style="left:487.0px;top:222.4px;font-size:15.3px;color:#f0f0f0;letter-spacing:0.84px;">Map</span>
<span class="t" style="left:589.0px;top:222.4px;font-size:15.3px;color:#e0e0e0;letter-spacing:0.50px;">Map1</span>
<span class="t" style="left:467.0px;top:1408.9px;font-size:15.3px;color:#e3e3e3;letter-spacing:-0.09px;">1:200,000</span>
<span class="t" style="left:713.0px;top:1409.2px;font-size:15px;color:#2f9ae6;letter-spacing:0.36px;font-weight:bold;">N</span>
<span class="t" style="left:1108.0px;top:1409.4px;font-size:15.3px;color:#d8d8d8;letter-spacing:-0.08px;">20.3998345°E 40.0338571°N</span>
<span class="t" style="left:1709.0px;top:1408.4px;font-size:15.3px;color:#7d7d7d;letter-spacing:0.01px;">Selected Features: 0</span>
<span class="t" style="left:1995.0px;top:222.9px;font-size:21.6px;color:#4d96e0;letter-spacing:-0.38px;">Label Class - Contours</span>
<span class="t" style="left:2167.4px;top:254.6px;font-size:19.6px;color:#ececec;letter-spacing:-0.19px;">Elevation 1:200,000</span>
<span class="t" style="left:1995.6px;top:293.8px;font-size:17.6px;color:#ffffff;letter-spacing:-1.11px;font-weight:bold;">Class</span>
<span class="t" style="left:2078.6px;top:293.8px;font-size:17.6px;color:#e3e3e3;letter-spacing:-0.14px;">Symbol</span>
<span class="t" style="left:2149.0px;top:293.8px;font-size:17.6px;color:#e3e3e3;letter-spacing:-0.15px;">Position</span>
<span class="t" style="left:2018.0px;top:354.9px;font-size:13px;color:#d0d0d0;letter-spacing:1.92px;font-weight:bold;">[ ]</span>
<span class="t" style="left:2051.0px;top:356.8px;font-size:12.5px;color:#c9c9c9;letter-spacing:-0.67px;">SQL</span>
<span class="t" style="left:2023.5px;top:405.9px;font-size:15.3px;color:#e3e3e3;letter-spacing:0.31px;">Load</span>
<span class="t" style="left:2107.6px;top:405.9px;font-size:15.3px;color:#e3e3e3;letter-spacing:-0.27px;">Save</span>
<span class="t" style="left:2190.0px;top:405.9px;font-size:15.3px;color:#e3e3e3;letter-spacing:0.05px;">Remove</span>
<span class="t" style="left:2467.6px;top:451.7px;font-size:15.3px;color:#e3e3e3;letter-spacing:-0.44px;">SQL</span>
<span class="t" style="left:1995.0px;top:486.0px;font-size:14.3px;color:#dddddd;letter-spacing:0.04px;font-family:'Liberation Mono',monospace;"><span style="color:#7a76ad">MOD</span><span style="color:#9a9a9a">(</span><span style="color:#f0f0f0">ELEV</span><span style="color:#7d7d7d"> + </span><b style="color:#e0552a">1000</b><span style="color:#8a8a8a">, </span><b style="color:#e0552a">1000</b><span style="color:#9a9a9a">) </span><span style="color:#8a8a8a">=</span> <b style="color:#e0552a">0</b></span>
<span class="t" style="left:2037.0px;top:591.3px;font-size:15.3px;color:#d8ca6c;letter-spacing:0.25px;">The expression can't be edited in Clause mode.</span>
<span class="t" style="left:1995.0px;top:1357.5px;font-size:15.3px;color:#4a8fd8;letter-spacing:0.30px;">Learn more about queries</span>
<span class="t" style="left:2380.0px;top:1404.4px;font-size:15.3px;color:#6a6a6a;letter-spacing:0.80px;">Apply</span>
<span class="t" style="left:2481.0px;top:1404.4px;font-size:15.3px;color:#6a6a6a;letter-spacing:0.11px;">Cancel</span>
</body></html>
